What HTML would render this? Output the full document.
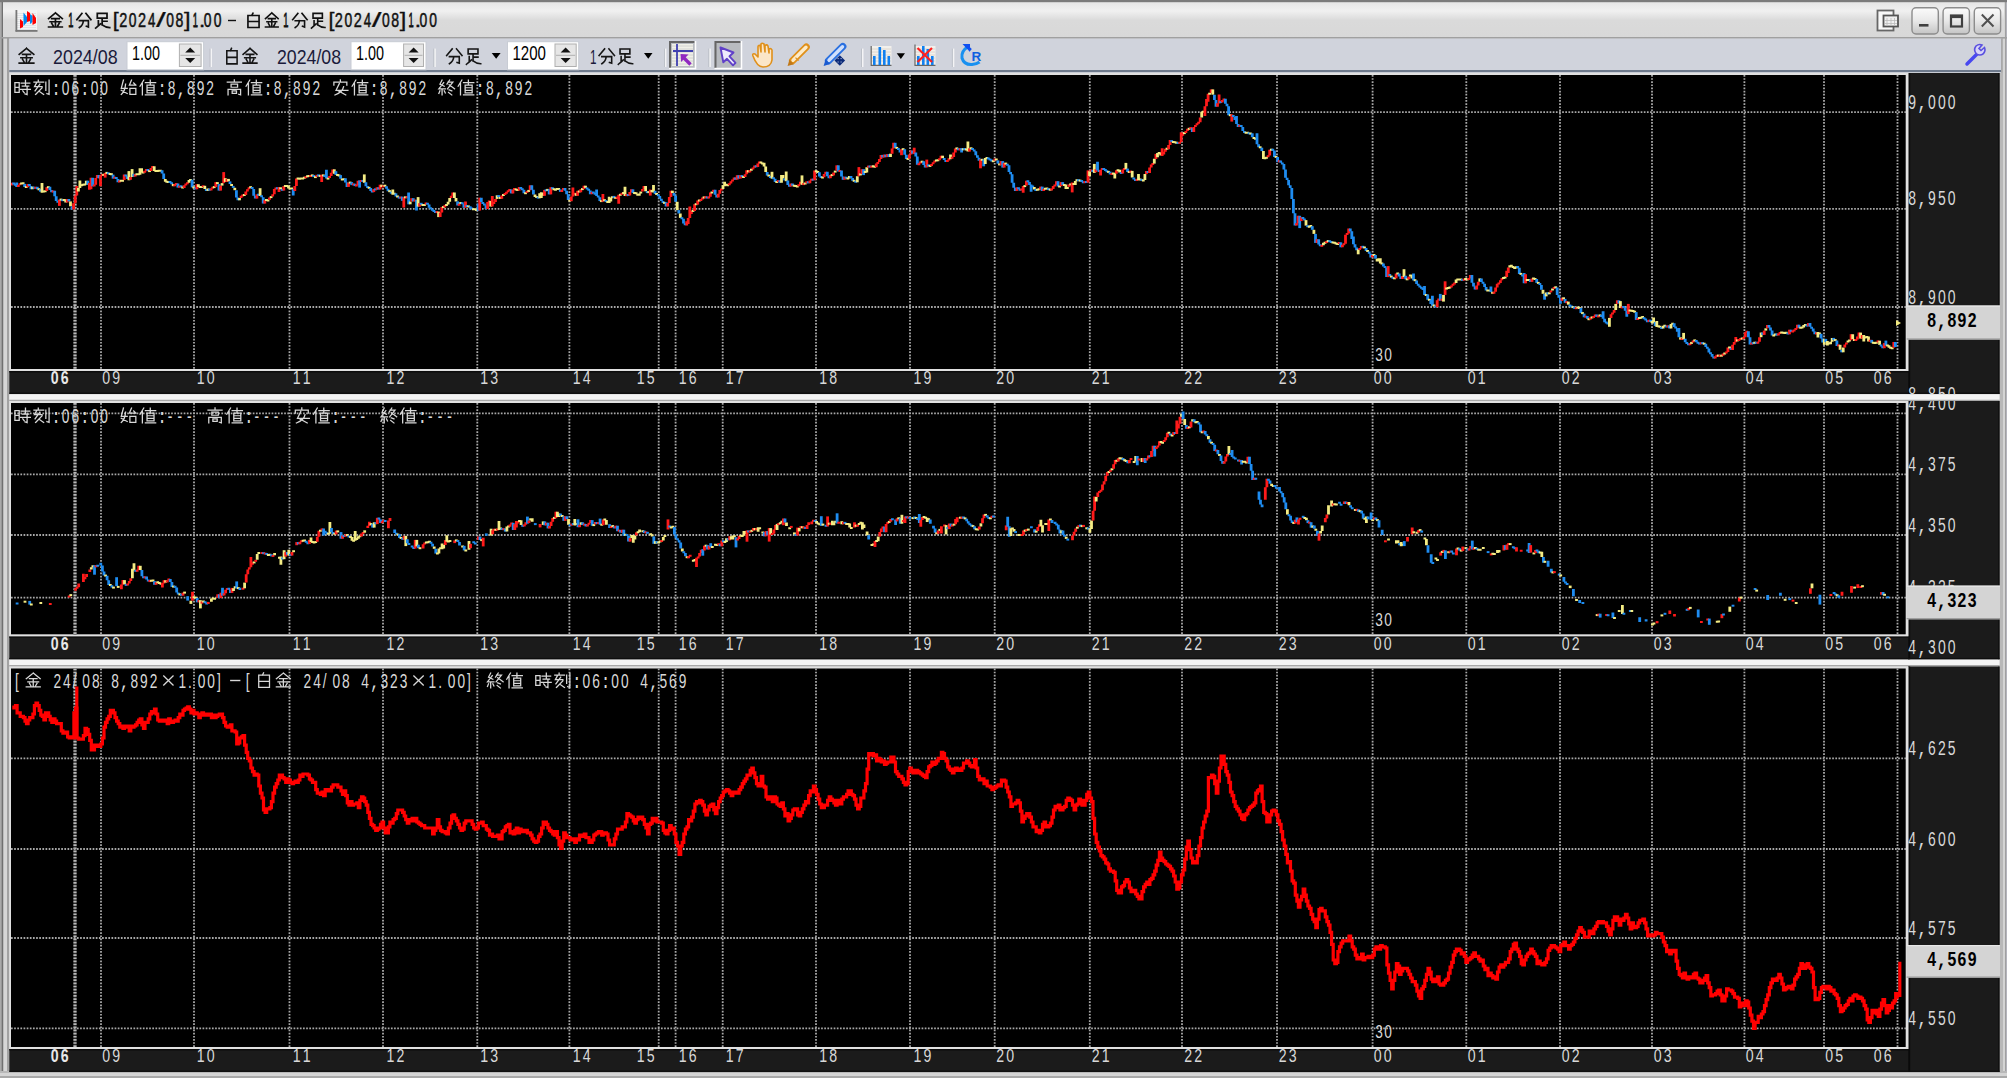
<!DOCTYPE html><html><head><meta charset="utf-8"><style>html,body{margin:0;padding:0;background:#fff;width:2007px;height:1081px}svg{display:block}</style></head><body>
<svg width="2007" height="1081" viewBox="0 0 2007 1081">
<defs>
<symbol id="g-kin" overflow="visible"><path d="M8 1L1.5 6.5M8 1L14.5 6.5M4.5 6.5H11.5M3 9.5H13M8 6.5V14.5M4.5 11L5.8 13.3M11.5 11L10.2 13.3M1.5 14.5H14.5" fill="none" stroke-linecap="square" stroke-linejoin="miter"/></symbol>
<symbol id="g-bun" overflow="visible"><path d="M6 1.5L1 7.5M10 1.5L15 7.5M3.5 8.5H12.5V14.5L10.5 13.8M7.5 8.5Q7 13 3.5 15" fill="none" stroke-linecap="square" stroke-linejoin="miter"/></symbol>
<symbol id="g-soku" overflow="visible"><path d="M3.5 1.5H12.5V6H3.5ZM8 6V12.5M8 9H12.5M4.5 8.5V13M2 15.5Q5 13 6.5 11.5M8 12.5Q11 15 15 15" fill="none" stroke-linecap="square" stroke-linejoin="miter"/></symbol>
<symbol id="g-haku" overflow="visible"><path d="M7.5 0.8L6.5 3M3 3H13V15H3ZM3 9H13" fill="none" stroke-linecap="square" stroke-linejoin="miter"/></symbol>
<symbol id="g-ji" overflow="visible"><path d="M1.2 3.5H5.2V13H1.2ZM1.2 8.2H5.2M7 4H15M11 1V7M8 7H14M6.5 10H15.5M12.5 8V15.2L10.5 14.5M8.5 11.5L9.8 13.3" fill="none" stroke-linecap="square" stroke-linejoin="miter"/></symbol>
<symbol id="g-koku" overflow="visible"><path d="M5 1V3M1 3H10M3.5 3.5L1.5 7.5H8.5M6.5 5L2 11.5M8.5 8.5L2.5 15M6 12L10 15M12 3V11M15 1V15L13 14.2" fill="none" stroke-linecap="square" stroke-linejoin="miter"/></symbol>
<symbol id="g-shi" overflow="visible"><path d="M3.5 1L1.5 9H7M5.5 5Q5 12 1.5 15M1.5 11L7 14M11 1L9 6H15M13 3.8L15 6M9.5 9H15V15H9.5Z" fill="none" stroke-linecap="square" stroke-linejoin="miter"/></symbol>
<symbol id="g-chi" overflow="visible"><path d="M4.5 1L1 7M3.2 4.5V15.5M6 3.5H15.5M10.5 1V5.5M7.5 6H14V13.5H7.5ZM7.5 8.5H14M7.5 11H14M6 15.5H15.5" fill="none" stroke-linecap="square" stroke-linejoin="miter"/></symbol>
<symbol id="g-kou" overflow="visible"><path d="M8 0.8V3M1.5 3H14.5M5 5H11V8H5ZM2.2 10V15.5M2.2 10H13.8V15.5L12 14.8M6 11.5H10V14H6Z" fill="none" stroke-linecap="square" stroke-linejoin="miter"/></symbol>
<symbol id="g-an" overflow="visible"><path d="M8 0.8V2.8M2 6V3H14V6M7 4.5L4 11H15M11 7.5Q10 13 3 15.5M6 11.5L13 15.5" fill="none" stroke-linecap="square" stroke-linejoin="miter"/></symbol>
<symbol id="g-shu" overflow="visible"><path d="M4 1L2 5L6 7M5.5 3.5L1 9.5H7M4 9.5V15.5M2 11.5L1 14M6 11.5L7 13.5M11 1L8.5 5M9.5 3H14L9 9.5M10.5 5.5L15.5 9.5M10.5 10.5L13 11.5M10 13L13 15.5" fill="none" stroke-linecap="square" stroke-linejoin="miter"/></symbol>
<linearGradient id="tg" x1="0" y1="0" x2="0" y2="1"><stop offset="0" stop-color="#e2e2e2"/><stop offset="0.3" stop-color="#f0f0f0"/><stop offset="0.55" stop-color="#dadada"/><stop offset="1" stop-color="#d8d8d8"/></linearGradient>
<linearGradient id="bg" x1="0" y1="0" x2="0" y2="1"><stop offset="0" stop-color="#fbfbfb"/><stop offset="0.5" stop-color="#e8e8e8"/><stop offset="1" stop-color="#c4c4c4"/></linearGradient>
</defs>
<rect x="0" y="0" width="2007" height="1081" fill="#ffffff"/>
<rect x="0" y="0" width="2007" height="1078" fill="#d6d6d6"/>
<rect x="0" y="0" width="1.5" height="1078" fill="#aaaaaa"/>
<rect x="1.5" y="0" width="2" height="1078" fill="#707070"/>
<rect x="3.5" y="0" width="3.5" height="1078" fill="#d6d6d6"/>
<rect x="7" y="37" width="2.3" height="1041" fill="#a2a2a2"/>
<rect x="1999.5" y="37" width="3.5" height="1041" fill="#b8b8b8"/>
<rect x="2003" y="0" width="2" height="1078" fill="#d4d4d4"/>
<rect x="2005" y="0" width="1" height="1078" fill="#a0a0a0"/>
<rect x="2006" y="0" width="1" height="1078" fill="#b4b4bc"/>
<rect x="0" y="1071" width="2007" height="2" fill="#b8b8b8"/>
<rect x="0" y="1073" width="2007" height="3" fill="#d4d4d4"/>
<rect x="0" y="1076" width="2007" height="2" fill="#a8a8a8"/>
<rect x="0" y="1078" width="2007" height="3" fill="#ffffff"/>
<rect x="3" y="0" width="2001" height="37" fill="url(#tg)"/>
<rect x="0" y="0" width="2007" height="2.2" fill="#7a7a7a"/>
<rect x="0" y="37" width="2007" height="1.6" fill="#a0a0a0"/>
<rect x="16" y="10" width="21" height="21" fill="#f4f4f4"/>
<rect x="17" y="13" width="19" height="0.7" fill="#d8dde0"/>
<rect x="17" y="15" width="19" height="0.7" fill="#d8dde0"/>
<rect x="17" y="17" width="19" height="0.7" fill="#d8dde0"/>
<rect x="17" y="19" width="19" height="0.7" fill="#d8dde0"/>
<rect x="17" y="21" width="19" height="0.7" fill="#d8dde0"/>
<rect x="17" y="23" width="19" height="0.7" fill="#d8dde0"/>
<rect x="17" y="25" width="19" height="0.7" fill="#d8dde0"/>
<rect x="17" y="27" width="19" height="0.7" fill="#d8dde0"/>
<rect x="17" y="29" width="19" height="0.7" fill="#d8dde0"/>
<rect x="15.5" y="10" width="1.8" height="21.5" fill="#777"/>
<rect x="15.5" y="30" width="22" height="1.8" fill="#777"/>
<path d="M20 28.5V19L23 21.5V27Z" fill="#ff0000"/>
<path d="M23.5 26V12.5L27 17V22Z" fill="#0088ee"/>
<path d="M27 22V11L30 13V21Z" fill="#ff0000"/>
<path d="M30 24V14L32.5 16V22Z" fill="#0088ee"/>
<path d="M32.5 25V13L36 18V23Z" fill="#ff0000"/>
<use href="#g-kin" transform="translate(47.00,11.80) scale(1.056,1.050)" stroke="#101010" stroke-width="1.614"/>
<text x="0" y="0" transform="translate(68.20,26.90) scale(0.4554,1)" font-family="Liberation Sans" font-weight="normal" font-size="20.43" fill="#101010" stroke="#101010" stroke-width="0.77">1</text>
<use href="#g-bun" transform="translate(75.90,11.80) scale(1.000,1.050)" stroke="#101010" stroke-width="1.659"/>
<use href="#g-soku" transform="translate(93.50,11.80) scale(1.081,1.050)" stroke="#101010" stroke-width="1.595"/>
<text x="0" y="0" transform="translate(112.70,26.90) scale(1.0524,1)" font-family="Liberation Sans" font-weight="normal" font-size="20.43" fill="#101010" stroke="#101010" stroke-width="0.33">[</text>
<text x="0" y="0" transform="translate(119.17,26.90) scale(0.7101,1)" font-family="Liberation Sans" font-weight="normal" font-size="20.43" fill="#101010" stroke="#101010" stroke-width="0.49">2</text>
<text x="0" y="0" transform="translate(128.74,26.90) scale(0.6802,1)" font-family="Liberation Sans" font-weight="normal" font-size="20.43" fill="#101010" stroke="#101010" stroke-width="0.51">0</text>
<text x="0" y="0" transform="translate(138.07,26.90) scale(0.7101,1)" font-family="Liberation Sans" font-weight="normal" font-size="20.43" fill="#101010" stroke="#101010" stroke-width="0.49">2</text>
<text x="0" y="0" transform="translate(147.97,26.90) scale(0.6462,1)" font-family="Liberation Sans" font-weight="normal" font-size="20.43" fill="#101010" stroke="#101010" stroke-width="0.54">4</text>
<text x="0" y="0" transform="translate(156.00,26.90) scale(1.7266,1)" font-family="Liberation Sans" font-weight="normal" font-size="20.43" fill="#101010" stroke="#101010" stroke-width="0.20">/</text>
<text x="0" y="0" transform="translate(166.34,26.90) scale(0.6802,1)" font-family="Liberation Sans" font-weight="normal" font-size="20.43" fill="#101010" stroke="#101010" stroke-width="0.51">0</text>
<text x="0" y="0" transform="translate(175.47,26.90) scale(0.6874,1)" font-family="Liberation Sans" font-weight="normal" font-size="20.43" fill="#101010" stroke="#101010" stroke-width="0.51">8</text>
<text x="0" y="0" transform="translate(184.06,26.90) scale(1.1547,1)" font-family="Liberation Sans" font-weight="normal" font-size="20.43" fill="#101010" stroke="#101010" stroke-width="0.30">]</text>
<text x="0" y="0" transform="translate(192.80,26.90) scale(0.4554,1)" font-family="Liberation Sans" font-weight="normal" font-size="20.43" fill="#101010" stroke="#101010" stroke-width="0.77">1</text>
<text x="0" y="0" transform="translate(198.82,26.90) scale(1.1851,1)" font-family="Liberation Sans" font-weight="normal" font-size="20.43" fill="#101010" stroke="#101010" stroke-width="0.30">.</text>
<text x="0" y="0" transform="translate(203.84,26.90) scale(0.6802,1)" font-family="Liberation Sans" font-weight="normal" font-size="20.43" fill="#101010" stroke="#101010" stroke-width="0.51">0</text>
<text x="0" y="0" transform="translate(213.64,26.90) scale(0.6802,1)" font-family="Liberation Sans" font-weight="normal" font-size="20.43" fill="#101010" stroke="#101010" stroke-width="0.51">0</text>
<path d="M228 20.5H236" stroke="#101010" stroke-width="1.4"/>
<use href="#g-haku" transform="translate(244.60,12.40) scale(1.113,1.012)" stroke="#101010" stroke-width="1.506"/>
<use href="#g-kin" transform="translate(264.00,11.80) scale(0.975,1.050)" stroke="#101010" stroke-width="1.580"/>
<text x="0" y="0" transform="translate(283.30,26.90) scale(0.4554,1)" font-family="Liberation Sans" font-weight="normal" font-size="20.43" fill="#101010" stroke="#101010" stroke-width="0.77">1</text>
<use href="#g-bun" transform="translate(291.60,11.80) scale(1.038,1.050)" stroke="#101010" stroke-width="1.533"/>
<use href="#g-soku" transform="translate(309.40,11.80) scale(1.038,1.050)" stroke="#101010" stroke-width="1.533"/>
<text x="0" y="0" transform="translate(328.39,26.90) scale(1.0524,1)" font-family="Liberation Sans" font-weight="normal" font-size="20.43" fill="#101010" stroke="#101010" stroke-width="0.33">[</text>
<text x="0" y="0" transform="translate(334.87,26.90) scale(0.7101,1)" font-family="Liberation Sans" font-weight="normal" font-size="20.43" fill="#101010" stroke="#101010" stroke-width="0.49">2</text>
<text x="0" y="0" transform="translate(344.44,26.90) scale(0.6802,1)" font-family="Liberation Sans" font-weight="normal" font-size="20.43" fill="#101010" stroke="#101010" stroke-width="0.51">0</text>
<text x="0" y="0" transform="translate(353.77,26.90) scale(0.7101,1)" font-family="Liberation Sans" font-weight="normal" font-size="20.43" fill="#101010" stroke="#101010" stroke-width="0.49">2</text>
<text x="0" y="0" transform="translate(363.67,26.90) scale(0.6462,1)" font-family="Liberation Sans" font-weight="normal" font-size="20.43" fill="#101010" stroke="#101010" stroke-width="0.54">4</text>
<text x="0" y="0" transform="translate(371.70,26.90) scale(1.7266,1)" font-family="Liberation Sans" font-weight="normal" font-size="20.43" fill="#101010" stroke="#101010" stroke-width="0.20">/</text>
<text x="0" y="0" transform="translate(382.04,26.90) scale(0.6802,1)" font-family="Liberation Sans" font-weight="normal" font-size="20.43" fill="#101010" stroke="#101010" stroke-width="0.51">0</text>
<text x="0" y="0" transform="translate(391.17,26.90) scale(0.6874,1)" font-family="Liberation Sans" font-weight="normal" font-size="20.43" fill="#101010" stroke="#101010" stroke-width="0.51">8</text>
<text x="0" y="0" transform="translate(399.76,26.90) scale(1.1547,1)" font-family="Liberation Sans" font-weight="normal" font-size="20.43" fill="#101010" stroke="#101010" stroke-width="0.30">]</text>
<text x="0" y="0" transform="translate(408.50,26.90) scale(0.4554,1)" font-family="Liberation Sans" font-weight="normal" font-size="20.43" fill="#101010" stroke="#101010" stroke-width="0.77">1</text>
<text x="0" y="0" transform="translate(414.52,26.90) scale(1.1851,1)" font-family="Liberation Sans" font-weight="normal" font-size="20.43" fill="#101010" stroke="#101010" stroke-width="0.30">.</text>
<text x="0" y="0" transform="translate(419.54,26.90) scale(0.6802,1)" font-family="Liberation Sans" font-weight="normal" font-size="20.43" fill="#101010" stroke="#101010" stroke-width="0.51">0</text>
<text x="0" y="0" transform="translate(429.34,26.90) scale(0.6802,1)" font-family="Liberation Sans" font-weight="normal" font-size="20.43" fill="#101010" stroke="#101010" stroke-width="0.51">0</text>
<rect x="1877.5" y="10.5" width="16" height="20" fill="#f8f8f8" stroke="#666" stroke-width="1.8"/>
<rect x="1883.5" y="15.5" width="14.5" height="11" fill="#f0f0f0" stroke="#555" stroke-width="1.8"/>
<path d="M1887 18V26" stroke="#bbb" stroke-width="0.8"/>
<path d="M1891 18V26" stroke="#bbb" stroke-width="0.8"/>
<path d="M1894.5 18V26" stroke="#bbb" stroke-width="0.8"/>
<path d="M1885 20.5H1897M1885 23.5H1897" stroke="#bbb" stroke-width="0.8"/>
<rect x="1912.0" y="7.7" width="26.3" height="26.3" rx="4" fill="url(#bg)" stroke="#8c8c8c" stroke-width="1.4"/>
<rect x="1943.1" y="7.7" width="26.3" height="26.3" rx="4" fill="url(#bg)" stroke="#8c8c8c" stroke-width="1.4"/>
<rect x="1974.3" y="7.7" width="26.3" height="26.3" rx="4" fill="url(#bg)" stroke="#8c8c8c" stroke-width="1.4"/>
<rect x="1919" y="24" width="9.5" height="2.6" fill="#404040"/>
<rect x="1951" y="15.5" width="11" height="11" fill="none" stroke="#404040" stroke-width="2.2"/>
<rect x="1951" y="15.5" width="11" height="2.6" fill="#404040"/>
<path d="M1981.8 14.5L1993.5 26.5M1993.5 14.5L1981.8 26.5" stroke="#505050" stroke-width="2.0"/>
<rect x="9.3" y="38.6" width="1992" height="31.6" fill="#d0d3dc"/>
<rect x="9.3" y="70" width="1992" height="2" fill="#6e7a8c"/>
<rect x="9.3" y="72" width="1992" height="1" fill="#c8ccd4"/>
<rect x="2001" y="38.6" width="1.5" height="34" fill="#a8a8a8"/>
<use href="#g-kin" transform="translate(17.50,47.30) scale(1.125,1.094)" stroke="#151515" stroke-width="1.442"/>
<text x="53.00" y="64.00" font-family="'Liberation Sans', sans-serif" font-size="20.95" fill="#1a1a3a" textLength="64.70" lengthAdjust="spacingAndGlyphs">2024/08</text>
<rect x="127" y="41.7" width="76.6" height="28.1" fill="#ffffff"/>
<rect x="127" y="41.7" width="76.6" height="28.1" fill="none" stroke="#c8ccd4" stroke-width="1"/>
<text x="132.00" y="59.80" font-family="'Liberation Sans', sans-serif" font-size="19.97" fill="#000" textLength="28.00" lengthAdjust="spacingAndGlyphs">1.00</text>
<rect x="179.4" y="44" width="21.7" height="22.5" fill="#e6e6e6" stroke="#b0b0b0" stroke-width="1"/>
<path d="M180.4 55.3H200.1" stroke="#b0b0b0" stroke-width="1"/>
<path d="M185.2 52.5L190.2 47.5L195.2 52.5Z" fill="#111"/>
<path d="M185.2 58L190.2 63L195.2 58Z" fill="#111"/>
<rect x="210.4" y="48.6" width="1.6" height="18.4" fill="#f4f4f6"/>
<rect x="209.6" y="48.6" width="0.8" height="18.4" fill="#b8bcc4"/>
<use href="#g-haku" transform="translate(223.70,47.50) scale(1.031,1.094)" stroke="#151515" stroke-width="1.506"/>
<use href="#g-kin" transform="translate(241.50,47.30) scale(1.062,1.094)" stroke="#151515" stroke-width="1.484"/>
<text x="277.00" y="64.00" font-family="'Liberation Sans', sans-serif" font-size="20.95" fill="#1a1a3a" textLength="64.00" lengthAdjust="spacingAndGlyphs">2024/08</text>
<rect x="351" y="41.7" width="75.0" height="28.1" fill="#ffffff"/>
<rect x="351" y="41.7" width="75.0" height="28.1" fill="none" stroke="#c8ccd4" stroke-width="1"/>
<text x="356.00" y="59.80" font-family="'Liberation Sans', sans-serif" font-size="19.97" fill="#000" textLength="28.00" lengthAdjust="spacingAndGlyphs">1.00</text>
<rect x="403.6" y="44" width="19.9" height="22.5" fill="#e6e6e6" stroke="#b0b0b0" stroke-width="1"/>
<path d="M404.6 55.3H422.5" stroke="#b0b0b0" stroke-width="1"/>
<path d="M408.6 52.5L413.6 47.5L418.6 52.5Z" fill="#111"/>
<path d="M408.6 58L413.6 63L418.6 58Z" fill="#111"/>
<rect x="434.2" y="48.6" width="1.6" height="18.4" fill="#f4f4f6"/>
<rect x="433.4" y="48.6" width="0.8" height="18.4" fill="#b8bcc4"/>
<use href="#g-bun" transform="translate(445.60,47.30) scale(1.094,1.094)" stroke="#151515" stroke-width="1.463"/>
<use href="#g-soku" transform="translate(464.30,47.30) scale(1.094,1.094)" stroke="#151515" stroke-width="1.463"/>
<path d="M491.7 53L500.6 53L496.15 58.7Z" fill="#000"/>
<rect x="507.5" y="41.7" width="71.2" height="28.1" fill="#ffffff"/>
<rect x="507.5" y="41.7" width="71.2" height="28.1" fill="none" stroke="#c8ccd4" stroke-width="1"/>
<text x="512.50" y="59.80" font-family="'Liberation Sans', sans-serif" font-size="19.97" fill="#000" textLength="33.50" lengthAdjust="spacingAndGlyphs">1200</text>
<rect x="555.0" y="44" width="21.2" height="22.5" fill="#e6e6e6" stroke="#b0b0b0" stroke-width="1"/>
<path d="M556.0 55.3H575.2" stroke="#b0b0b0" stroke-width="1"/>
<path d="M560.6 52.5L565.6 47.5L570.6 52.5Z" fill="#111"/>
<path d="M560.6 58L565.6 63L570.6 58Z" fill="#111"/>
<text x="590.00" y="64.00" font-family="'Liberation Sans', sans-serif" font-size="20.25" fill="#1a1a3a" textLength="6.50" lengthAdjust="spacingAndGlyphs">1</text>
<use href="#g-bun" transform="translate(598.00,47.30) scale(1.094,1.094)" stroke="#151515" stroke-width="1.463"/>
<use href="#g-soku" transform="translate(616.20,47.30) scale(1.094,1.094)" stroke="#151515" stroke-width="1.463"/>
<path d="M644 53L652.5 53L648.25 58.7Z" fill="#000"/>
<rect x="664.8" y="48.6" width="1.6" height="18.4" fill="#f4f4f6"/>
<rect x="664.0" y="48.6" width="0.8" height="18.4" fill="#b8bcc4"/>
<rect x="669" y="41" width="26.5" height="27.5" fill="#b8bbc0"/>
<path d="M670 68V42H694.5" fill="none" stroke="#666" stroke-width="2"/>
<path d="M669 68.5H695.5V41" fill="none" stroke="#fff" stroke-width="1.5"/>
<rect x="672" y="44" width="21" height="22" fill="#f0f0e8"/>
<path d="M672 46H693" stroke="#ccc" stroke-width="0.8"/>
<path d="M672 49H693" stroke="#ccc" stroke-width="0.8"/>
<path d="M672 52H693" stroke="#ccc" stroke-width="0.8"/>
<path d="M672 55H693" stroke="#ccc" stroke-width="0.8"/>
<path d="M672 58H693" stroke="#ccc" stroke-width="0.8"/>
<path d="M672 61H693" stroke="#ccc" stroke-width="0.8"/>
<path d="M672 64H693" stroke="#ccc" stroke-width="0.8"/>
<path d="M677 44V66M673 51H693" stroke="#4040b0" stroke-width="1.8"/>
<path d="M683.5 57.5L690.5 64.5" stroke="#9028c0" stroke-width="3.4" fill="none"/>
<path d="M680.5 54L688.5 54.6L681.1 62Z" fill="#9028c0"/>
<rect x="709.2" y="48.6" width="1.6" height="18.4" fill="#f4f4f6"/>
<rect x="708.4" y="48.6" width="0.8" height="18.4" fill="#b8bcc4"/>
<rect x="714.5" y="41" width="27.0" height="27.5" fill="#b8bbc0"/>
<path d="M715.5 68V42H740.5" fill="none" stroke="#666" stroke-width="2"/>
<path d="M714.5 68.5H741.5V41" fill="none" stroke="#fff" stroke-width="1.5"/>
<path d="M720.5 47.5L733.5 52.5L729.5 56.3L735.5 62.8L733 65.3L727 58.8L723.3 62.3Z" fill="#eeeafc" stroke="#6040c8" stroke-width="1.9" stroke-linejoin="round"/>
<path d="M753 56Q752 53 755 54L758 57V47Q758 45 760 45.5L761 52V44Q762 42.5 764 44L765 52V45.5Q767 44 768 46L769 53V49Q771 48 772 50L772 60Q771 67 763 67Q757 67 753 56Z" fill="#fbe6c8" stroke="#e0901a" stroke-width="1.6" stroke-linejoin="round"/>
<path d="M792.5 60.8L806.3 47" stroke="#e0901a" stroke-width="7" stroke-linecap="round"/>
<path d="M793 60.3L806 47.3" stroke="#fdebc8" stroke-width="3.4" stroke-linecap="round"/>
<path d="M795.5 57.6L798.6 60.7" stroke="#e0901a" stroke-width="1.2"/>
<path d="M787.6 66L789.4 59.8L793.8 64.2Z" fill="#c07818"/>
<path d="M828.5 60.8L842.8 46.5" stroke="#2a70e0" stroke-width="7.2" stroke-linecap="round"/>
<path d="M829 60.3L842.5 46.8" stroke="#d0e0fc" stroke-width="3.4" stroke-linecap="round"/>
<path d="M823.6 66L825.6 59.6L830 64Z" fill="#1a5ad0"/>
<path d="M834.5 60.5L839.8 55.2L845.1 60.5L839.8 65.8Z" fill="#0c2a78"/>
<path d="M837.6 58.6h1M840.6 58.6h1M837.6 62h1M840.6 62h1" stroke="#c8d4f0" stroke-width="1"/>
<rect x="861.9" y="48.6" width="1.6" height="18.4" fill="#f4f4f6"/>
<rect x="861.1" y="48.6" width="0.8" height="18.4" fill="#b8bcc4"/>
<rect x="871" y="46" width="20.5" height="19.5" fill="#f2f0ec"/>
<path d="M871 49H891" stroke="#d8d0c8" stroke-width="0.8"/>
<path d="M871 52H891" stroke="#d8d0c8" stroke-width="0.8"/>
<path d="M871 55H891" stroke="#d8d0c8" stroke-width="0.8"/>
<path d="M871 58H891" stroke="#d8d0c8" stroke-width="0.8"/>
<path d="M871 61H891" stroke="#d8d0c8" stroke-width="0.8"/>
<path d="M871.2 46V65.3H891.5" fill="none" stroke="#666" stroke-width="1.2"/>
<rect x="873" y="56" width="2.6" height="9" fill="#1080f0"/>
<rect x="878.5" y="47" width="2.6" height="18" fill="#1080f0"/>
<rect x="883" y="50" width="2.6" height="15" fill="#1080f0"/>
<rect x="887.5" y="56" width="2.6" height="9" fill="#1080f0"/>
<path d="M896.7 53.3L905 53.3L900.85 59Z" fill="#000"/>
<rect x="915" y="46" width="20.5" height="19.5" fill="#f2f0ec"/>
<path d="M915 49H935" stroke="#d8d0c8" stroke-width="0.8"/>
<path d="M915 52H935" stroke="#d8d0c8" stroke-width="0.8"/>
<path d="M915 55H935" stroke="#d8d0c8" stroke-width="0.8"/>
<path d="M915 58H935" stroke="#d8d0c8" stroke-width="0.8"/>
<path d="M915 61H935" stroke="#d8d0c8" stroke-width="0.8"/>
<path d="M915 44.5V65.3H935.5" fill="none" stroke="#666" stroke-width="1.2"/>
<rect x="917" y="56" width="2.6" height="9" fill="#1080f0"/>
<rect x="922" y="46" width="2.6" height="19" fill="#1080f0"/>
<rect x="926.5" y="49" width="2.6" height="16" fill="#1080f0"/>
<rect x="931" y="56" width="2.6" height="9" fill="#1080f0"/>
<path d="M917.5 48L932 62M932 48L917.5 62" stroke="#ff2020" stroke-width="2.2"/>
<rect x="952.7" y="48.6" width="1.6" height="18.4" fill="#f4f4f6"/>
<rect x="951.9" y="48.6" width="0.8" height="18.4" fill="#b8bcc4"/>
<path d="M967.5 47Q961 51 962 58Q964 65 972 64.5Q977 64 979.5 62" fill="none" stroke="#1890f0" stroke-width="3"/>
<path d="M962.5 44L970 44L970 52Z" fill="#1050f0"/>
<path d="M966 45.5L971 50" stroke="#1050f0" stroke-width="2.5"/>
<text x="971.5" y="61" font-family="'Liberation Sans', sans-serif" font-size="13.5" font-weight="bold" fill="#1060e0">R</text>
<path d="M1967 64L1979 52" stroke="#4848f0" stroke-width="3.5" stroke-linecap="round"/>
<path d="M1976.5 54Q1973 50 1976 46Q1979 43.5 1982 45L1979 48.5L1981 50.5L1984.5 47.5Q1986 51 1983 54Q1980 56 1976.5 54Z" fill="#d8d4f8" stroke="#5a50e0" stroke-width="1.6"/>
<defs>
<clipPath id="c1"><rect x="11" y="75" width="1895" height="294"/></clipPath>
<clipPath id="c2"><rect x="11" y="403.5" width="1895" height="230.5"/></clipPath>
<clipPath id="c3"><rect x="11" y="668.5" width="1895" height="377.8"/></clipPath>
<clipPath id="ca1"><rect x="1908" y="73" width="92" height="321.5"/></clipPath>
<clipPath id="ca2"><rect x="1908" y="401" width="92" height="258.5"/></clipPath>
<clipPath id="ca3"><rect x="1908" y="666.5" width="92" height="404.5"/></clipPath>
</defs>
<rect x="9.3" y="394.5" width="1990.2" height="5.3" fill="#f4f4f4"/>
<rect x="9.3" y="399.8" width="1990.2" height="1.2" fill="#a8a8a8"/>
<rect x="9.3" y="659.7" width="1990.2" height="5.3" fill="#f4f4f4"/>
<rect x="9.3" y="665" width="1990.2" height="1.5" fill="#a8a8a8"/>
<g>
<rect x="1908" y="73" width="91.5" height="321.0" fill="#1b1b1b"/>
<rect x="1908" y="73" width="2.2" height="321.0" fill="#0a0a0a"/>
<rect x="1998.4" y="73" width="1.1" height="321.0" fill="#0c0c0c"/>
<rect x="9.3" y="371" width="1899" height="23" fill="#1b1b1b"/>
<rect x="9.3" y="392.6" width="1990.2" height="1.2" fill="#0e0e0e"/>
<rect x="9.3" y="371" width="1899" height="1.5" fill="#0c0c0c"/>
<rect x="9.3" y="73" width="1899.2" height="298.0" fill="#e0e0e0"/>
<rect x="11" y="75" width="1894.7" height="294.0" fill="#000"/>
<path d="M75 75V369" stroke="#2a2a2a" stroke-width="3.2"/>
<path d="M75 75V369" stroke="#b8b8b8" stroke-width="3.2" stroke-dasharray="1.7 1.44"/>
<path d="M101 75V369" stroke="#a8a8a8" stroke-width="1.8" stroke-dasharray="1.7 1.44"/>
<path d="M194 75V369" stroke="#a8a8a8" stroke-width="1.8" stroke-dasharray="1.7 1.44"/>
<path d="M289.5 75V369" stroke="#a8a8a8" stroke-width="1.8" stroke-dasharray="1.7 1.44"/>
<path d="M383 75V369" stroke="#a8a8a8" stroke-width="1.8" stroke-dasharray="1.7 1.44"/>
<path d="M477.3 75V369" stroke="#a8a8a8" stroke-width="1.8" stroke-dasharray="1.7 1.44"/>
<path d="M569.4 75V369" stroke="#a8a8a8" stroke-width="1.8" stroke-dasharray="1.7 1.44"/>
<path d="M658.7 75V369" stroke="#a8a8a8" stroke-width="1.8" stroke-dasharray="1.7 1.44"/>
<path d="M675.6 75V369" stroke="#a8a8a8" stroke-width="1.8" stroke-dasharray="1.7 1.44"/>
<path d="M722.7 75V369" stroke="#a8a8a8" stroke-width="1.8" stroke-dasharray="1.7 1.44"/>
<path d="M816 75V369" stroke="#a8a8a8" stroke-width="1.8" stroke-dasharray="1.7 1.44"/>
<path d="M910 75V369" stroke="#a8a8a8" stroke-width="1.8" stroke-dasharray="1.7 1.44"/>
<path d="M994.7 75V369" stroke="#a8a8a8" stroke-width="1.8" stroke-dasharray="1.7 1.44"/>
<path d="M1089.8 75V369" stroke="#a8a8a8" stroke-width="1.8" stroke-dasharray="1.7 1.44"/>
<path d="M1182 75V369" stroke="#a8a8a8" stroke-width="1.8" stroke-dasharray="1.7 1.44"/>
<path d="M1277 75V369" stroke="#a8a8a8" stroke-width="1.8" stroke-dasharray="1.7 1.44"/>
<path d="M1372.6 75V369" stroke="#a8a8a8" stroke-width="1.8" stroke-dasharray="1.7 1.44"/>
<path d="M1466.3 75V369" stroke="#a8a8a8" stroke-width="1.8" stroke-dasharray="1.7 1.44"/>
<path d="M1560 75V369" stroke="#a8a8a8" stroke-width="1.8" stroke-dasharray="1.7 1.44"/>
<path d="M1652 75V369" stroke="#a8a8a8" stroke-width="1.8" stroke-dasharray="1.7 1.44"/>
<path d="M1744.4 75V369" stroke="#a8a8a8" stroke-width="1.8" stroke-dasharray="1.7 1.44"/>
<path d="M1824 75V369" stroke="#a8a8a8" stroke-width="1.8" stroke-dasharray="1.7 1.44"/>
<path d="M1897.5 75V369" stroke="#a8a8a8" stroke-width="1.8" stroke-dasharray="1.7 1.44"/>
<path d="M11 112.2H1906" stroke="#a8a8a8" stroke-width="1.8" stroke-dasharray="1.7 1.44"/>
<path d="M11 208.9H1906" stroke="#a8a8a8" stroke-width="1.8" stroke-dasharray="1.7 1.44"/>
<path d="M11 307.0H1906" stroke="#a8a8a8" stroke-width="1.8" stroke-dasharray="1.7 1.44"/>
<text x="65.70 78.62" y="0" transform="translate(0,384.20) scale(0.7737,1)" font-family="'Liberation Sans', sans-serif" font-size="18.31" fill="#e8e8e8" font-weight="bold" xml:space="preserve">06</text>
<text x="132.26 145.19" y="0" transform="translate(0,384.20) scale(0.7737,1)" font-family="'Liberation Sans', sans-serif" font-size="18.31" fill="#d8d8d8" xml:space="preserve">09</text>
<text x="254.40 267.32" y="0" transform="translate(0,384.20) scale(0.7737,1)" font-family="'Liberation Sans', sans-serif" font-size="18.31" fill="#d8d8d8" xml:space="preserve">10</text>
<text x="378.48 391.40" y="0" transform="translate(0,384.20) scale(0.7737,1)" font-family="'Liberation Sans', sans-serif" font-size="18.31" fill="#d8d8d8" xml:space="preserve">11</text>
<text x="499.45 512.37" y="0" transform="translate(0,384.20) scale(0.7737,1)" font-family="'Liberation Sans', sans-serif" font-size="18.31" fill="#d8d8d8" xml:space="preserve">12</text>
<text x="620.81 633.74" y="0" transform="translate(0,384.20) scale(0.7737,1)" font-family="'Liberation Sans', sans-serif" font-size="18.31" fill="#d8d8d8" xml:space="preserve">13</text>
<text x="740.36 753.29" y="0" transform="translate(0,384.20) scale(0.7737,1)" font-family="'Liberation Sans', sans-serif" font-size="18.31" fill="#d8d8d8" xml:space="preserve">14</text>
<text x="823.08 836.01" y="0" transform="translate(0,384.20) scale(0.7737,1)" font-family="'Liberation Sans', sans-serif" font-size="18.31" fill="#d8d8d8" xml:space="preserve">15</text>
<text x="877.37 890.29" y="0" transform="translate(0,384.20) scale(0.7737,1)" font-family="'Liberation Sans', sans-serif" font-size="18.31" fill="#d8d8d8" xml:space="preserve">16</text>
<text x="938.11 951.04" y="0" transform="translate(0,384.20) scale(0.7737,1)" font-family="'Liberation Sans', sans-serif" font-size="18.31" fill="#d8d8d8" xml:space="preserve">17</text>
<text x="1058.96 1071.88" y="0" transform="translate(0,384.20) scale(0.7737,1)" font-family="'Liberation Sans', sans-serif" font-size="18.31" fill="#d8d8d8" xml:space="preserve">18</text>
<text x="1180.58 1193.50" y="0" transform="translate(0,384.20) scale(0.7737,1)" font-family="'Liberation Sans', sans-serif" font-size="18.31" fill="#d8d8d8" xml:space="preserve">19</text>
<text x="1287.72 1300.65" y="0" transform="translate(0,384.20) scale(0.7737,1)" font-family="'Liberation Sans', sans-serif" font-size="18.31" fill="#d8d8d8" xml:space="preserve">20</text>
<text x="1411.15 1424.08" y="0" transform="translate(0,384.20) scale(0.7737,1)" font-family="'Liberation Sans', sans-serif" font-size="18.31" fill="#d8d8d8" xml:space="preserve">21</text>
<text x="1530.70 1543.63" y="0" transform="translate(0,384.20) scale(0.7737,1)" font-family="'Liberation Sans', sans-serif" font-size="18.31" fill="#d8d8d8" xml:space="preserve">22</text>
<text x="1652.84 1665.77" y="0" transform="translate(0,384.20) scale(0.7737,1)" font-family="'Liberation Sans', sans-serif" font-size="18.31" fill="#d8d8d8" xml:space="preserve">23</text>
<text x="1775.63 1788.55" y="0" transform="translate(0,384.20) scale(0.7737,1)" font-family="'Liberation Sans', sans-serif" font-size="18.31" fill="#d8d8d8" xml:space="preserve">00</text>
<text x="1897.12 1910.04" y="0" transform="translate(0,384.20) scale(0.7737,1)" font-family="'Liberation Sans', sans-serif" font-size="18.31" fill="#d8d8d8" xml:space="preserve">01</text>
<text x="2018.61 2031.53" y="0" transform="translate(0,384.20) scale(0.7737,1)" font-family="'Liberation Sans', sans-serif" font-size="18.31" fill="#d8d8d8" xml:space="preserve">02</text>
<text x="2137.51 2150.44" y="0" transform="translate(0,384.20) scale(0.7737,1)" font-family="'Liberation Sans', sans-serif" font-size="18.31" fill="#d8d8d8" xml:space="preserve">03</text>
<text x="2256.42 2269.35" y="0" transform="translate(0,384.20) scale(0.7737,1)" font-family="'Liberation Sans', sans-serif" font-size="18.31" fill="#d8d8d8" xml:space="preserve">04</text>
<text x="2359.17 2372.10" y="0" transform="translate(0,384.20) scale(0.7737,1)" font-family="'Liberation Sans', sans-serif" font-size="18.31" fill="#d8d8d8" xml:space="preserve">05</text>
<text x="2421.86 2434.78" y="0" transform="translate(0,384.20) scale(0.7737,1)" font-family="'Liberation Sans', sans-serif" font-size="18.31" fill="#d8d8d8" xml:space="preserve">06</text>
<rect x="1908" y="401" width="91.5" height="258.3" fill="#1b1b1b"/>
<rect x="1908" y="401" width="2.2" height="258.3" fill="#0a0a0a"/>
<rect x="1998.4" y="401" width="1.1" height="258.3" fill="#0c0c0c"/>
<rect x="9.3" y="636.3" width="1899" height="23" fill="#1b1b1b"/>
<rect x="9.3" y="657.9" width="1990.2" height="1.2" fill="#0e0e0e"/>
<rect x="9.3" y="636.3" width="1899" height="1.5" fill="#0c0c0c"/>
<rect x="9.3" y="401" width="1899.2" height="235.3" fill="#e0e0e0"/>
<rect x="11" y="403" width="1894.7" height="231.3" fill="#000"/>
<path d="M75 403V634.3" stroke="#2a2a2a" stroke-width="3.2"/>
<path d="M75 403V634.3" stroke="#b8b8b8" stroke-width="3.2" stroke-dasharray="1.7 1.44"/>
<path d="M101 403V634.3" stroke="#a8a8a8" stroke-width="1.8" stroke-dasharray="1.7 1.44"/>
<path d="M194 403V634.3" stroke="#a8a8a8" stroke-width="1.8" stroke-dasharray="1.7 1.44"/>
<path d="M289.5 403V634.3" stroke="#a8a8a8" stroke-width="1.8" stroke-dasharray="1.7 1.44"/>
<path d="M383 403V634.3" stroke="#a8a8a8" stroke-width="1.8" stroke-dasharray="1.7 1.44"/>
<path d="M477.3 403V634.3" stroke="#a8a8a8" stroke-width="1.8" stroke-dasharray="1.7 1.44"/>
<path d="M569.4 403V634.3" stroke="#a8a8a8" stroke-width="1.8" stroke-dasharray="1.7 1.44"/>
<path d="M658.7 403V634.3" stroke="#a8a8a8" stroke-width="1.8" stroke-dasharray="1.7 1.44"/>
<path d="M675.6 403V634.3" stroke="#a8a8a8" stroke-width="1.8" stroke-dasharray="1.7 1.44"/>
<path d="M722.7 403V634.3" stroke="#a8a8a8" stroke-width="1.8" stroke-dasharray="1.7 1.44"/>
<path d="M816 403V634.3" stroke="#a8a8a8" stroke-width="1.8" stroke-dasharray="1.7 1.44"/>
<path d="M910 403V634.3" stroke="#a8a8a8" stroke-width="1.8" stroke-dasharray="1.7 1.44"/>
<path d="M994.7 403V634.3" stroke="#a8a8a8" stroke-width="1.8" stroke-dasharray="1.7 1.44"/>
<path d="M1089.8 403V634.3" stroke="#a8a8a8" stroke-width="1.8" stroke-dasharray="1.7 1.44"/>
<path d="M1182 403V634.3" stroke="#a8a8a8" stroke-width="1.8" stroke-dasharray="1.7 1.44"/>
<path d="M1277 403V634.3" stroke="#a8a8a8" stroke-width="1.8" stroke-dasharray="1.7 1.44"/>
<path d="M1372.6 403V634.3" stroke="#a8a8a8" stroke-width="1.8" stroke-dasharray="1.7 1.44"/>
<path d="M1466.3 403V634.3" stroke="#a8a8a8" stroke-width="1.8" stroke-dasharray="1.7 1.44"/>
<path d="M1560 403V634.3" stroke="#a8a8a8" stroke-width="1.8" stroke-dasharray="1.7 1.44"/>
<path d="M1652 403V634.3" stroke="#a8a8a8" stroke-width="1.8" stroke-dasharray="1.7 1.44"/>
<path d="M1744.4 403V634.3" stroke="#a8a8a8" stroke-width="1.8" stroke-dasharray="1.7 1.44"/>
<path d="M1824 403V634.3" stroke="#a8a8a8" stroke-width="1.8" stroke-dasharray="1.7 1.44"/>
<path d="M1897.5 403V634.3" stroke="#a8a8a8" stroke-width="1.8" stroke-dasharray="1.7 1.44"/>
<path d="M11 413.3H1906" stroke="#a8a8a8" stroke-width="1.8" stroke-dasharray="1.7 1.44"/>
<path d="M11 474.3H1906" stroke="#a8a8a8" stroke-width="1.8" stroke-dasharray="1.7 1.44"/>
<path d="M11 535.0H1906" stroke="#a8a8a8" stroke-width="1.8" stroke-dasharray="1.7 1.44"/>
<path d="M11 597.6H1906" stroke="#a8a8a8" stroke-width="1.8" stroke-dasharray="1.7 1.44"/>
<text x="65.70 78.62" y="0" transform="translate(0,649.60) scale(0.7737,1)" font-family="'Liberation Sans', sans-serif" font-size="18.31" fill="#e8e8e8" font-weight="bold" xml:space="preserve">06</text>
<text x="132.26 145.19" y="0" transform="translate(0,649.60) scale(0.7737,1)" font-family="'Liberation Sans', sans-serif" font-size="18.31" fill="#d8d8d8" xml:space="preserve">09</text>
<text x="254.40 267.32" y="0" transform="translate(0,649.60) scale(0.7737,1)" font-family="'Liberation Sans', sans-serif" font-size="18.31" fill="#d8d8d8" xml:space="preserve">10</text>
<text x="378.48 391.40" y="0" transform="translate(0,649.60) scale(0.7737,1)" font-family="'Liberation Sans', sans-serif" font-size="18.31" fill="#d8d8d8" xml:space="preserve">11</text>
<text x="499.45 512.37" y="0" transform="translate(0,649.60) scale(0.7737,1)" font-family="'Liberation Sans', sans-serif" font-size="18.31" fill="#d8d8d8" xml:space="preserve">12</text>
<text x="620.81 633.74" y="0" transform="translate(0,649.60) scale(0.7737,1)" font-family="'Liberation Sans', sans-serif" font-size="18.31" fill="#d8d8d8" xml:space="preserve">13</text>
<text x="740.36 753.29" y="0" transform="translate(0,649.60) scale(0.7737,1)" font-family="'Liberation Sans', sans-serif" font-size="18.31" fill="#d8d8d8" xml:space="preserve">14</text>
<text x="823.08 836.01" y="0" transform="translate(0,649.60) scale(0.7737,1)" font-family="'Liberation Sans', sans-serif" font-size="18.31" fill="#d8d8d8" xml:space="preserve">15</text>
<text x="877.37 890.29" y="0" transform="translate(0,649.60) scale(0.7737,1)" font-family="'Liberation Sans', sans-serif" font-size="18.31" fill="#d8d8d8" xml:space="preserve">16</text>
<text x="938.11 951.04" y="0" transform="translate(0,649.60) scale(0.7737,1)" font-family="'Liberation Sans', sans-serif" font-size="18.31" fill="#d8d8d8" xml:space="preserve">17</text>
<text x="1058.96 1071.88" y="0" transform="translate(0,649.60) scale(0.7737,1)" font-family="'Liberation Sans', sans-serif" font-size="18.31" fill="#d8d8d8" xml:space="preserve">18</text>
<text x="1180.58 1193.50" y="0" transform="translate(0,649.60) scale(0.7737,1)" font-family="'Liberation Sans', sans-serif" font-size="18.31" fill="#d8d8d8" xml:space="preserve">19</text>
<text x="1287.72 1300.65" y="0" transform="translate(0,649.60) scale(0.7737,1)" font-family="'Liberation Sans', sans-serif" font-size="18.31" fill="#d8d8d8" xml:space="preserve">20</text>
<text x="1411.15 1424.08" y="0" transform="translate(0,649.60) scale(0.7737,1)" font-family="'Liberation Sans', sans-serif" font-size="18.31" fill="#d8d8d8" xml:space="preserve">21</text>
<text x="1530.70 1543.63" y="0" transform="translate(0,649.60) scale(0.7737,1)" font-family="'Liberation Sans', sans-serif" font-size="18.31" fill="#d8d8d8" xml:space="preserve">22</text>
<text x="1652.84 1665.77" y="0" transform="translate(0,649.60) scale(0.7737,1)" font-family="'Liberation Sans', sans-serif" font-size="18.31" fill="#d8d8d8" xml:space="preserve">23</text>
<text x="1775.63 1788.55" y="0" transform="translate(0,649.60) scale(0.7737,1)" font-family="'Liberation Sans', sans-serif" font-size="18.31" fill="#d8d8d8" xml:space="preserve">00</text>
<text x="1897.12 1910.04" y="0" transform="translate(0,649.60) scale(0.7737,1)" font-family="'Liberation Sans', sans-serif" font-size="18.31" fill="#d8d8d8" xml:space="preserve">01</text>
<text x="2018.61 2031.53" y="0" transform="translate(0,649.60) scale(0.7737,1)" font-family="'Liberation Sans', sans-serif" font-size="18.31" fill="#d8d8d8" xml:space="preserve">02</text>
<text x="2137.51 2150.44" y="0" transform="translate(0,649.60) scale(0.7737,1)" font-family="'Liberation Sans', sans-serif" font-size="18.31" fill="#d8d8d8" xml:space="preserve">03</text>
<text x="2256.42 2269.35" y="0" transform="translate(0,649.60) scale(0.7737,1)" font-family="'Liberation Sans', sans-serif" font-size="18.31" fill="#d8d8d8" xml:space="preserve">04</text>
<text x="2359.17 2372.10" y="0" transform="translate(0,649.60) scale(0.7737,1)" font-family="'Liberation Sans', sans-serif" font-size="18.31" fill="#d8d8d8" xml:space="preserve">05</text>
<text x="2421.86 2434.78" y="0" transform="translate(0,649.60) scale(0.7737,1)" font-family="'Liberation Sans', sans-serif" font-size="18.31" fill="#d8d8d8" xml:space="preserve">06</text>
<rect x="1908" y="666.5" width="91.5" height="405.5" fill="#1b1b1b"/>
<rect x="1908" y="666.5" width="2.2" height="405.5" fill="#0a0a0a"/>
<rect x="1998.4" y="666.5" width="1.1" height="405.5" fill="#0c0c0c"/>
<rect x="9.3" y="1049" width="1899" height="23" fill="#1b1b1b"/>
<rect x="9.3" y="1070.6" width="1990.2" height="1.2" fill="#0e0e0e"/>
<rect x="9.3" y="1049" width="1899" height="1.5" fill="#0c0c0c"/>
<rect x="9.3" y="666.5" width="1899.2" height="382.5" fill="#e0e0e0"/>
<rect x="11" y="668.5" width="1894.7" height="378.5" fill="#000"/>
<path d="M75 668.5V1047" stroke="#2a2a2a" stroke-width="3.2"/>
<path d="M75 668.5V1047" stroke="#b8b8b8" stroke-width="3.2" stroke-dasharray="1.7 1.44"/>
<path d="M101 668.5V1047" stroke="#a8a8a8" stroke-width="1.8" stroke-dasharray="1.7 1.44"/>
<path d="M194 668.5V1047" stroke="#a8a8a8" stroke-width="1.8" stroke-dasharray="1.7 1.44"/>
<path d="M289.5 668.5V1047" stroke="#a8a8a8" stroke-width="1.8" stroke-dasharray="1.7 1.44"/>
<path d="M383 668.5V1047" stroke="#a8a8a8" stroke-width="1.8" stroke-dasharray="1.7 1.44"/>
<path d="M477.3 668.5V1047" stroke="#a8a8a8" stroke-width="1.8" stroke-dasharray="1.7 1.44"/>
<path d="M569.4 668.5V1047" stroke="#a8a8a8" stroke-width="1.8" stroke-dasharray="1.7 1.44"/>
<path d="M658.7 668.5V1047" stroke="#a8a8a8" stroke-width="1.8" stroke-dasharray="1.7 1.44"/>
<path d="M675.6 668.5V1047" stroke="#a8a8a8" stroke-width="1.8" stroke-dasharray="1.7 1.44"/>
<path d="M722.7 668.5V1047" stroke="#a8a8a8" stroke-width="1.8" stroke-dasharray="1.7 1.44"/>
<path d="M816 668.5V1047" stroke="#a8a8a8" stroke-width="1.8" stroke-dasharray="1.7 1.44"/>
<path d="M910 668.5V1047" stroke="#a8a8a8" stroke-width="1.8" stroke-dasharray="1.7 1.44"/>
<path d="M994.7 668.5V1047" stroke="#a8a8a8" stroke-width="1.8" stroke-dasharray="1.7 1.44"/>
<path d="M1089.8 668.5V1047" stroke="#a8a8a8" stroke-width="1.8" stroke-dasharray="1.7 1.44"/>
<path d="M1182 668.5V1047" stroke="#a8a8a8" stroke-width="1.8" stroke-dasharray="1.7 1.44"/>
<path d="M1277 668.5V1047" stroke="#a8a8a8" stroke-width="1.8" stroke-dasharray="1.7 1.44"/>
<path d="M1372.6 668.5V1047" stroke="#a8a8a8" stroke-width="1.8" stroke-dasharray="1.7 1.44"/>
<path d="M1466.3 668.5V1047" stroke="#a8a8a8" stroke-width="1.8" stroke-dasharray="1.7 1.44"/>
<path d="M1560 668.5V1047" stroke="#a8a8a8" stroke-width="1.8" stroke-dasharray="1.7 1.44"/>
<path d="M1652 668.5V1047" stroke="#a8a8a8" stroke-width="1.8" stroke-dasharray="1.7 1.44"/>
<path d="M1744.4 668.5V1047" stroke="#a8a8a8" stroke-width="1.8" stroke-dasharray="1.7 1.44"/>
<path d="M1824 668.5V1047" stroke="#a8a8a8" stroke-width="1.8" stroke-dasharray="1.7 1.44"/>
<path d="M1897.5 668.5V1047" stroke="#a8a8a8" stroke-width="1.8" stroke-dasharray="1.7 1.44"/>
<path d="M11 758.4H1906" stroke="#a8a8a8" stroke-width="1.8" stroke-dasharray="1.7 1.44"/>
<path d="M11 849.0H1906" stroke="#a8a8a8" stroke-width="1.8" stroke-dasharray="1.7 1.44"/>
<path d="M11 938.0H1906" stroke="#a8a8a8" stroke-width="1.8" stroke-dasharray="1.7 1.44"/>
<path d="M11 1028.4H1906" stroke="#a8a8a8" stroke-width="1.8" stroke-dasharray="1.7 1.44"/>
<text x="65.70 78.62" y="0" transform="translate(0,1061.50) scale(0.7737,1)" font-family="'Liberation Sans', sans-serif" font-size="18.31" fill="#e8e8e8" font-weight="bold" xml:space="preserve">06</text>
<text x="132.26 145.19" y="0" transform="translate(0,1061.50) scale(0.7737,1)" font-family="'Liberation Sans', sans-serif" font-size="18.31" fill="#d8d8d8" xml:space="preserve">09</text>
<text x="254.40 267.32" y="0" transform="translate(0,1061.50) scale(0.7737,1)" font-family="'Liberation Sans', sans-serif" font-size="18.31" fill="#d8d8d8" xml:space="preserve">10</text>
<text x="378.48 391.40" y="0" transform="translate(0,1061.50) scale(0.7737,1)" font-family="'Liberation Sans', sans-serif" font-size="18.31" fill="#d8d8d8" xml:space="preserve">11</text>
<text x="499.45 512.37" y="0" transform="translate(0,1061.50) scale(0.7737,1)" font-family="'Liberation Sans', sans-serif" font-size="18.31" fill="#d8d8d8" xml:space="preserve">12</text>
<text x="620.81 633.74" y="0" transform="translate(0,1061.50) scale(0.7737,1)" font-family="'Liberation Sans', sans-serif" font-size="18.31" fill="#d8d8d8" xml:space="preserve">13</text>
<text x="740.36 753.29" y="0" transform="translate(0,1061.50) scale(0.7737,1)" font-family="'Liberation Sans', sans-serif" font-size="18.31" fill="#d8d8d8" xml:space="preserve">14</text>
<text x="823.08 836.01" y="0" transform="translate(0,1061.50) scale(0.7737,1)" font-family="'Liberation Sans', sans-serif" font-size="18.31" fill="#d8d8d8" xml:space="preserve">15</text>
<text x="877.37 890.29" y="0" transform="translate(0,1061.50) scale(0.7737,1)" font-family="'Liberation Sans', sans-serif" font-size="18.31" fill="#d8d8d8" xml:space="preserve">16</text>
<text x="938.11 951.04" y="0" transform="translate(0,1061.50) scale(0.7737,1)" font-family="'Liberation Sans', sans-serif" font-size="18.31" fill="#d8d8d8" xml:space="preserve">17</text>
<text x="1058.96 1071.88" y="0" transform="translate(0,1061.50) scale(0.7737,1)" font-family="'Liberation Sans', sans-serif" font-size="18.31" fill="#d8d8d8" xml:space="preserve">18</text>
<text x="1180.58 1193.50" y="0" transform="translate(0,1061.50) scale(0.7737,1)" font-family="'Liberation Sans', sans-serif" font-size="18.31" fill="#d8d8d8" xml:space="preserve">19</text>
<text x="1287.72 1300.65" y="0" transform="translate(0,1061.50) scale(0.7737,1)" font-family="'Liberation Sans', sans-serif" font-size="18.31" fill="#d8d8d8" xml:space="preserve">20</text>
<text x="1411.15 1424.08" y="0" transform="translate(0,1061.50) scale(0.7737,1)" font-family="'Liberation Sans', sans-serif" font-size="18.31" fill="#d8d8d8" xml:space="preserve">21</text>
<text x="1530.70 1543.63" y="0" transform="translate(0,1061.50) scale(0.7737,1)" font-family="'Liberation Sans', sans-serif" font-size="18.31" fill="#d8d8d8" xml:space="preserve">22</text>
<text x="1652.84 1665.77" y="0" transform="translate(0,1061.50) scale(0.7737,1)" font-family="'Liberation Sans', sans-serif" font-size="18.31" fill="#d8d8d8" xml:space="preserve">23</text>
<text x="1775.63 1788.55" y="0" transform="translate(0,1061.50) scale(0.7737,1)" font-family="'Liberation Sans', sans-serif" font-size="18.31" fill="#d8d8d8" xml:space="preserve">00</text>
<text x="1897.12 1910.04" y="0" transform="translate(0,1061.50) scale(0.7737,1)" font-family="'Liberation Sans', sans-serif" font-size="18.31" fill="#d8d8d8" xml:space="preserve">01</text>
<text x="2018.61 2031.53" y="0" transform="translate(0,1061.50) scale(0.7737,1)" font-family="'Liberation Sans', sans-serif" font-size="18.31" fill="#d8d8d8" xml:space="preserve">02</text>
<text x="2137.51 2150.44" y="0" transform="translate(0,1061.50) scale(0.7737,1)" font-family="'Liberation Sans', sans-serif" font-size="18.31" fill="#d8d8d8" xml:space="preserve">03</text>
<text x="2256.42 2269.35" y="0" transform="translate(0,1061.50) scale(0.7737,1)" font-family="'Liberation Sans', sans-serif" font-size="18.31" fill="#d8d8d8" xml:space="preserve">04</text>
<text x="2359.17 2372.10" y="0" transform="translate(0,1061.50) scale(0.7737,1)" font-family="'Liberation Sans', sans-serif" font-size="18.31" fill="#d8d8d8" xml:space="preserve">05</text>
<text x="2421.86 2434.78" y="0" transform="translate(0,1061.50) scale(0.7737,1)" font-family="'Liberation Sans', sans-serif" font-size="18.31" fill="#d8d8d8" xml:space="preserve">06</text>
</g>
<g clip-path="url(#ca1)">
<text x="2772.85" y="0" transform="translate(0,108.80) scale(0.6882,1)" font-family="'Liberation Sans', sans-serif" font-size="20.28" fill="#d8d8d8" xml:space="preserve">9</text>
<text x="2460.58" y="0" transform="translate(0,108.80) scale(0.7792,1)" font-family="'Liberation Mono', monospace" font-size="21.18" fill="#d8d8d8">,</text>
<text x="2801.62 2816.01 2830.39" y="0" transform="translate(0,108.80) scale(0.6882,1)" font-family="'Liberation Sans', sans-serif" font-size="20.28" fill="#d8d8d8" xml:space="preserve">000</text>
<text x="2772.85" y="0" transform="translate(0,205.30) scale(0.6882,1)" font-family="'Liberation Sans', sans-serif" font-size="20.28" fill="#d8d8d8" xml:space="preserve">8</text>
<text x="2460.58" y="0" transform="translate(0,205.30) scale(0.7792,1)" font-family="'Liberation Mono', monospace" font-size="21.18" fill="#d8d8d8">,</text>
<text x="2801.62 2816.01 2830.39" y="0" transform="translate(0,205.30) scale(0.6882,1)" font-family="'Liberation Sans', sans-serif" font-size="20.28" fill="#d8d8d8" xml:space="preserve">950</text>
<text x="2772.85" y="0" transform="translate(0,303.60) scale(0.6882,1)" font-family="'Liberation Sans', sans-serif" font-size="20.28" fill="#d8d8d8" xml:space="preserve">8</text>
<text x="2460.58" y="0" transform="translate(0,303.60) scale(0.7792,1)" font-family="'Liberation Mono', monospace" font-size="21.18" fill="#d8d8d8">,</text>
<text x="2801.62 2816.01 2830.39" y="0" transform="translate(0,303.60) scale(0.6882,1)" font-family="'Liberation Sans', sans-serif" font-size="20.28" fill="#d8d8d8" xml:space="preserve">900</text>
<text x="2772.85" y="0" transform="translate(0,401.00) scale(0.6882,1)" font-family="'Liberation Sans', sans-serif" font-size="20.28" fill="#d8d8d8" xml:space="preserve">8</text>
<text x="2460.58" y="0" transform="translate(0,401.00) scale(0.7792,1)" font-family="'Liberation Mono', monospace" font-size="21.18" fill="#d8d8d8">,</text>
<text x="2801.62 2816.01 2830.39" y="0" transform="translate(0,401.00) scale(0.6882,1)" font-family="'Liberation Sans', sans-serif" font-size="20.28" fill="#d8d8d8" xml:space="preserve">850</text>
</g><g clip-path="url(#ca2)">
<text x="2772.85" y="0" transform="translate(0,410.00) scale(0.6882,1)" font-family="'Liberation Sans', sans-serif" font-size="20.28" fill="#d8d8d8" xml:space="preserve">4</text>
<text x="2460.58" y="0" transform="translate(0,410.00) scale(0.7792,1)" font-family="'Liberation Mono', monospace" font-size="21.18" fill="#d8d8d8">,</text>
<text x="2801.62 2816.01 2830.39" y="0" transform="translate(0,410.00) scale(0.6882,1)" font-family="'Liberation Sans', sans-serif" font-size="20.28" fill="#d8d8d8" xml:space="preserve">400</text>
<text x="2772.85" y="0" transform="translate(0,470.80) scale(0.6882,1)" font-family="'Liberation Sans', sans-serif" font-size="20.28" fill="#d8d8d8" xml:space="preserve">4</text>
<text x="2460.58" y="0" transform="translate(0,470.80) scale(0.7792,1)" font-family="'Liberation Mono', monospace" font-size="21.18" fill="#d8d8d8">,</text>
<text x="2801.62 2816.01 2830.39" y="0" transform="translate(0,470.80) scale(0.6882,1)" font-family="'Liberation Sans', sans-serif" font-size="20.28" fill="#d8d8d8" xml:space="preserve">375</text>
<text x="2772.85" y="0" transform="translate(0,531.50) scale(0.6882,1)" font-family="'Liberation Sans', sans-serif" font-size="20.28" fill="#d8d8d8" xml:space="preserve">4</text>
<text x="2460.58" y="0" transform="translate(0,531.50) scale(0.7792,1)" font-family="'Liberation Mono', monospace" font-size="21.18" fill="#d8d8d8">,</text>
<text x="2801.62 2816.01 2830.39" y="0" transform="translate(0,531.50) scale(0.6882,1)" font-family="'Liberation Sans', sans-serif" font-size="20.28" fill="#d8d8d8" xml:space="preserve">350</text>
<text x="2772.85" y="0" transform="translate(0,594.00) scale(0.6882,1)" font-family="'Liberation Sans', sans-serif" font-size="20.28" fill="#d8d8d8" xml:space="preserve">4</text>
<text x="2460.58" y="0" transform="translate(0,594.00) scale(0.7792,1)" font-family="'Liberation Mono', monospace" font-size="21.18" fill="#d8d8d8">,</text>
<text x="2801.62 2816.01 2830.39" y="0" transform="translate(0,594.00) scale(0.6882,1)" font-family="'Liberation Sans', sans-serif" font-size="20.28" fill="#d8d8d8" xml:space="preserve">325</text>
<text x="2772.85" y="0" transform="translate(0,654.30) scale(0.6882,1)" font-family="'Liberation Sans', sans-serif" font-size="20.28" fill="#d8d8d8" xml:space="preserve">4</text>
<text x="2460.58" y="0" transform="translate(0,654.30) scale(0.7792,1)" font-family="'Liberation Mono', monospace" font-size="21.18" fill="#d8d8d8">,</text>
<text x="2801.62 2816.01 2830.39" y="0" transform="translate(0,654.30) scale(0.6882,1)" font-family="'Liberation Sans', sans-serif" font-size="20.28" fill="#d8d8d8" xml:space="preserve">300</text>
</g><g clip-path="url(#ca3)">
<text x="2772.85" y="0" transform="translate(0,755.00) scale(0.6882,1)" font-family="'Liberation Sans', sans-serif" font-size="20.28" fill="#d8d8d8" xml:space="preserve">4</text>
<text x="2460.58" y="0" transform="translate(0,755.00) scale(0.7792,1)" font-family="'Liberation Mono', monospace" font-size="21.18" fill="#d8d8d8">,</text>
<text x="2801.62 2816.01 2830.39" y="0" transform="translate(0,755.00) scale(0.6882,1)" font-family="'Liberation Sans', sans-serif" font-size="20.28" fill="#d8d8d8" xml:space="preserve">625</text>
<text x="2772.85" y="0" transform="translate(0,845.50) scale(0.6882,1)" font-family="'Liberation Sans', sans-serif" font-size="20.28" fill="#d8d8d8" xml:space="preserve">4</text>
<text x="2460.58" y="0" transform="translate(0,845.50) scale(0.7792,1)" font-family="'Liberation Mono', monospace" font-size="21.18" fill="#d8d8d8">,</text>
<text x="2801.62 2816.01 2830.39" y="0" transform="translate(0,845.50) scale(0.6882,1)" font-family="'Liberation Sans', sans-serif" font-size="20.28" fill="#d8d8d8" xml:space="preserve">600</text>
<text x="2772.85" y="0" transform="translate(0,934.50) scale(0.6882,1)" font-family="'Liberation Sans', sans-serif" font-size="20.28" fill="#d8d8d8" xml:space="preserve">4</text>
<text x="2460.58" y="0" transform="translate(0,934.50) scale(0.7792,1)" font-family="'Liberation Mono', monospace" font-size="21.18" fill="#d8d8d8">,</text>
<text x="2801.62 2816.01 2830.39" y="0" transform="translate(0,934.50) scale(0.6882,1)" font-family="'Liberation Sans', sans-serif" font-size="20.28" fill="#d8d8d8" xml:space="preserve">575</text>
<text x="2772.85" y="0" transform="translate(0,1025.00) scale(0.6882,1)" font-family="'Liberation Sans', sans-serif" font-size="20.28" fill="#d8d8d8" xml:space="preserve">4</text>
<text x="2460.58" y="0" transform="translate(0,1025.00) scale(0.7792,1)" font-family="'Liberation Mono', monospace" font-size="21.18" fill="#d8d8d8">,</text>
<text x="2801.62 2816.01 2830.39" y="0" transform="translate(0,1025.00) scale(0.6882,1)" font-family="'Liberation Sans', sans-serif" font-size="20.28" fill="#d8d8d8" xml:space="preserve">550</text>
</g>
<rect x="1906.6" y="305.5" width="93.4" height="34.1" fill="#d4d4d4"/>
<rect x="1906.6" y="338.4" width="93.4" height="1.2" fill="#9a9a9a"/>
<rect x="1906.6" y="305.5" width="93.4" height="1.2" fill="#e8e8e8"/>
<text x="2434.38" y="0" transform="translate(0,326.50) scale(0.7917,1)" font-family="'Liberation Sans', sans-serif" font-size="20.00" fill="#000" font-weight="bold" xml:space="preserve">8</text>
<text x="2402.55" y="0" transform="translate(0,326.50) scale(0.8061,1)" font-family="'Liberation Mono', monospace" font-size="20.88" fill="#000" font-weight="bold">,</text>
<text x="2459.89 2472.65 2485.41" y="0" transform="translate(0,326.50) scale(0.7917,1)" font-family="'Liberation Sans', sans-serif" font-size="20.00" fill="#000" font-weight="bold" xml:space="preserve">892</text>
<rect x="1906.6" y="585.6" width="93.4" height="33.7" fill="#d4d4d4"/>
<rect x="1906.6" y="618.1" width="93.4" height="1.2" fill="#9a9a9a"/>
<rect x="1906.6" y="585.6" width="93.4" height="1.2" fill="#e8e8e8"/>
<text x="2434.38" y="0" transform="translate(0,606.60) scale(0.7917,1)" font-family="'Liberation Sans', sans-serif" font-size="20.00" fill="#000" font-weight="bold" xml:space="preserve">4</text>
<text x="2402.55" y="0" transform="translate(0,606.60) scale(0.8061,1)" font-family="'Liberation Mono', monospace" font-size="20.88" fill="#000" font-weight="bold">,</text>
<text x="2459.89 2472.65 2485.41" y="0" transform="translate(0,606.60) scale(0.7917,1)" font-family="'Liberation Sans', sans-serif" font-size="20.00" fill="#000" font-weight="bold" xml:space="preserve">323</text>
<rect x="1906.6" y="945" width="93.4" height="32.7" fill="#d4d4d4"/>
<rect x="1906.6" y="976.5" width="93.4" height="1.2" fill="#9a9a9a"/>
<rect x="1906.6" y="945" width="93.4" height="1.2" fill="#e8e8e8"/>
<text x="2434.38" y="0" transform="translate(0,966.00) scale(0.7917,1)" font-family="'Liberation Sans', sans-serif" font-size="20.00" fill="#000" font-weight="bold" xml:space="preserve">4</text>
<text x="2402.55" y="0" transform="translate(0,966.00) scale(0.8061,1)" font-family="'Liberation Mono', monospace" font-size="20.88" fill="#000" font-weight="bold">,</text>
<text x="2459.89 2472.65 2485.41" y="0" transform="translate(0,966.00) scale(0.7917,1)" font-family="'Liberation Sans', sans-serif" font-size="20.00" fill="#000" font-weight="bold" xml:space="preserve">569</text>
<use href="#g-ji" transform="translate(13.60,79.00) scale(1.080,1.031)" stroke="#d8d8d8" stroke-width="1.184"/>
<use href="#g-koku" transform="translate(32.88,79.00) scale(1.080,1.031)" stroke="#d8d8d8" stroke-width="1.184"/>
<text x="65.56" y="0" transform="translate(0,94.50) scale(0.7804,1)" font-family="'Liberation Mono', monospace" font-size="20.59" fill="#d8d8d8">:</text>
<text x="88.58 102.41" y="0" transform="translate(0,94.50) scale(0.6973,1)" font-family="'Liberation Sans', sans-serif" font-size="19.72" fill="#d8d8d8" xml:space="preserve">06</text>
<text x="102.62" y="0" transform="translate(0,94.50) scale(0.7804,1)" font-family="'Liberation Mono', monospace" font-size="20.59" fill="#d8d8d8">:</text>
<text x="130.05 143.88" y="0" transform="translate(0,94.50) scale(0.6973,1)" font-family="'Liberation Sans', sans-serif" font-size="19.72" fill="#d8d8d8" xml:space="preserve">00</text>
<use href="#g-shi" transform="translate(119.64,79.00) scale(1.080,1.031)" stroke="#d8d8d8" stroke-width="1.184"/>
<use href="#g-chi" transform="translate(138.92,79.00) scale(1.080,1.031)" stroke="#d8d8d8" stroke-width="1.184"/>
<text x="201.44" y="0" transform="translate(0,94.50) scale(0.7804,1)" font-family="'Liberation Mono', monospace" font-size="20.59" fill="#d8d8d8">:</text>
<text x="240.65" y="0" transform="translate(0,94.50) scale(0.6973,1)" font-family="'Liberation Sans', sans-serif" font-size="19.72" fill="#d8d8d8" xml:space="preserve">8</text>
<text x="226.15" y="0" transform="translate(0,94.50) scale(0.7804,1)" font-family="'Liberation Mono', monospace" font-size="20.59" fill="#d8d8d8">,</text>
<text x="268.30 282.12 295.95" y="0" transform="translate(0,94.50) scale(0.6973,1)" font-family="'Liberation Sans', sans-serif" font-size="19.72" fill="#d8d8d8" xml:space="preserve">892</text>
<use href="#g-kou" transform="translate(225.68,79.00) scale(1.080,1.031)" stroke="#d8d8d8" stroke-width="1.184"/>
<use href="#g-chi" transform="translate(244.96,79.00) scale(1.080,1.031)" stroke="#d8d8d8" stroke-width="1.184"/>
<text x="337.32" y="0" transform="translate(0,94.50) scale(0.7804,1)" font-family="'Liberation Mono', monospace" font-size="20.59" fill="#d8d8d8">:</text>
<text x="392.72" y="0" transform="translate(0,94.50) scale(0.6973,1)" font-family="'Liberation Sans', sans-serif" font-size="19.72" fill="#d8d8d8" xml:space="preserve">8</text>
<text x="362.03" y="0" transform="translate(0,94.50) scale(0.7804,1)" font-family="'Liberation Mono', monospace" font-size="20.59" fill="#d8d8d8">,</text>
<text x="420.37 434.19 448.01" y="0" transform="translate(0,94.50) scale(0.6973,1)" font-family="'Liberation Sans', sans-serif" font-size="19.72" fill="#d8d8d8" xml:space="preserve">892</text>
<use href="#g-an" transform="translate(331.72,79.00) scale(1.080,1.031)" stroke="#d8d8d8" stroke-width="1.184"/>
<use href="#g-chi" transform="translate(351.00,79.00) scale(1.080,1.031)" stroke="#d8d8d8" stroke-width="1.184"/>
<text x="473.20" y="0" transform="translate(0,94.50) scale(0.7804,1)" font-family="'Liberation Mono', monospace" font-size="20.59" fill="#d8d8d8">:</text>
<text x="544.78" y="0" transform="translate(0,94.50) scale(0.6973,1)" font-family="'Liberation Sans', sans-serif" font-size="19.72" fill="#d8d8d8" xml:space="preserve">8</text>
<text x="497.91" y="0" transform="translate(0,94.50) scale(0.7804,1)" font-family="'Liberation Mono', monospace" font-size="20.59" fill="#d8d8d8">,</text>
<text x="572.43 586.26 600.08" y="0" transform="translate(0,94.50) scale(0.6973,1)" font-family="'Liberation Sans', sans-serif" font-size="19.72" fill="#d8d8d8" xml:space="preserve">892</text>
<use href="#g-shu" transform="translate(437.76,79.00) scale(1.080,1.031)" stroke="#d8d8d8" stroke-width="1.184"/>
<use href="#g-chi" transform="translate(457.04,79.00) scale(1.080,1.031)" stroke="#d8d8d8" stroke-width="1.184"/>
<text x="609.09" y="0" transform="translate(0,94.50) scale(0.7804,1)" font-family="'Liberation Mono', monospace" font-size="20.59" fill="#d8d8d8">:</text>
<text x="696.85" y="0" transform="translate(0,94.50) scale(0.6973,1)" font-family="'Liberation Sans', sans-serif" font-size="19.72" fill="#d8d8d8" xml:space="preserve">8</text>
<text x="633.79" y="0" transform="translate(0,94.50) scale(0.7804,1)" font-family="'Liberation Mono', monospace" font-size="20.59" fill="#d8d8d8">,</text>
<text x="724.50 738.33 752.15" y="0" transform="translate(0,94.50) scale(0.6973,1)" font-family="'Liberation Sans', sans-serif" font-size="19.72" fill="#d8d8d8" xml:space="preserve">892</text>
<use href="#g-ji" transform="translate(13.60,407.00) scale(1.080,1.031)" stroke="#d8d8d8" stroke-width="1.184"/>
<use href="#g-koku" transform="translate(32.88,407.00) scale(1.080,1.031)" stroke="#d8d8d8" stroke-width="1.184"/>
<text x="65.56" y="0" transform="translate(0,422.50) scale(0.7804,1)" font-family="'Liberation Mono', monospace" font-size="20.59" fill="#d8d8d8">:</text>
<text x="88.58 102.41" y="0" transform="translate(0,422.50) scale(0.6973,1)" font-family="'Liberation Sans', sans-serif" font-size="19.72" fill="#d8d8d8" xml:space="preserve">06</text>
<text x="102.62" y="0" transform="translate(0,422.50) scale(0.7804,1)" font-family="'Liberation Mono', monospace" font-size="20.59" fill="#d8d8d8">:</text>
<text x="130.05 143.88" y="0" transform="translate(0,422.50) scale(0.6973,1)" font-family="'Liberation Sans', sans-serif" font-size="19.72" fill="#d8d8d8" xml:space="preserve">00</text>
<use href="#g-shi" transform="translate(119.64,407.00) scale(1.080,1.031)" stroke="#d8d8d8" stroke-width="1.184"/>
<use href="#g-chi" transform="translate(138.92,407.00) scale(1.080,1.031)" stroke="#d8d8d8" stroke-width="1.184"/>
<text x="201.44" y="0" transform="translate(0,422.50) scale(0.7804,1)" font-family="'Liberation Mono', monospace" font-size="20.59" fill="#d8d8d8">:</text>
<text x="240.65 254.47 268.30" y="0" transform="translate(0,422.50) scale(0.6973,1)" font-family="'Liberation Sans', sans-serif" font-size="19.72" fill="#d8d8d8" xml:space="preserve">---</text>
<use href="#g-kou" transform="translate(206.40,407.00) scale(1.080,1.031)" stroke="#d8d8d8" stroke-width="1.184"/>
<use href="#g-chi" transform="translate(225.68,407.00) scale(1.080,1.031)" stroke="#d8d8d8" stroke-width="1.184"/>
<text x="312.62" y="0" transform="translate(0,422.50) scale(0.7804,1)" font-family="'Liberation Mono', monospace" font-size="20.59" fill="#d8d8d8">:</text>
<text x="365.07 378.89 392.72" y="0" transform="translate(0,422.50) scale(0.6973,1)" font-family="'Liberation Sans', sans-serif" font-size="19.72" fill="#d8d8d8" xml:space="preserve">---</text>
<use href="#g-an" transform="translate(293.16,407.00) scale(1.080,1.031)" stroke="#d8d8d8" stroke-width="1.184"/>
<use href="#g-chi" transform="translate(312.44,407.00) scale(1.080,1.031)" stroke="#d8d8d8" stroke-width="1.184"/>
<text x="423.79" y="0" transform="translate(0,422.50) scale(0.7804,1)" font-family="'Liberation Mono', monospace" font-size="20.59" fill="#d8d8d8">:</text>
<text x="489.49 503.31 517.14" y="0" transform="translate(0,422.50) scale(0.6973,1)" font-family="'Liberation Sans', sans-serif" font-size="19.72" fill="#d8d8d8" xml:space="preserve">---</text>
<use href="#g-shu" transform="translate(379.92,407.00) scale(1.080,1.031)" stroke="#d8d8d8" stroke-width="1.184"/>
<use href="#g-chi" transform="translate(399.20,407.00) scale(1.080,1.031)" stroke="#d8d8d8" stroke-width="1.184"/>
<text x="534.97" y="0" transform="translate(0,422.50) scale(0.7804,1)" font-family="'Liberation Mono', monospace" font-size="20.59" fill="#d8d8d8">:</text>
<text x="613.91 627.73 641.55" y="0" transform="translate(0,422.50) scale(0.6973,1)" font-family="'Liberation Sans', sans-serif" font-size="19.72" fill="#d8d8d8" xml:space="preserve">---</text>
<text x="21.45" y="0" transform="translate(0,687.50) scale(0.6973,1)" font-family="'Liberation Sans', sans-serif" font-size="19.72" fill="#d8d8d8" xml:space="preserve">[</text>
<use href="#g-kin" transform="translate(24.62,672.00) scale(1.077,1.031)" stroke="#d8d8d8" stroke-width="1.186"/>
<text x="76.64 90.43 104.23 118.02 131.82 159.41" y="0" transform="translate(0,687.50) scale(0.6973,1)" font-family="'Liberation Sans', sans-serif" font-size="19.72" fill="#d8d8d8" xml:space="preserve">24/088</text>
<text x="153.86" y="0" transform="translate(0,687.50) scale(0.7788,1)" font-family="'Liberation Mono', monospace" font-size="20.59" fill="#d8d8d8">,</text>
<text x="187.00 200.80 214.59" y="0" transform="translate(0,687.50) scale(0.6973,1)" font-family="'Liberation Sans', sans-serif" font-size="19.72" fill="#d8d8d8" xml:space="preserve">892</text>
<path d="M163.3 675.5L173.5 685.5M173.5 675.5L163.3 685.5" stroke="#d8d8d8" stroke-width="1.3"/>
<text x="255.98 269.78 283.57 297.37 311.16" y="0" transform="translate(0,687.50) scale(0.6973,1)" font-family="'Liberation Sans', sans-serif" font-size="19.72" fill="#d8d8d8" xml:space="preserve">1.00]</text>
<path d="M230.1 680.5H240.4" stroke="#d8d8d8" stroke-width="1.4"/>
<text x="352.55" y="0" transform="translate(0,687.50) scale(0.6973,1)" font-family="'Liberation Sans', sans-serif" font-size="19.72" fill="#d8d8d8" xml:space="preserve">[</text>
<use href="#g-haku" transform="translate(255.50,672.00) scale(1.077,1.031)" stroke="#d8d8d8" stroke-width="1.186"/>
<use href="#g-kin" transform="translate(274.74,672.00) scale(1.077,1.031)" stroke="#d8d8d8" stroke-width="1.186"/>
<text x="435.32 449.12 462.91 476.71 490.51 518.10" y="0" transform="translate(0,687.50) scale(0.6973,1)" font-family="'Liberation Sans', sans-serif" font-size="19.72" fill="#d8d8d8" xml:space="preserve">24/084</text>
<text x="475.04" y="0" transform="translate(0,687.50) scale(0.7788,1)" font-family="'Liberation Mono', monospace" font-size="20.59" fill="#d8d8d8">,</text>
<text x="545.69 559.48 573.28" y="0" transform="translate(0,687.50) scale(0.6973,1)" font-family="'Liberation Sans', sans-serif" font-size="19.72" fill="#d8d8d8" xml:space="preserve">323</text>
<path d="M413.4 675.5L423.7 685.5M423.7 675.5L413.4 685.5" stroke="#d8d8d8" stroke-width="1.3"/>
<text x="614.67 628.46 642.26 656.05 669.85" y="0" transform="translate(0,687.50) scale(0.6973,1)" font-family="'Liberation Sans', sans-serif" font-size="19.72" fill="#d8d8d8" xml:space="preserve">1.00]</text>
<use href="#g-shu" transform="translate(486.38,672.00) scale(1.077,1.031)" stroke="#d8d8d8" stroke-width="1.186"/>
<use href="#g-chi" transform="translate(505.62,672.00) scale(1.077,1.031)" stroke="#d8d8d8" stroke-width="1.186"/>
<use href="#g-ji" transform="translate(534.48,672.00) scale(1.077,1.031)" stroke="#d8d8d8" stroke-width="1.186"/>
<use href="#g-koku" transform="translate(553.72,672.00) scale(1.077,1.031)" stroke="#d8d8d8" stroke-width="1.186"/>
<text x="734.45" y="0" transform="translate(0,687.50) scale(0.7788,1)" font-family="'Liberation Mono', monospace" font-size="20.59" fill="#d8d8d8">:</text>
<text x="835.40 849.19" y="0" transform="translate(0,687.50) scale(0.6973,1)" font-family="'Liberation Sans', sans-serif" font-size="19.72" fill="#d8d8d8" xml:space="preserve">06</text>
<text x="771.51" y="0" transform="translate(0,687.50) scale(0.7788,1)" font-family="'Liberation Mono', monospace" font-size="20.59" fill="#d8d8d8">:</text>
<text x="876.78 890.58 918.17" y="0" transform="translate(0,687.50) scale(0.6973,1)" font-family="'Liberation Sans', sans-serif" font-size="19.72" fill="#d8d8d8" xml:space="preserve">004</text>
<text x="833.27" y="0" transform="translate(0,687.50) scale(0.7788,1)" font-family="'Liberation Mono', monospace" font-size="20.59" fill="#d8d8d8">,</text>
<text x="945.76 959.56 973.35" y="0" transform="translate(0,687.50) scale(0.6973,1)" font-family="'Liberation Sans', sans-serif" font-size="19.72" fill="#d8d8d8" xml:space="preserve">569</text>
<text x="1859.36 1871.53" y="0" transform="translate(0,361.00) scale(0.7396,1)" font-family="'Liberation Sans', sans-serif" font-size="18.59" fill="#d8d8d8" xml:space="preserve">30</text>
<text x="1859.36 1871.53" y="0" transform="translate(0,626.40) scale(0.7396,1)" font-family="'Liberation Sans', sans-serif" font-size="18.59" fill="#d8d8d8" xml:space="preserve">30</text>
<text x="1859.36 1871.53" y="0" transform="translate(0,1038.20) scale(0.7396,1)" font-family="'Liberation Sans', sans-serif" font-size="18.59" fill="#d8d8d8" xml:space="preserve">30</text>
<g clip-path="url(#c1)" fill="none" stroke-width="2.8">
<path d="M12.0 182.7V185.4" stroke="#ff1a1a"/>
<path d="M13.6 182.5V184.5M15.2 183.8V185.8M16.7 182.6V187.1" stroke="#1e8cf0"/>
<path d="M18.3 185.0V187.0M19.9 183.3V185.3" stroke="#ff1a1a"/>
<path d="M21.5 182.5V184.5M23.1 182.2V184.2" stroke="#f4ec84"/>
<path d="M24.6 183.9V187.0" stroke="#1e8cf0"/>
<path d="M26.2 186.0V188.0" stroke="#f4ec84"/>
<path d="M27.8 184.0V187.2" stroke="#ff1a1a"/>
<path d="M29.4 184.0V186.0M31.0 185.9V189.2" stroke="#1e8cf0"/>
<path d="M32.5 186.7V189.2" stroke="#f4ec84"/>
<path d="M34.1 186.7V188.8" stroke="#1e8cf0"/>
<path d="M35.7 186.8V188.8" stroke="#ff1a1a"/>
<path d="M37.3 186.8V189.3" stroke="#1e8cf0"/>
<path d="M38.9 188.3V190.3" stroke="#f4ec84"/>
<path d="M40.4 189.1V191.7" stroke="#1e8cf0"/>
<path d="M42.0 182.9V192.7M43.6 190.6V192.6M45.2 190.2V192.2" stroke="#f4ec84"/>
<path d="M46.8 187.2V190.9" stroke="#ff1a1a"/>
<path d="M48.3 186.2V188.2" stroke="#f4ec84"/>
<path d="M49.9 186.7V190.1M51.5 190.1V192.2" stroke="#1e8cf0"/>
<path d="M53.1 190.5V192.5" stroke="#ff1a1a"/>
<path d="M54.7 190.8V196.3M56.2 196.3V200.9M57.8 200.7V202.7" stroke="#1e8cf0"/>
<path d="M59.4 199.6V205.9" stroke="#ff1a1a"/>
<path d="M61.0 198.6V200.6" stroke="#f4ec84"/>
<path d="M62.6 199.2V201.2" stroke="#1e8cf0"/>
<path d="M64.1 199.1V201.1M65.7 199.2V202.5" stroke="#f4ec84"/>
<path d="M67.3 199.0V202.5" stroke="#ff1a1a"/>
<path d="M68.9 199.0V201.4" stroke="#1e8cf0"/>
<path d="M70.5 201.4V206.3" stroke="#f4ec84"/>
<path d="M72.0 206.3V209.5" stroke="#1e8cf0"/>
<path d="M73.6 203.2V209.5M75.2 195.4V203.2M76.8 186.0V195.4" stroke="#ff1a1a"/>
<path d="M78.4 187.9V191.4M79.9 180.5V187.9M81.5 184.2V186.2M83.1 183.8V185.8M84.7 183.6V185.6M86.3 180.7V184.8" stroke="#f4ec84"/>
<path d="M87.8 180.7V184.8" stroke="#1e8cf0"/>
<path d="M89.4 182.9V189.8M91.0 177.8V189.3" stroke="#ff1a1a"/>
<path d="M92.6 177.8V186.3" stroke="#1e8cf0"/>
<path d="M94.2 184.5V186.5M95.7 177.9V184.7M97.3 175.0V177.9" stroke="#ff1a1a"/>
<path d="M98.9 175.0V178.4" stroke="#1e8cf0"/>
<path d="M100.5 175.5V186.3M102.1 174.1V176.1" stroke="#ff1a1a"/>
<path d="M103.6 173.8V175.8" stroke="#f4ec84"/>
<path d="M105.2 172.9V177.6" stroke="#ff1a1a"/>
<path d="M106.8 171.9V173.9" stroke="#f4ec84"/>
<path d="M108.4 172.3V174.3" stroke="#1e8cf0"/>
<path d="M110.0 173.0V175.0M111.5 173.3V175.3" stroke="#f4ec84"/>
<path d="M113.1 174.6V178.6" stroke="#1e8cf0"/>
<path d="M114.7 176.7V178.7" stroke="#ff1a1a"/>
<path d="M116.3 176.9V179.1M117.9 179.1V182.3" stroke="#1e8cf0"/>
<path d="M119.4 180.5V182.5" stroke="#ff1a1a"/>
<path d="M121.0 179.8V181.8M122.6 179.7V181.7" stroke="#f4ec84"/>
<path d="M124.2 174.5V180.1" stroke="#ff1a1a"/>
<path d="M125.8 174.5V176.6M127.3 176.6V178.9" stroke="#1e8cf0"/>
<path d="M128.9 171.1V180.3" stroke="#f4ec84"/>
<path d="M130.5 177.0V179.8" stroke="#ff1a1a"/>
<path d="M132.1 169.1V177.0" stroke="#f4ec84"/>
<path d="M133.7 173.8V176.6" stroke="#1e8cf0"/>
<path d="M135.2 174.3V176.6" stroke="#ff1a1a"/>
<path d="M136.8 173.3V175.3M138.4 173.2V175.2M140.0 168.3V174.8M141.6 168.3V172.4M143.1 171.4V173.4" stroke="#f4ec84"/>
<path d="M144.7 170.8V172.8M146.3 169.0V171.3" stroke="#ff1a1a"/>
<path d="M147.9 169.0V171.1" stroke="#1e8cf0"/>
<path d="M149.5 170.1V172.1" stroke="#f4ec84"/>
<path d="M151.0 168.0V170.9M152.6 166.1V168.1" stroke="#ff1a1a"/>
<path d="M154.2 166.3V171.1M155.8 170.1V172.1M157.4 169.9V171.9M158.9 169.7V171.7M160.5 169.7V171.7" stroke="#f4ec84"/>
<path d="M162.1 170.3V173.6M163.7 173.6V179.0" stroke="#1e8cf0"/>
<path d="M165.3 179.0V181.7M166.8 180.7V182.7M168.4 181.1V183.1" stroke="#f4ec84"/>
<path d="M170.0 181.1V183.1M171.6 182.3V184.3" stroke="#1e8cf0"/>
<path d="M173.2 183.9V186.2" stroke="#f4ec84"/>
<path d="M174.7 184.2V186.2M176.3 182.9V184.9" stroke="#ff1a1a"/>
<path d="M177.9 183.5V187.6" stroke="#1e8cf0"/>
<path d="M179.5 185.7V187.7" stroke="#ff1a1a"/>
<path d="M181.1 185.3V187.3" stroke="#1e8cf0"/>
<path d="M182.6 186.5V188.5" stroke="#f4ec84"/>
<path d="M184.2 185.3V188.0M185.8 183.5V185.5M187.4 182.2V184.2" stroke="#ff1a1a"/>
<path d="M189.0 180.0V182.7M190.5 179.0V181.0" stroke="#f4ec84"/>
<path d="M192.1 179.7V187.4" stroke="#1e8cf0"/>
<path d="M193.7 186.4V188.4" stroke="#f4ec84"/>
<path d="M195.3 187.4V189.4" stroke="#1e8cf0"/>
<path d="M196.9 184.2V189.3" stroke="#ff1a1a"/>
<path d="M198.4 184.2V186.9M200.0 185.9V187.9M201.6 185.9V187.9" stroke="#f4ec84"/>
<path d="M203.2 185.3V187.3" stroke="#ff1a1a"/>
<path d="M204.8 185.8V189.0" stroke="#f4ec84"/>
<path d="M206.3 189.0V191.0" stroke="#1e8cf0"/>
<path d="M207.9 188.5V190.9" stroke="#f4ec84"/>
<path d="M209.5 188.5V190.6" stroke="#1e8cf0"/>
<path d="M211.1 188.5V190.6M212.7 186.8V188.8" stroke="#ff1a1a"/>
<path d="M214.2 186.1V188.1" stroke="#f4ec84"/>
<path d="M215.8 182.1V187.1" stroke="#ff1a1a"/>
<path d="M217.4 182.1V184.1" stroke="#f4ec84"/>
<path d="M219.0 184.1V190.6" stroke="#1e8cf0"/>
<path d="M220.6 185.6V190.6" stroke="#ff1a1a"/>
<path d="M222.1 183.1V185.6" stroke="#f4ec84"/>
<path d="M223.7 172.1V183.1" stroke="#ff1a1a"/>
<path d="M225.3 178.2V181.9" stroke="#f4ec84"/>
<path d="M226.9 178.9V181.9" stroke="#ff1a1a"/>
<path d="M228.5 178.9V181.4" stroke="#f4ec84"/>
<path d="M230.0 181.4V184.0" stroke="#1e8cf0"/>
<path d="M231.6 184.0V186.0" stroke="#f4ec84"/>
<path d="M233.2 185.9V187.9" stroke="#1e8cf0"/>
<path d="M234.8 187.8V190.2" stroke="#f4ec84"/>
<path d="M236.4 190.2V197.4M237.9 197.4V200.3" stroke="#1e8cf0"/>
<path d="M239.5 198.0V200.3" stroke="#f4ec84"/>
<path d="M241.1 195.8V198.0M242.7 194.4V196.4" stroke="#ff1a1a"/>
<path d="M244.3 194.0V196.0" stroke="#f4ec84"/>
<path d="M245.8 191.5V194.9M247.4 189.2V191.5M249.0 187.2V189.2" stroke="#ff1a1a"/>
<path d="M250.6 186.2V188.2" stroke="#f4ec84"/>
<path d="M252.2 187.1V189.1M253.7 189.1V195.7M255.3 195.7V198.6" stroke="#1e8cf0"/>
<path d="M256.9 194.3V198.6" stroke="#ff1a1a"/>
<path d="M258.5 193.7V195.7" stroke="#1e8cf0"/>
<path d="M260.1 188.2V196.0" stroke="#f4ec84"/>
<path d="M261.6 195.3V197.3M263.2 197.3V203.6" stroke="#1e8cf0"/>
<path d="M264.8 200.1V203.6" stroke="#ff1a1a"/>
<path d="M266.4 199.1V201.1M268.0 199.4V201.4" stroke="#f4ec84"/>
<path d="M269.5 197.5V199.9" stroke="#ff1a1a"/>
<path d="M271.1 196.1V198.1" stroke="#f4ec84"/>
<path d="M272.7 194.2V196.6M274.3 189.0V194.2M275.9 187.4V189.4" stroke="#ff1a1a"/>
<path d="M277.4 187.2V189.2" stroke="#1e8cf0"/>
<path d="M279.0 187.1V192.0" stroke="#ff1a1a"/>
<path d="M280.6 187.3V189.3" stroke="#f4ec84"/>
<path d="M282.2 188.8V190.8" stroke="#1e8cf0"/>
<path d="M283.8 186.1V190.6" stroke="#ff1a1a"/>
<path d="M285.3 185.1V187.1M286.9 184.9V186.9M288.5 185.4V188.5M290.1 187.5V189.5M291.7 187.4V189.4" stroke="#f4ec84"/>
<path d="M293.2 188.9V195.5" stroke="#1e8cf0"/>
<path d="M294.8 185.9V190.9M296.4 178.5V185.9" stroke="#ff1a1a"/>
<path d="M298.0 177.5V179.5M299.6 177.7V179.7M301.1 177.5V179.5M302.7 177.4V179.4M304.3 176.7V178.7" stroke="#f4ec84"/>
<path d="M305.9 176.2V178.2" stroke="#ff1a1a"/>
<path d="M307.5 175.3V177.3M309.0 175.0V177.0" stroke="#f4ec84"/>
<path d="M310.6 175.0V177.0" stroke="#ff1a1a"/>
<path d="M312.2 174.4V176.4" stroke="#f4ec84"/>
<path d="M313.8 175.0V177.1" stroke="#1e8cf0"/>
<path d="M315.4 176.1V178.1" stroke="#f4ec84"/>
<path d="M316.9 174.8V176.8" stroke="#ff1a1a"/>
<path d="M318.5 174.4V176.4" stroke="#1e8cf0"/>
<path d="M320.1 174.9V176.9" stroke="#f4ec84"/>
<path d="M321.7 174.7V182.0" stroke="#ff1a1a"/>
<path d="M323.3 174.4V176.4" stroke="#f4ec84"/>
<path d="M324.8 175.1V177.1M326.4 169.7V178.6" stroke="#1e8cf0"/>
<path d="M328.0 177.6V179.6" stroke="#f4ec84"/>
<path d="M329.6 176.0V178.0M331.2 172.8V176.1M332.7 169.4V172.8" stroke="#ff1a1a"/>
<path d="M334.3 169.3V173.8" stroke="#f4ec84"/>
<path d="M335.9 171.2V175.0" stroke="#1e8cf0"/>
<path d="M337.5 174.0V176.0M339.1 174.6V176.6" stroke="#f4ec84"/>
<path d="M340.6 175.1V178.7" stroke="#1e8cf0"/>
<path d="M342.2 178.5V180.5M343.8 178.3V180.3" stroke="#f4ec84"/>
<path d="M345.4 178.3V182.5M347.0 182.5V186.9" stroke="#1e8cf0"/>
<path d="M348.5 182.6V186.9" stroke="#ff1a1a"/>
<path d="M350.1 181.6V183.6" stroke="#f4ec84"/>
<path d="M351.7 182.1V185.1" stroke="#1e8cf0"/>
<path d="M353.3 183.4V185.4" stroke="#ff1a1a"/>
<path d="M354.9 183.7V186.1" stroke="#1e8cf0"/>
<path d="M356.4 184.6V186.6M358.0 180.8V185.2" stroke="#ff1a1a"/>
<path d="M359.6 180.3V187.6" stroke="#1e8cf0"/>
<path d="M361.2 180.0V182.0" stroke="#ff1a1a"/>
<path d="M362.8 179.9V181.9" stroke="#1e8cf0"/>
<path d="M364.3 174.4V182.8" stroke="#f4ec84"/>
<path d="M365.9 182.2V186.2M367.5 186.0V188.0" stroke="#1e8cf0"/>
<path d="M369.1 186.8V188.8" stroke="#f4ec84"/>
<path d="M370.7 188.1V190.9M372.2 190.5V192.5" stroke="#1e8cf0"/>
<path d="M373.8 188.9V192.1" stroke="#ff1a1a"/>
<path d="M375.4 188.4V190.4" stroke="#1e8cf0"/>
<path d="M377.0 187.3V189.8" stroke="#ff1a1a"/>
<path d="M378.6 187.3V189.5" stroke="#1e8cf0"/>
<path d="M380.1 184.7V189.5" stroke="#ff1a1a"/>
<path d="M381.7 184.7V187.1" stroke="#f4ec84"/>
<path d="M383.3 185.4V187.4" stroke="#ff1a1a"/>
<path d="M384.9 184.7V186.7" stroke="#f4ec84"/>
<path d="M386.5 186.3V188.8M388.0 188.8V191.2" stroke="#1e8cf0"/>
<path d="M389.6 190.2V192.2" stroke="#f4ec84"/>
<path d="M391.2 191.6V193.7" stroke="#1e8cf0"/>
<path d="M392.8 189.6V194.7M394.4 192.7V194.7" stroke="#f4ec84"/>
<path d="M395.9 193.3V196.5" stroke="#1e8cf0"/>
<path d="M397.5 195.5V197.5" stroke="#f4ec84"/>
<path d="M399.1 196.6V198.6" stroke="#1e8cf0"/>
<path d="M400.7 196.6V198.6" stroke="#ff1a1a"/>
<path d="M402.3 196.6V200.8" stroke="#1e8cf0"/>
<path d="M403.8 197.3V207.6" stroke="#ff1a1a"/>
<path d="M405.4 196.3V198.3" stroke="#f4ec84"/>
<path d="M407.0 196.1V198.1" stroke="#ff1a1a"/>
<path d="M408.6 192.5V204.3" stroke="#1e8cf0"/>
<path d="M410.2 201.5V204.3" stroke="#f4ec84"/>
<path d="M411.7 198.2V201.5" stroke="#ff1a1a"/>
<path d="M413.3 198.2V201.4" stroke="#1e8cf0"/>
<path d="M414.9 199.6V201.6" stroke="#ff1a1a"/>
<path d="M416.5 199.8V210.5" stroke="#1e8cf0"/>
<path d="M418.1 197.1V206.6" stroke="#f4ec84"/>
<path d="M419.6 203.2V206.6" stroke="#ff1a1a"/>
<path d="M421.2 202.8V204.8" stroke="#1e8cf0"/>
<path d="M422.8 204.1V206.1M424.4 203.9V205.9" stroke="#f4ec84"/>
<path d="M426.0 202.5V204.5" stroke="#ff1a1a"/>
<path d="M427.5 202.7V204.7M429.1 204.4V207.7M430.7 207.3V209.3M432.3 208.7V210.7M433.9 209.9V211.9M435.4 211.0V213.0" stroke="#1e8cf0"/>
<path d="M437.0 211.1V213.1" stroke="#ff1a1a"/>
<path d="M438.6 211.6V217.1" stroke="#f4ec84"/>
<path d="M440.2 212.6V217.1M441.8 207.1V212.6" stroke="#ff1a1a"/>
<path d="M443.3 206.1V208.1" stroke="#f4ec84"/>
<path d="M444.9 204.9V207.4" stroke="#ff1a1a"/>
<path d="M446.5 203.9V205.9M448.1 201.8V204.5M449.7 198.1V201.8" stroke="#f4ec84"/>
<path d="M451.2 195.8V198.1M452.8 192.4V195.8" stroke="#ff1a1a"/>
<path d="M454.4 192.4V197.9M456.0 197.9V201.4" stroke="#f4ec84"/>
<path d="M457.6 201.4V205.5" stroke="#1e8cf0"/>
<path d="M459.1 203.7V205.7" stroke="#ff1a1a"/>
<path d="M460.7 202.0V204.0" stroke="#f4ec84"/>
<path d="M462.3 202.2V204.2M463.9 204.2V207.8" stroke="#1e8cf0"/>
<path d="M465.5 201.5V207.8" stroke="#ff1a1a"/>
<path d="M467.0 205.0V207.0" stroke="#1e8cf0"/>
<path d="M468.6 205.5V207.5" stroke="#f4ec84"/>
<path d="M470.2 206.2V208.2M471.8 207.5V209.5" stroke="#1e8cf0"/>
<path d="M473.4 208.3V210.3M474.9 208.3V210.3M476.5 208.9V210.9" stroke="#f4ec84"/>
<path d="M478.1 203.5V210.9" stroke="#1e8cf0"/>
<path d="M479.7 197.7V210.5" stroke="#ff1a1a"/>
<path d="M481.3 197.7V202.1M482.8 201.9V203.9M484.4 203.6V205.6M486.0 205.5V209.0" stroke="#1e8cf0"/>
<path d="M487.6 201.9V209.0M489.2 200.4V202.4" stroke="#ff1a1a"/>
<path d="M490.7 201.0V206.6" stroke="#f4ec84"/>
<path d="M492.3 196.0V206.6M493.9 201.9V203.9M495.5 198.9V201.9" stroke="#ff1a1a"/>
<path d="M497.1 195.3V198.9" stroke="#f4ec84"/>
<path d="M498.6 195.1V197.1" stroke="#1e8cf0"/>
<path d="M500.2 196.9V198.9" stroke="#f4ec84"/>
<path d="M501.8 195.4V198.8" stroke="#ff1a1a"/>
<path d="M503.4 194.0V196.0" stroke="#f4ec84"/>
<path d="M505.0 192.9V194.9M506.5 191.7V193.7M508.1 190.2V192.2M509.7 188.9V190.9" stroke="#ff1a1a"/>
<path d="M511.3 189.4V193.4" stroke="#1e8cf0"/>
<path d="M512.9 189.7V193.4M514.4 188.1V190.1" stroke="#ff1a1a"/>
<path d="M516.0 188.4V190.4M517.6 189.1V191.1" stroke="#f4ec84"/>
<path d="M519.2 187.0V190.7" stroke="#ff1a1a"/>
<path d="M520.8 186.9V188.9M522.3 188.3V190.3M523.9 189.7V193.2" stroke="#1e8cf0"/>
<path d="M525.5 192.2V194.2" stroke="#f4ec84"/>
<path d="M527.1 190.8V192.8" stroke="#ff1a1a"/>
<path d="M528.7 189.9V191.9" stroke="#f4ec84"/>
<path d="M530.2 185.3V190.3" stroke="#ff1a1a"/>
<path d="M531.8 185.3V189.7M533.4 189.7V194.5" stroke="#1e8cf0"/>
<path d="M535.0 194.5V197.1M536.6 196.1V198.1" stroke="#f4ec84"/>
<path d="M538.1 196.6V198.6" stroke="#1e8cf0"/>
<path d="M539.7 193.3V198.2M541.3 192.3V198.1M542.9 192.7V195.8" stroke="#f4ec84"/>
<path d="M544.5 189.9V195.8" stroke="#ff1a1a"/>
<path d="M546.0 189.3V191.3" stroke="#1e8cf0"/>
<path d="M547.6 188.9V190.9" stroke="#f4ec84"/>
<path d="M549.2 189.1V194.4" stroke="#1e8cf0"/>
<path d="M550.8 187.2V194.4" stroke="#ff1a1a"/>
<path d="M552.4 187.2V189.2" stroke="#1e8cf0"/>
<path d="M553.9 188.2V190.2M555.5 188.7V190.7M557.1 187.9V189.9M558.7 187.9V189.9" stroke="#f4ec84"/>
<path d="M560.3 189.4V191.9" stroke="#1e8cf0"/>
<path d="M561.8 189.9V191.9M563.4 187.9V189.9" stroke="#ff1a1a"/>
<path d="M565.0 187.9V190.7M566.6 190.7V194.2M568.2 194.2V199.9" stroke="#1e8cf0"/>
<path d="M569.7 199.6V201.6" stroke="#f4ec84"/>
<path d="M571.3 196.5V201.2M572.9 187.6V196.5M574.5 192.7V194.7" stroke="#ff1a1a"/>
<path d="M576.1 193.2V195.8" stroke="#f4ec84"/>
<path d="M577.6 190.8V195.8" stroke="#ff1a1a"/>
<path d="M579.2 190.5V192.5" stroke="#f4ec84"/>
<path d="M580.8 189.1V192.3" stroke="#ff1a1a"/>
<path d="M582.4 188.1V190.1" stroke="#f4ec84"/>
<path d="M584.0 185.7V189.1" stroke="#ff1a1a"/>
<path d="M585.5 185.7V187.9" stroke="#f4ec84"/>
<path d="M587.1 187.5V189.5M588.7 188.8V190.8M590.3 190.4V194.2" stroke="#1e8cf0"/>
<path d="M591.9 191.9V194.2" stroke="#ff1a1a"/>
<path d="M593.4 191.5V193.5M595.0 192.8V194.8M596.6 189.5V196.1M598.2 195.5V197.5M599.8 197.2V201.1" stroke="#1e8cf0"/>
<path d="M601.3 200.1V202.1" stroke="#f4ec84"/>
<path d="M602.9 194.0V201.7" stroke="#ff1a1a"/>
<path d="M604.5 199.2V201.2" stroke="#f4ec84"/>
<path d="M606.1 200.1V202.1" stroke="#1e8cf0"/>
<path d="M607.7 201.1V203.1M609.2 196.7V202.9M610.8 198.0V201.5M612.4 196.3V198.3" stroke="#f4ec84"/>
<path d="M614.0 195.9V197.9" stroke="#1e8cf0"/>
<path d="M615.6 196.9V198.9" stroke="#f4ec84"/>
<path d="M617.1 196.8V198.8M618.7 194.8V203.8" stroke="#ff1a1a"/>
<path d="M620.3 193.8V195.8" stroke="#f4ec84"/>
<path d="M621.9 192.8V194.8" stroke="#ff1a1a"/>
<path d="M623.5 191.9V193.9M625.0 186.8V196.0" stroke="#f4ec84"/>
<path d="M626.6 194.2V196.2" stroke="#ff1a1a"/>
<path d="M628.2 194.0V196.0" stroke="#1e8cf0"/>
<path d="M629.8 192.0V195.6M631.4 189.3V192.0" stroke="#ff1a1a"/>
<path d="M632.9 189.3V193.1" stroke="#1e8cf0"/>
<path d="M634.5 192.1V194.1M636.1 192.2V194.2M637.7 193.7V195.8M639.3 193.4V195.8M640.8 191.4V193.4" stroke="#f4ec84"/>
<path d="M642.4 189.1V191.4M644.0 186.0V189.1" stroke="#ff1a1a"/>
<path d="M645.6 186.0V191.3" stroke="#f4ec84"/>
<path d="M647.2 191.1V193.1" stroke="#1e8cf0"/>
<path d="M648.7 191.1V193.1" stroke="#f4ec84"/>
<path d="M650.3 189.6V195.6" stroke="#ff1a1a"/>
<path d="M651.9 190.1V192.3M653.5 185.0V192.6" stroke="#f4ec84"/>
<path d="M655.1 190.8V194.0" stroke="#1e8cf0"/>
<path d="M656.6 193.0V195.0" stroke="#f4ec84"/>
<path d="M658.2 194.3V196.3M659.8 196.1V198.7M661.4 198.7V201.1M663.0 201.0V203.0" stroke="#1e8cf0"/>
<path d="M664.5 201.9V203.9" stroke="#f4ec84"/>
<path d="M666.1 202.2V206.5" stroke="#1e8cf0"/>
<path d="M667.7 203.0V206.5M669.3 197.1V203.0M670.9 190.7V197.1" stroke="#ff1a1a"/>
<path d="M672.4 190.7V193.0" stroke="#f4ec84"/>
<path d="M674.0 193.0V195.7M675.6 195.7V201.8" stroke="#1e8cf0"/>
<path d="M677.2 201.8V210.1" stroke="#f4ec84"/>
<path d="M678.8 210.1V213.5" stroke="#1e8cf0"/>
<path d="M680.3 213.5V217.9" stroke="#f4ec84"/>
<path d="M681.9 217.3V219.3M683.5 218.7V223.4M685.1 223.2V225.2" stroke="#1e8cf0"/>
<path d="M686.7 221.2V225.5M688.2 218.0V224.0M689.8 206.5V218.0M691.4 210.9V213.9" stroke="#ff1a1a"/>
<path d="M693.0 209.9V211.9" stroke="#f4ec84"/>
<path d="M694.6 204.2V211.0" stroke="#ff1a1a"/>
<path d="M696.1 203.2V205.2" stroke="#f4ec84"/>
<path d="M697.7 200.5V204.6" stroke="#ff1a1a"/>
<path d="M699.3 199.5V201.5" stroke="#f4ec84"/>
<path d="M700.9 199.1V201.1M702.5 197.4V199.5" stroke="#ff1a1a"/>
<path d="M704.0 196.4V198.4" stroke="#f4ec84"/>
<path d="M705.6 196.2V198.2" stroke="#ff1a1a"/>
<path d="M707.2 196.5V198.5" stroke="#1e8cf0"/>
<path d="M708.8 196.6V198.6M710.4 192.5V196.7" stroke="#ff1a1a"/>
<path d="M711.9 191.5V193.5" stroke="#f4ec84"/>
<path d="M713.5 189.8V192.0" stroke="#ff1a1a"/>
<path d="M715.1 189.8V194.7M716.7 194.7V197.4" stroke="#1e8cf0"/>
<path d="M718.3 193.8V197.4M719.8 190.1V193.8M721.4 188.5V190.5" stroke="#ff1a1a"/>
<path d="M723.0 185.3V189.0M724.6 181.7V186.3M726.2 183.7V185.7M727.7 184.3V186.3" stroke="#f4ec84"/>
<path d="M729.3 183.2V185.2M730.9 181.2V183.4M732.5 179.5V181.5M734.1 177.4V179.8" stroke="#ff1a1a"/>
<path d="M735.6 177.4V179.7" stroke="#1e8cf0"/>
<path d="M737.2 175.2V179.7" stroke="#ff1a1a"/>
<path d="M738.8 175.2V178.6" stroke="#1e8cf0"/>
<path d="M740.4 175.2V178.6" stroke="#ff1a1a"/>
<path d="M742.0 175.1V177.1" stroke="#1e8cf0"/>
<path d="M743.5 176.0V178.0" stroke="#f4ec84"/>
<path d="M745.1 174.2V177.1M746.7 170.2V174.2" stroke="#ff1a1a"/>
<path d="M748.3 170.2V172.4" stroke="#f4ec84"/>
<path d="M749.9 170.3V172.4" stroke="#ff1a1a"/>
<path d="M751.4 168.7V170.7" stroke="#f4ec84"/>
<path d="M753.0 167.4V169.4M754.6 165.6V167.7" stroke="#ff1a1a"/>
<path d="M756.2 165.3V167.3" stroke="#1e8cf0"/>
<path d="M757.8 163.5V167.0M759.3 161.6V163.6" stroke="#ff1a1a"/>
<path d="M760.9 161.6V163.6M762.5 162.5V164.5M764.1 162.8V166.5M765.7 166.5V172.0" stroke="#f4ec84"/>
<path d="M767.2 172.0V175.6" stroke="#1e8cf0"/>
<path d="M768.8 174.6V176.6" stroke="#f4ec84"/>
<path d="M770.4 176.0V178.0" stroke="#1e8cf0"/>
<path d="M772.0 171.8V178.7" stroke="#f4ec84"/>
<path d="M773.6 177.3V179.3M775.1 178.7V182.0" stroke="#1e8cf0"/>
<path d="M776.7 181.0V183.0" stroke="#f4ec84"/>
<path d="M778.3 180.1V182.1" stroke="#ff1a1a"/>
<path d="M779.9 180.3V182.8" stroke="#1e8cf0"/>
<path d="M781.5 175.0V182.8M783.0 175.0V178.6" stroke="#f4ec84"/>
<path d="M784.6 178.4V180.4" stroke="#1e8cf0"/>
<path d="M786.2 171.5V181.2" stroke="#f4ec84"/>
<path d="M787.8 180.6V185.0M789.4 184.8V186.8" stroke="#1e8cf0"/>
<path d="M790.9 183.5V186.6" stroke="#ff1a1a"/>
<path d="M792.5 183.5V185.7" stroke="#1e8cf0"/>
<path d="M794.1 184.7V186.7M795.7 184.9V186.9M797.3 185.5V187.5" stroke="#f4ec84"/>
<path d="M798.8 184.2V186.3M800.4 181.8V184.2" stroke="#ff1a1a"/>
<path d="M802.0 175.4V184.8" stroke="#f4ec84"/>
<path d="M803.6 183.1V185.1" stroke="#ff1a1a"/>
<path d="M805.2 182.5V184.5" stroke="#f4ec84"/>
<path d="M806.7 181.3V183.3" stroke="#ff1a1a"/>
<path d="M808.3 181.4V183.4" stroke="#1e8cf0"/>
<path d="M809.9 180.4V183.2M811.5 178.7V180.7" stroke="#ff1a1a"/>
<path d="M813.1 178.6V180.6" stroke="#1e8cf0"/>
<path d="M814.6 170.5V180.3" stroke="#ff1a1a"/>
<path d="M816.2 170.3V172.3M817.8 171.1V173.1" stroke="#f4ec84"/>
<path d="M819.4 172.2V176.6M821.0 176.1V178.1" stroke="#1e8cf0"/>
<path d="M822.5 176.5V178.5" stroke="#f4ec84"/>
<path d="M824.1 174.1V177.2M825.7 171.7V174.1" stroke="#ff1a1a"/>
<path d="M827.3 171.7V176.3M828.9 176.3V178.3" stroke="#1e8cf0"/>
<path d="M830.4 175.1V178.2" stroke="#ff1a1a"/>
<path d="M832.0 174.1V176.1" stroke="#f4ec84"/>
<path d="M833.6 172.5V175.4" stroke="#ff1a1a"/>
<path d="M835.2 170.6V172.6" stroke="#f4ec84"/>
<path d="M836.8 165.3V170.7" stroke="#ff1a1a"/>
<path d="M838.3 165.3V171.5" stroke="#1e8cf0"/>
<path d="M839.9 170.0V172.0" stroke="#ff1a1a"/>
<path d="M841.5 170.5V176.6M843.1 176.6V179.7" stroke="#1e8cf0"/>
<path d="M844.7 176.8V179.7" stroke="#ff1a1a"/>
<path d="M846.2 176.7V178.7" stroke="#1e8cf0"/>
<path d="M847.8 177.5V179.5M849.4 176.0V178.5" stroke="#f4ec84"/>
<path d="M851.0 176.0V178.0M852.6 178.0V180.8" stroke="#1e8cf0"/>
<path d="M854.1 179.8V181.8" stroke="#f4ec84"/>
<path d="M855.7 180.7V182.7" stroke="#1e8cf0"/>
<path d="M857.3 176.2V182.3" stroke="#f4ec84"/>
<path d="M858.9 167.1V176.3" stroke="#ff1a1a"/>
<path d="M860.5 173.4V175.4" stroke="#f4ec84"/>
<path d="M862.0 169.2V174.1" stroke="#ff1a1a"/>
<path d="M863.6 169.2V175.1" stroke="#1e8cf0"/>
<path d="M865.2 170.9V172.9M866.8 167.3V172.4" stroke="#f4ec84"/>
<path d="M868.4 165.6V167.6" stroke="#ff1a1a"/>
<path d="M869.9 165.5V167.5" stroke="#1e8cf0"/>
<path d="M871.5 165.7V167.7" stroke="#ff1a1a"/>
<path d="M873.1 165.3V167.3M874.7 165.7V167.7" stroke="#f4ec84"/>
<path d="M876.3 163.6V167.3M877.8 161.9V163.9M879.4 159.0V162.1M881.0 154.9V159.0" stroke="#ff1a1a"/>
<path d="M882.6 154.9V157.5" stroke="#1e8cf0"/>
<path d="M884.2 154.6V157.5" stroke="#ff1a1a"/>
<path d="M885.7 154.6V157.1" stroke="#1e8cf0"/>
<path d="M887.3 154.1V157.1" stroke="#ff1a1a"/>
<path d="M888.9 154.1V157.0" stroke="#1e8cf0"/>
<path d="M890.5 153.7V157.0" stroke="#f4ec84"/>
<path d="M892.1 148.4V153.7M893.6 142.8V148.4" stroke="#ff1a1a"/>
<path d="M895.2 142.8V147.9" stroke="#1e8cf0"/>
<path d="M896.8 146.9V148.9" stroke="#f4ec84"/>
<path d="M898.4 148.1V150.1M900.0 150.0V152.6" stroke="#1e8cf0"/>
<path d="M901.5 149.2V155.2" stroke="#ff1a1a"/>
<path d="M903.1 148.2V150.2" stroke="#f4ec84"/>
<path d="M904.7 149.2V154.8M906.3 154.8V158.9" stroke="#1e8cf0"/>
<path d="M907.9 157.9V159.9" stroke="#f4ec84"/>
<path d="M909.4 154.6V158.7M911.0 150.5V154.6" stroke="#ff1a1a"/>
<path d="M912.6 150.5V153.7" stroke="#1e8cf0"/>
<path d="M914.2 147.7V154.1" stroke="#ff1a1a"/>
<path d="M915.8 152.5V156.6M917.3 156.6V164.8" stroke="#1e8cf0"/>
<path d="M918.9 163.2V165.2M920.5 161.6V163.6" stroke="#ff1a1a"/>
<path d="M922.1 160.7V162.7" stroke="#f4ec84"/>
<path d="M923.7 161.2V165.0M925.2 165.0V167.4" stroke="#1e8cf0"/>
<path d="M926.8 159.6V167.4" stroke="#ff1a1a"/>
<path d="M928.4 164.4V166.4" stroke="#1e8cf0"/>
<path d="M930.0 164.9V166.9" stroke="#f4ec84"/>
<path d="M931.6 163.9V166.0M933.1 162.3V164.3M934.7 160.5V162.6" stroke="#ff1a1a"/>
<path d="M936.3 159.5V161.5M937.9 159.2V161.2" stroke="#f4ec84"/>
<path d="M939.5 158.3V160.3M941.0 155.7V158.5" stroke="#ff1a1a"/>
<path d="M942.6 155.7V158.1" stroke="#f4ec84"/>
<path d="M944.2 158.0V160.0M945.8 159.9V161.9" stroke="#1e8cf0"/>
<path d="M947.4 160.1V162.1M948.9 158.2V160.4" stroke="#ff1a1a"/>
<path d="M950.5 154.5V159.2" stroke="#f4ec84"/>
<path d="M952.1 156.8V158.8M953.7 152.4V156.9M955.3 148.4V152.4" stroke="#ff1a1a"/>
<path d="M956.8 147.4V149.4" stroke="#f4ec84"/>
<path d="M958.4 148.2V150.3" stroke="#1e8cf0"/>
<path d="M960.0 148.3V150.3" stroke="#ff1a1a"/>
<path d="M961.6 148.1V152.5" stroke="#1e8cf0"/>
<path d="M963.2 148.3V150.3" stroke="#f4ec84"/>
<path d="M964.7 148.0V150.0" stroke="#1e8cf0"/>
<path d="M966.3 148.4V150.4M967.9 141.6V151.6" stroke="#f4ec84"/>
<path d="M969.5 148.3V151.6" stroke="#ff1a1a"/>
<path d="M971.1 147.3V149.3" stroke="#f4ec84"/>
<path d="M972.6 148.1V150.1M974.2 149.4V151.4M975.8 151.2V155.2M977.4 155.2V157.7M979.0 157.7V160.7" stroke="#1e8cf0"/>
<path d="M980.5 159.3V168.3" stroke="#ff1a1a"/>
<path d="M982.1 158.8V160.8" stroke="#f4ec84"/>
<path d="M983.7 159.4V166.3" stroke="#1e8cf0"/>
<path d="M985.3 158.1V164.0M986.9 157.1V159.1" stroke="#f4ec84"/>
<path d="M988.4 157.6V159.6M990.0 158.6V160.6M991.6 159.6V161.6" stroke="#1e8cf0"/>
<path d="M993.2 160.2V162.2" stroke="#f4ec84"/>
<path d="M994.8 158.6V160.7" stroke="#ff1a1a"/>
<path d="M996.3 158.5V160.5" stroke="#f4ec84"/>
<path d="M997.9 160.4V163.7" stroke="#1e8cf0"/>
<path d="M999.5 163.4V165.4" stroke="#f4ec84"/>
<path d="M1001.1 161.1V165.1" stroke="#ff1a1a"/>
<path d="M1002.7 161.1V167.6" stroke="#1e8cf0"/>
<path d="M1004.2 162.9V167.6" stroke="#ff1a1a"/>
<path d="M1005.8 162.6V164.6" stroke="#f4ec84"/>
<path d="M1007.4 163.8V165.8M1009.0 165.2V172.0M1010.6 172.0V174.2M1012.1 174.2V182.8M1013.7 182.8V187.8M1015.3 187.8V190.9" stroke="#1e8cf0"/>
<path d="M1016.9 187.3V190.9" stroke="#ff1a1a"/>
<path d="M1018.5 187.3V189.3M1020.0 188.7V190.7" stroke="#1e8cf0"/>
<path d="M1021.6 188.4V190.4M1023.2 186.1V192.8" stroke="#ff1a1a"/>
<path d="M1024.8 185.1V187.1" stroke="#f4ec84"/>
<path d="M1026.4 180.7V185.5" stroke="#ff1a1a"/>
<path d="M1027.9 180.3V182.3M1029.5 181.9V185.0M1031.1 184.4V191.8M1032.7 185.4V187.4" stroke="#1e8cf0"/>
<path d="M1034.3 187.0V189.5" stroke="#f4ec84"/>
<path d="M1035.8 189.0V191.0" stroke="#1e8cf0"/>
<path d="M1037.4 188.8V190.8M1039.0 188.2V190.2" stroke="#f4ec84"/>
<path d="M1040.6 186.6V189.7" stroke="#ff1a1a"/>
<path d="M1042.2 186.6V191.0" stroke="#1e8cf0"/>
<path d="M1043.7 188.8V191.0" stroke="#ff1a1a"/>
<path d="M1045.3 187.8V189.8M1046.9 187.5V189.5" stroke="#f4ec84"/>
<path d="M1048.5 188.1V190.1" stroke="#1e8cf0"/>
<path d="M1050.1 188.7V190.7" stroke="#f4ec84"/>
<path d="M1051.6 188.4V190.4M1053.2 186.0V188.9M1054.8 184.4V186.4M1056.4 181.2V184.7" stroke="#ff1a1a"/>
<path d="M1058.0 181.2V186.5" stroke="#1e8cf0"/>
<path d="M1059.5 185.5V187.5" stroke="#f4ec84"/>
<path d="M1061.1 182.1V186.2" stroke="#ff1a1a"/>
<path d="M1062.7 182.1V184.9" stroke="#1e8cf0"/>
<path d="M1064.3 183.9V185.9M1065.9 184.5V189.0M1067.4 186.9V189.0" stroke="#f4ec84"/>
<path d="M1069.0 184.4V186.9" stroke="#ff1a1a"/>
<path d="M1070.6 183.4V185.4" stroke="#f4ec84"/>
<path d="M1072.2 182.5V192.4" stroke="#ff1a1a"/>
<path d="M1073.8 182.9V185.1M1075.3 180.9V185.1M1076.9 179.3V181.3" stroke="#f4ec84"/>
<path d="M1078.5 179.2V181.2" stroke="#1e8cf0"/>
<path d="M1080.1 179.6V181.6" stroke="#f4ec84"/>
<path d="M1081.7 180.1V182.1M1083.2 181.2V183.2" stroke="#1e8cf0"/>
<path d="M1084.8 181.1V183.1" stroke="#ff1a1a"/>
<path d="M1086.4 181.0V183.0" stroke="#1e8cf0"/>
<path d="M1088.0 170.4V182.7" stroke="#ff1a1a"/>
<path d="M1089.6 171.2V176.0" stroke="#f4ec84"/>
<path d="M1091.1 169.5V171.5" stroke="#ff1a1a"/>
<path d="M1092.7 169.8V171.9" stroke="#1e8cf0"/>
<path d="M1094.3 163.9V172.9" stroke="#f4ec84"/>
<path d="M1095.9 169.2V172.2" stroke="#ff1a1a"/>
<path d="M1097.5 161.8V170.6M1099.0 169.9V171.9" stroke="#1e8cf0"/>
<path d="M1100.6 169.7V175.4M1102.2 168.1V170.1" stroke="#ff1a1a"/>
<path d="M1103.8 167.9V169.9M1105.4 169.0V171.0M1106.9 170.3V172.3" stroke="#1e8cf0"/>
<path d="M1108.5 170.9V172.9" stroke="#f4ec84"/>
<path d="M1110.1 171.6V174.4" stroke="#1e8cf0"/>
<path d="M1111.7 172.9V174.9" stroke="#ff1a1a"/>
<path d="M1113.3 172.4V174.4M1114.8 173.0V178.5" stroke="#f4ec84"/>
<path d="M1116.4 170.2V173.6" stroke="#ff1a1a"/>
<path d="M1118.0 169.2V171.2M1119.6 169.7V172.4" stroke="#f4ec84"/>
<path d="M1121.2 172.0V174.0" stroke="#1e8cf0"/>
<path d="M1122.7 169.6V173.5M1124.3 167.9V169.9" stroke="#ff1a1a"/>
<path d="M1125.9 162.9V169.2" stroke="#f4ec84"/>
<path d="M1127.5 168.6V172.0" stroke="#1e8cf0"/>
<path d="M1129.1 171.0V173.0" stroke="#f4ec84"/>
<path d="M1130.6 170.6V172.6" stroke="#ff1a1a"/>
<path d="M1132.2 170.9V177.5" stroke="#f4ec84"/>
<path d="M1133.8 177.4V179.4M1135.4 179.1V181.1" stroke="#1e8cf0"/>
<path d="M1137.0 178.8V180.9" stroke="#ff1a1a"/>
<path d="M1138.5 174.1V180.2M1140.1 178.6V180.6" stroke="#f4ec84"/>
<path d="M1141.7 178.9V180.9" stroke="#1e8cf0"/>
<path d="M1143.3 179.4V181.4M1144.9 174.1V179.9" stroke="#f4ec84"/>
<path d="M1146.4 171.0V174.1" stroke="#ff1a1a"/>
<path d="M1148.0 171.0V173.0" stroke="#1e8cf0"/>
<path d="M1149.6 167.6V172.9M1151.2 164.4V167.6M1152.8 163.0V165.0" stroke="#ff1a1a"/>
<path d="M1154.3 158.7V163.6" stroke="#f4ec84"/>
<path d="M1155.9 153.9V159.0" stroke="#ff1a1a"/>
<path d="M1157.5 152.9V157.2M1159.1 151.9V153.9M1160.7 152.5V155.4" stroke="#f4ec84"/>
<path d="M1162.2 148.3V156.0M1163.8 151.8V154.5M1165.4 148.7V151.8" stroke="#ff1a1a"/>
<path d="M1167.0 147.7V149.7" stroke="#f4ec84"/>
<path d="M1168.6 145.1V149.2M1170.1 140.1V145.1" stroke="#ff1a1a"/>
<path d="M1171.7 140.1V142.1" stroke="#1e8cf0"/>
<path d="M1173.3 141.1V143.1M1174.9 141.3V143.3M1176.5 141.8V143.8" stroke="#f4ec84"/>
<path d="M1178.0 142.0V144.0" stroke="#1e8cf0"/>
<path d="M1179.6 141.8V143.8M1181.2 132.2V142.0M1182.8 133.1V135.8" stroke="#ff1a1a"/>
<path d="M1184.4 132.1V134.1" stroke="#f4ec84"/>
<path d="M1185.9 130.9V132.9M1187.5 128.8V131.1" stroke="#ff1a1a"/>
<path d="M1189.1 127.8V129.8" stroke="#f4ec84"/>
<path d="M1190.7 127.1V129.1" stroke="#ff1a1a"/>
<path d="M1192.3 127.7V132.0" stroke="#1e8cf0"/>
<path d="M1193.8 126.9V132.0M1195.4 125.1V127.1M1197.0 123.3V125.3M1198.6 121.8V123.8M1200.2 117.4V122.2" stroke="#ff1a1a"/>
<path d="M1201.7 111.7V117.4M1203.3 110.7V112.7" stroke="#f4ec84"/>
<path d="M1204.9 106.2V115.9M1206.5 99.0V106.2M1208.1 93.7V101.7" stroke="#ff1a1a"/>
<path d="M1209.6 92.7V94.7" stroke="#f4ec84"/>
<path d="M1211.2 89.4V93.1" stroke="#ff1a1a"/>
<path d="M1212.8 89.4V94.7" stroke="#f4ec84"/>
<path d="M1214.4 94.7V99.9M1216.0 99.9V106.8" stroke="#1e8cf0"/>
<path d="M1217.5 103.2V106.8M1219.1 94.6V103.4" stroke="#ff1a1a"/>
<path d="M1220.7 101.1V103.1" stroke="#1e8cf0"/>
<path d="M1222.3 100.0V102.6M1223.9 98.4V100.4" stroke="#ff1a1a"/>
<path d="M1225.4 98.7V103.7M1227.0 103.7V106.2M1228.6 106.2V115.2" stroke="#1e8cf0"/>
<path d="M1230.2 114.2V116.2" stroke="#f4ec84"/>
<path d="M1231.8 114.3V121.6" stroke="#ff1a1a"/>
<path d="M1233.3 114.9V117.1M1234.9 117.1V120.0M1236.5 115.9V124.0M1238.1 124.0V126.9" stroke="#1e8cf0"/>
<path d="M1239.7 124.9V126.9" stroke="#ff1a1a"/>
<path d="M1241.2 124.9V127.1M1242.8 127.1V131.1M1244.4 130.9V132.9" stroke="#1e8cf0"/>
<path d="M1246.0 131.7V133.7M1247.6 131.8V133.8" stroke="#f4ec84"/>
<path d="M1249.1 132.3V134.3" stroke="#1e8cf0"/>
<path d="M1250.7 132.6V134.6" stroke="#f4ec84"/>
<path d="M1252.3 133.3V137.2" stroke="#1e8cf0"/>
<path d="M1253.9 137.0V139.0M1255.5 137.8V139.8" stroke="#f4ec84"/>
<path d="M1257.0 133.3V144.3M1258.6 144.3V147.3" stroke="#1e8cf0"/>
<path d="M1260.2 146.3V148.3" stroke="#f4ec84"/>
<path d="M1261.8 147.7V151.1" stroke="#1e8cf0"/>
<path d="M1263.4 151.1V158.9M1264.9 157.3V159.3M1266.5 156.7V158.7" stroke="#f4ec84"/>
<path d="M1268.1 155.3V157.3M1269.7 149.7V155.4" stroke="#ff1a1a"/>
<path d="M1271.3 148.7V150.7" stroke="#f4ec84"/>
<path d="M1272.8 148.7V150.7M1274.4 150.4V156.9" stroke="#1e8cf0"/>
<path d="M1276.0 155.9V157.9" stroke="#f4ec84"/>
<path d="M1277.6 157.0V162.2" stroke="#1e8cf0"/>
<path d="M1279.2 160.3V162.3" stroke="#ff1a1a"/>
<path d="M1280.7 160.4V162.8M1282.3 162.4V164.4M1283.9 163.9V169.6M1285.5 169.6V177.8M1287.1 177.8V179.9M1288.6 179.9V185.2M1290.2 185.2V188.0M1291.8 188.0V199.1M1293.4 199.1V213.3M1295.0 213.3V225.4" stroke="#1e8cf0"/>
<path d="M1296.5 223.2V225.4M1298.1 215.8V223.2" stroke="#ff1a1a"/>
<path d="M1299.7 215.8V228.1" stroke="#1e8cf0"/>
<path d="M1301.3 217.3V221.1" stroke="#ff1a1a"/>
<path d="M1302.9 217.1V219.1M1304.4 218.5V220.5" stroke="#1e8cf0"/>
<path d="M1306.0 220.1V225.6" stroke="#f4ec84"/>
<path d="M1307.6 225.2V227.2" stroke="#1e8cf0"/>
<path d="M1309.2 225.7V227.7M1310.8 225.1V227.1" stroke="#f4ec84"/>
<path d="M1312.3 226.2V229.8" stroke="#1e8cf0"/>
<path d="M1313.9 229.8V233.9" stroke="#f4ec84"/>
<path d="M1315.5 233.9V242.9" stroke="#1e8cf0"/>
<path d="M1317.1 239.2V242.9" stroke="#ff1a1a"/>
<path d="M1318.7 239.2V244.5M1320.2 244.3V246.3" stroke="#1e8cf0"/>
<path d="M1321.8 244.8V246.8" stroke="#ff1a1a"/>
<path d="M1323.4 242.8V245.3M1325.0 241.8V243.8" stroke="#f4ec84"/>
<path d="M1326.6 241.0V243.0" stroke="#ff1a1a"/>
<path d="M1328.1 240.1V242.1" stroke="#f4ec84"/>
<path d="M1329.7 240.2V242.2M1331.3 241.1V243.1" stroke="#1e8cf0"/>
<path d="M1332.9 241.5V243.5M1334.5 241.8V243.8M1336.0 242.6V244.6M1337.6 243.0V245.0" stroke="#f4ec84"/>
<path d="M1339.2 242.0V244.0" stroke="#ff1a1a"/>
<path d="M1340.8 242.3V247.3" stroke="#1e8cf0"/>
<path d="M1342.4 244.8V247.3M1343.9 243.3V245.3M1345.5 234.7V243.8M1347.1 233.0V235.0M1348.7 228.6V233.4" stroke="#ff1a1a"/>
<path d="M1350.3 228.6V231.2M1351.8 231.2V238.9M1353.4 236.5V244.2M1355.0 244.2V247.4M1356.6 247.4V250.3" stroke="#1e8cf0"/>
<path d="M1358.2 249.3V254.3" stroke="#f4ec84"/>
<path d="M1359.7 248.1V250.1M1361.3 246.0V248.5" stroke="#ff1a1a"/>
<path d="M1362.9 245.8V247.8" stroke="#1e8cf0"/>
<path d="M1364.5 246.5V248.5" stroke="#f4ec84"/>
<path d="M1366.1 248.0V251.0" stroke="#1e8cf0"/>
<path d="M1367.6 250.0V252.0" stroke="#f4ec84"/>
<path d="M1369.2 251.5V253.7M1370.8 253.7V257.4" stroke="#1e8cf0"/>
<path d="M1372.4 255.0V257.4" stroke="#ff1a1a"/>
<path d="M1374.0 254.0V256.0" stroke="#f4ec84"/>
<path d="M1375.5 255.0V258.7" stroke="#1e8cf0"/>
<path d="M1377.1 258.7V261.5M1378.7 258.3V261.5M1380.3 258.3V263.4M1381.9 262.4V264.4" stroke="#f4ec84"/>
<path d="M1383.4 263.6V266.4M1385.0 265.9V267.9M1386.6 267.4V277.1" stroke="#1e8cf0"/>
<path d="M1388.2 266.1V277.1" stroke="#ff1a1a"/>
<path d="M1389.8 274.0V276.0" stroke="#1e8cf0"/>
<path d="M1391.3 275.6V277.6" stroke="#f4ec84"/>
<path d="M1392.9 276.8V278.8" stroke="#1e8cf0"/>
<path d="M1394.5 277.3V279.3" stroke="#f4ec84"/>
<path d="M1396.1 273.5V278.4" stroke="#ff1a1a"/>
<path d="M1397.7 272.5V274.5" stroke="#f4ec84"/>
<path d="M1399.2 273.4V276.4M1400.8 276.4V279.0" stroke="#1e8cf0"/>
<path d="M1402.4 276.1V279.0" stroke="#ff1a1a"/>
<path d="M1404.0 269.2V277.1" stroke="#f4ec84"/>
<path d="M1405.6 275.8V279.3" stroke="#1e8cf0"/>
<path d="M1407.1 278.3V280.3" stroke="#f4ec84"/>
<path d="M1408.7 276.6V279.4" stroke="#ff1a1a"/>
<path d="M1410.3 274.6V276.6M1411.9 274.7V278.6" stroke="#f4ec84"/>
<path d="M1413.5 273.5V280.4" stroke="#1e8cf0"/>
<path d="M1415.0 279.2V281.2" stroke="#f4ec84"/>
<path d="M1416.6 280.4V283.9M1418.2 283.8V285.8M1419.8 285.4V287.4M1421.4 286.8V288.8M1422.9 288.1V290.1M1424.5 286.0V295.0" stroke="#1e8cf0"/>
<path d="M1426.1 294.0V296.0" stroke="#f4ec84"/>
<path d="M1427.7 294.4V299.8" stroke="#1e8cf0"/>
<path d="M1429.3 298.8V300.8" stroke="#f4ec84"/>
<path d="M1430.8 300.1V303.9M1432.4 295.8V305.7" stroke="#1e8cf0"/>
<path d="M1434.0 304.5V306.5" stroke="#f4ec84"/>
<path d="M1435.6 305.5V307.5" stroke="#1e8cf0"/>
<path d="M1437.2 300.2V307.3M1438.7 298.5V300.5" stroke="#ff1a1a"/>
<path d="M1440.3 293.9V300.7" stroke="#1e8cf0"/>
<path d="M1441.9 298.7V300.7" stroke="#ff1a1a"/>
<path d="M1443.5 294.9V301.6" stroke="#f4ec84"/>
<path d="M1445.1 281.3V294.9" stroke="#ff1a1a"/>
<path d="M1446.6 287.6V289.6M1448.2 286.9V288.9M1449.8 286.4V288.4" stroke="#f4ec84"/>
<path d="M1451.4 285.4V287.4M1453.0 283.8V285.8M1454.5 282.4V284.4" stroke="#ff1a1a"/>
<path d="M1456.1 279.5V282.9M1457.7 278.5V280.5M1459.3 278.5V280.5M1460.9 278.4V280.4" stroke="#f4ec84"/>
<path d="M1462.4 278.9V280.9" stroke="#1e8cf0"/>
<path d="M1464.0 278.7V280.7" stroke="#ff1a1a"/>
<path d="M1465.6 278.1V280.1M1467.2 278.5V280.5" stroke="#f4ec84"/>
<path d="M1468.8 277.9V279.9M1470.3 274.9V278.4" stroke="#ff1a1a"/>
<path d="M1471.9 274.9V282.7M1473.5 282.7V286.5M1475.1 286.5V289.4" stroke="#1e8cf0"/>
<path d="M1476.7 285.5V289.4M1478.2 281.7V285.5" stroke="#ff1a1a"/>
<path d="M1479.8 278.4V281.7" stroke="#f4ec84"/>
<path d="M1481.4 278.4V281.9M1483.0 281.8V283.8M1484.6 283.7V286.9M1486.1 286.9V290.6" stroke="#1e8cf0"/>
<path d="M1487.7 289.6V291.6M1489.3 289.5V291.5" stroke="#f4ec84"/>
<path d="M1490.9 286.5V292.1" stroke="#1e8cf0"/>
<path d="M1492.5 291.8V293.8" stroke="#f4ec84"/>
<path d="M1494.0 291.7V293.7M1495.6 287.5V291.8M1497.2 283.8V287.5M1498.8 282.4V284.4M1500.4 280.2V283.0M1501.9 278.0V280.2" stroke="#ff1a1a"/>
<path d="M1503.5 277.0V279.0M1505.1 276.6V278.6" stroke="#f4ec84"/>
<path d="M1506.7 270.7V277.0M1508.3 267.5V272.9" stroke="#ff1a1a"/>
<path d="M1509.8 265.2V267.5M1511.4 264.7V266.7M1513.0 266.0V268.0M1514.6 267.0V269.0M1516.2 266.3V268.4" stroke="#f4ec84"/>
<path d="M1517.7 266.0V268.0M1519.3 267.7V273.9" stroke="#1e8cf0"/>
<path d="M1520.9 272.9V274.9" stroke="#f4ec84"/>
<path d="M1522.5 274.4V276.6M1524.1 273.0V283.3" stroke="#1e8cf0"/>
<path d="M1525.6 274.2V283.3" stroke="#ff1a1a"/>
<path d="M1527.2 278.9V280.9M1528.8 278.9V280.9" stroke="#f4ec84"/>
<path d="M1530.4 279.4V281.9" stroke="#1e8cf0"/>
<path d="M1532.0 278.5V281.9" stroke="#ff1a1a"/>
<path d="M1533.5 277.5V279.5M1535.1 278.0V280.0" stroke="#f4ec84"/>
<path d="M1536.7 279.0V282.9" stroke="#1e8cf0"/>
<path d="M1538.3 281.9V283.9" stroke="#f4ec84"/>
<path d="M1539.9 282.9V285.0M1541.4 285.0V289.8" stroke="#1e8cf0"/>
<path d="M1543.0 289.8V293.8" stroke="#f4ec84"/>
<path d="M1544.6 293.8V299.7" stroke="#1e8cf0"/>
<path d="M1546.2 292.5V296.4" stroke="#f4ec84"/>
<path d="M1547.8 292.4V294.4" stroke="#1e8cf0"/>
<path d="M1549.3 292.3V294.3" stroke="#f4ec84"/>
<path d="M1550.9 290.4V292.4" stroke="#ff1a1a"/>
<path d="M1552.5 288.5V290.5" stroke="#f4ec84"/>
<path d="M1554.1 286.9V288.9" stroke="#ff1a1a"/>
<path d="M1555.7 286.3V288.3" stroke="#f4ec84"/>
<path d="M1557.2 287.5V295.1M1558.8 295.1V297.8M1560.4 297.8V303.8" stroke="#1e8cf0"/>
<path d="M1562.0 297.8V300.9" stroke="#ff1a1a"/>
<path d="M1563.6 297.3V299.3" stroke="#f4ec84"/>
<path d="M1565.1 298.9V302.8" stroke="#1e8cf0"/>
<path d="M1566.7 301.2V303.2" stroke="#ff1a1a"/>
<path d="M1568.3 301.6V304.7" stroke="#f4ec84"/>
<path d="M1569.9 304.4V306.4M1571.5 305.6V307.6" stroke="#1e8cf0"/>
<path d="M1573.0 306.1V308.1" stroke="#f4ec84"/>
<path d="M1574.6 306.6V308.9" stroke="#1e8cf0"/>
<path d="M1576.2 307.2V309.2" stroke="#ff1a1a"/>
<path d="M1577.8 306.4V308.4M1579.4 307.0V309.0" stroke="#f4ec84"/>
<path d="M1580.9 308.0V313.1" stroke="#1e8cf0"/>
<path d="M1582.5 312.1V314.1" stroke="#f4ec84"/>
<path d="M1584.1 313.6V317.3" stroke="#1e8cf0"/>
<path d="M1585.7 315.7V317.7" stroke="#ff1a1a"/>
<path d="M1587.3 316.0V318.8" stroke="#1e8cf0"/>
<path d="M1588.8 318.2V320.2" stroke="#f4ec84"/>
<path d="M1590.4 317.4V319.6" stroke="#ff1a1a"/>
<path d="M1592.0 316.4V318.4" stroke="#f4ec84"/>
<path d="M1593.6 316.0V318.0M1595.2 314.4V316.4" stroke="#ff1a1a"/>
<path d="M1596.7 314.5V316.9" stroke="#1e8cf0"/>
<path d="M1598.3 315.4V317.4" stroke="#ff1a1a"/>
<path d="M1599.9 314.4V316.4" stroke="#f4ec84"/>
<path d="M1601.5 314.8V316.9M1603.1 311.2V318.8M1604.6 318.8V322.2M1606.2 321.6V323.6M1607.8 322.6V324.6" stroke="#1e8cf0"/>
<path d="M1609.4 317.9V326.8" stroke="#f4ec84"/>
<path d="M1611.0 314.2V317.9M1612.5 312.4V314.4M1614.1 310.0V312.7" stroke="#ff1a1a"/>
<path d="M1615.7 303.9V310.0" stroke="#f4ec84"/>
<path d="M1617.3 300.3V303.9" stroke="#ff1a1a"/>
<path d="M1618.9 300.3V303.4" stroke="#1e8cf0"/>
<path d="M1620.4 301.1V308.0" stroke="#f4ec84"/>
<path d="M1622.0 306.4V308.4" stroke="#ff1a1a"/>
<path d="M1623.6 306.1V308.1M1625.2 307.5V310.8M1626.8 310.8V316.7" stroke="#1e8cf0"/>
<path d="M1628.3 303.9V314.1" stroke="#ff1a1a"/>
<path d="M1629.9 309.5V311.5M1631.5 309.8V311.8M1633.1 310.0V312.0M1634.7 310.7V312.7" stroke="#f4ec84"/>
<path d="M1636.2 312.1V319.9" stroke="#1e8cf0"/>
<path d="M1637.8 318.0V320.0" stroke="#ff1a1a"/>
<path d="M1639.4 317.0V319.0M1641.0 316.7V318.7M1642.6 316.1V318.1" stroke="#f4ec84"/>
<path d="M1644.1 317.2V319.2M1645.7 318.6V320.6M1647.3 320.3V322.3" stroke="#1e8cf0"/>
<path d="M1648.9 319.7V322.0" stroke="#ff1a1a"/>
<path d="M1650.5 319.7V322.1" stroke="#1e8cf0"/>
<path d="M1652.0 321.1V323.1M1653.6 317.4V323.6" stroke="#f4ec84"/>
<path d="M1655.2 322.0V326.1" stroke="#1e8cf0"/>
<path d="M1656.8 320.9V327.1M1658.4 325.3V327.3M1659.9 325.8V327.8" stroke="#f4ec84"/>
<path d="M1661.5 326.9V328.9" stroke="#1e8cf0"/>
<path d="M1663.1 325.8V328.6M1664.7 324.8V326.8" stroke="#f4ec84"/>
<path d="M1666.3 325.5V327.5" stroke="#1e8cf0"/>
<path d="M1667.8 325.4V327.4" stroke="#ff1a1a"/>
<path d="M1669.4 325.4V328.4" stroke="#1e8cf0"/>
<path d="M1671.0 324.0V328.4M1672.6 322.7V324.7" stroke="#f4ec84"/>
<path d="M1674.2 323.3V327.1M1675.7 326.6V328.6M1677.3 328.2V331.7M1678.9 328.0V337.3" stroke="#1e8cf0"/>
<path d="M1680.5 337.3V339.6" stroke="#f4ec84"/>
<path d="M1682.1 338.0V340.0" stroke="#ff1a1a"/>
<path d="M1683.6 332.9V339.3" stroke="#f4ec84"/>
<path d="M1685.2 338.8V342.2M1686.8 341.9V343.9M1688.4 343.3V345.3" stroke="#1e8cf0"/>
<path d="M1690.0 343.2V345.2" stroke="#ff1a1a"/>
<path d="M1691.5 341.9V343.9" stroke="#f4ec84"/>
<path d="M1693.1 340.4V342.5" stroke="#ff1a1a"/>
<path d="M1694.7 339.4V341.4" stroke="#f4ec84"/>
<path d="M1696.3 340.1V342.2M1697.9 341.7V343.7M1699.4 342.6V344.6" stroke="#1e8cf0"/>
<path d="M1701.0 342.3V344.3" stroke="#ff1a1a"/>
<path d="M1702.6 342.1V344.1" stroke="#1e8cf0"/>
<path d="M1704.2 342.7V344.7" stroke="#f4ec84"/>
<path d="M1705.8 343.8V347.1M1707.3 346.8V348.8M1708.9 348.4V352.6M1710.5 352.3V354.3M1712.1 353.9V356.7M1713.7 356.4V358.4" stroke="#1e8cf0"/>
<path d="M1715.2 356.6V358.6M1716.8 354.8V357.1" stroke="#ff1a1a"/>
<path d="M1718.4 354.6V356.6" stroke="#f4ec84"/>
<path d="M1720.0 354.9V356.9" stroke="#ff1a1a"/>
<path d="M1721.6 354.6V356.6" stroke="#f4ec84"/>
<path d="M1723.1 353.5V355.7" stroke="#ff1a1a"/>
<path d="M1724.7 352.5V354.5" stroke="#f4ec84"/>
<path d="M1726.3 351.5V353.5M1727.9 347.5V352.1" stroke="#ff1a1a"/>
<path d="M1729.5 346.5V348.5" stroke="#f4ec84"/>
<path d="M1731.0 347.9V349.9" stroke="#1e8cf0"/>
<path d="M1732.6 344.8V349.9M1734.2 342.1V344.8M1735.8 337.0V342.2" stroke="#ff1a1a"/>
<path d="M1737.4 339.4V341.4" stroke="#f4ec84"/>
<path d="M1738.9 338.9V340.9M1740.5 337.9V339.9" stroke="#ff1a1a"/>
<path d="M1742.1 337.5V339.5" stroke="#f4ec84"/>
<path d="M1743.7 337.0V339.0M1745.3 332.2V337.2M1746.8 330.7V332.7" stroke="#ff1a1a"/>
<path d="M1748.4 331.3V337.2M1750.0 337.2V344.4" stroke="#1e8cf0"/>
<path d="M1751.6 342.6V344.6" stroke="#ff1a1a"/>
<path d="M1753.2 342.2V344.2" stroke="#1e8cf0"/>
<path d="M1754.7 341.7V343.7" stroke="#f4ec84"/>
<path d="M1756.3 341.7V343.7" stroke="#1e8cf0"/>
<path d="M1757.9 341.7V343.7M1759.5 337.2V341.8" stroke="#ff1a1a"/>
<path d="M1761.1 332.5V337.2" stroke="#f4ec84"/>
<path d="M1762.6 332.5V334.9" stroke="#1e8cf0"/>
<path d="M1764.2 330.6V334.9" stroke="#ff1a1a"/>
<path d="M1765.8 328.3V330.6" stroke="#f4ec84"/>
<path d="M1767.4 325.0V328.3" stroke="#ff1a1a"/>
<path d="M1769.0 325.0V327.4M1770.5 327.4V330.6M1772.1 330.6V335.6" stroke="#1e8cf0"/>
<path d="M1773.7 334.6V336.6M1775.3 333.5V335.5" stroke="#f4ec84"/>
<path d="M1776.9 333.5V335.5" stroke="#1e8cf0"/>
<path d="M1778.4 333.5V335.5M1780.0 332.1V334.1" stroke="#ff1a1a"/>
<path d="M1781.6 331.4V333.4M1783.2 331.7V333.7M1784.8 332.1V334.1M1786.3 331.8V333.8" stroke="#f4ec84"/>
<path d="M1787.9 332.5V334.5" stroke="#1e8cf0"/>
<path d="M1789.5 329.7V334.3" stroke="#ff1a1a"/>
<path d="M1791.1 329.7V331.9" stroke="#1e8cf0"/>
<path d="M1792.7 330.5V332.5M1794.2 329.5V331.5M1795.8 328.1V330.1M1797.4 324.7V328.4" stroke="#ff1a1a"/>
<path d="M1799.0 324.7V327.8" stroke="#1e8cf0"/>
<path d="M1800.6 326.8V328.8M1802.1 326.5V328.5M1803.7 325.0V327.4M1805.3 324.0V326.0" stroke="#f4ec84"/>
<path d="M1806.9 324.6V326.6" stroke="#1e8cf0"/>
<path d="M1808.5 323.0V326.3" stroke="#ff1a1a"/>
<path d="M1810.0 323.0V326.7M1811.6 326.7V328.7M1813.2 328.6V331.4M1814.8 331.4V334.3" stroke="#1e8cf0"/>
<path d="M1816.4 332.4V334.4" stroke="#ff1a1a"/>
<path d="M1817.9 331.9V337.5M1819.5 332.5V334.5" stroke="#f4ec84"/>
<path d="M1821.1 333.8V338.4M1822.7 338.4V342.5" stroke="#1e8cf0"/>
<path d="M1824.3 338.9V344.9" stroke="#f4ec84"/>
<path d="M1825.8 338.9V342.1" stroke="#1e8cf0"/>
<path d="M1827.4 341.1V345.5M1829.0 342.5V344.5M1830.6 341.7V344.2M1832.2 337.9V341.7" stroke="#f4ec84"/>
<path d="M1833.7 337.9V340.1" stroke="#1e8cf0"/>
<path d="M1835.3 339.1V341.1" stroke="#f4ec84"/>
<path d="M1836.9 340.5V346.0" stroke="#1e8cf0"/>
<path d="M1838.5 344.4V346.4" stroke="#ff1a1a"/>
<path d="M1840.1 344.8V349.8" stroke="#f4ec84"/>
<path d="M1841.6 349.8V352.3" stroke="#1e8cf0"/>
<path d="M1843.2 347.5V352.3" stroke="#f4ec84"/>
<path d="M1844.8 344.6V347.5M1846.4 342.6V344.6" stroke="#ff1a1a"/>
<path d="M1848.0 340.5V342.6M1849.5 339.5V341.5" stroke="#f4ec84"/>
<path d="M1851.1 334.2V340.2" stroke="#ff1a1a"/>
<path d="M1852.7 334.2V339.1M1854.3 339.0V341.0" stroke="#f4ec84"/>
<path d="M1855.9 339.1V341.1M1857.4 336.4V339.4M1859.0 332.6V336.4" stroke="#ff1a1a"/>
<path d="M1860.6 332.6V338.6" stroke="#f4ec84"/>
<path d="M1862.2 335.1V338.6" stroke="#ff1a1a"/>
<path d="M1863.8 335.1V341.5M1865.3 336.4V338.4M1866.9 336.1V338.1M1868.5 336.5V341.4" stroke="#f4ec84"/>
<path d="M1870.1 339.7V341.7" stroke="#ff1a1a"/>
<path d="M1871.7 339.9V342.8" stroke="#1e8cf0"/>
<path d="M1873.2 341.8V343.8M1874.8 341.9V343.9M1876.4 341.7V343.7" stroke="#f4ec84"/>
<path d="M1878.0 340.4V342.4" stroke="#ff1a1a"/>
<path d="M1879.6 340.7V344.9" stroke="#f4ec84"/>
<path d="M1881.1 344.6V346.6M1882.7 346.3V348.3" stroke="#1e8cf0"/>
<path d="M1884.3 343.1V348.2" stroke="#ff1a1a"/>
<path d="M1885.9 340.6V345.6" stroke="#1e8cf0"/>
<path d="M1887.5 344.6V346.6M1889.0 345.2V347.7M1890.6 346.7V348.7M1892.2 347.3V349.3" stroke="#f4ec84"/>
<path d="M1893.8 342.0V347.7" stroke="#ff1a1a"/>
<path d="M1895.4 342.0V347.0" stroke="#1e8cf0"/>
</g>
<g clip-path="url(#c2)" fill="none" stroke-width="2.8">
<path d="M17.1 602.5V604.5" stroke="#1e8cf0"/>
<path d="M25.0 600.7V602.7" stroke="#f4ec84"/>
<path d="M29.7 600.9V604.6" stroke="#1e8cf0"/>
<path d="M31.3 603.6V605.6M40.8 602.0V604.0" stroke="#f4ec84"/>
<path d="M50.3 603.1V605.1M69.2 595.5V597.5" stroke="#ff1a1a"/>
<path d="M70.8 594.1V596.1" stroke="#f4ec84"/>
<path d="M75.5 588.3V590.7M77.1 586.8V588.8M78.7 583.4V587.3M83.4 573.8V582.0M85.0 577.0V579.3M86.6 574.0V577.0M89.8 569.4V572.0" stroke="#ff1a1a"/>
<path d="M91.3 567.2V569.4M92.9 565.2V567.2" stroke="#f4ec84"/>
<path d="M94.5 565.2V574.7" stroke="#1e8cf0"/>
<path d="M96.1 565.3V567.3" stroke="#ff1a1a"/>
<path d="M97.7 564.7V566.7M100.8 562.8V565.6M102.4 565.6V571.5M104.0 571.5V575.6" stroke="#1e8cf0"/>
<path d="M105.6 574.6V576.6" stroke="#f4ec84"/>
<path d="M107.1 575.7V580.3M108.7 580.3V585.0" stroke="#1e8cf0"/>
<path d="M110.3 584.0V586.0" stroke="#f4ec84"/>
<path d="M111.9 585.2V587.6" stroke="#1e8cf0"/>
<path d="M113.5 586.6V588.6" stroke="#f4ec84"/>
<path d="M116.6 577.2V586.1" stroke="#1e8cf0"/>
<path d="M118.2 585.9V587.9" stroke="#f4ec84"/>
<path d="M121.4 584.4V589.2M122.9 580.1V584.4" stroke="#ff1a1a"/>
<path d="M124.5 580.1V584.4" stroke="#f4ec84"/>
<path d="M126.1 583.9V585.9" stroke="#1e8cf0"/>
<path d="M127.7 583.4V585.4M129.3 581.1V583.4M130.8 578.3V581.1" stroke="#ff1a1a"/>
<path d="M132.4 568.7V578.3M134.0 563.2V570.5" stroke="#f4ec84"/>
<path d="M135.6 569.8V571.8" stroke="#1e8cf0"/>
<path d="M137.2 569.7V571.7M138.7 565.8V569.9" stroke="#ff1a1a"/>
<path d="M140.3 565.8V570.1" stroke="#f4ec84"/>
<path d="M141.9 570.1V576.3M143.5 576.2V578.2" stroke="#1e8cf0"/>
<path d="M145.1 576.4V578.4" stroke="#ff1a1a"/>
<path d="M146.6 576.6V579.5M148.2 579.5V581.5" stroke="#1e8cf0"/>
<path d="M149.8 580.1V582.1" stroke="#ff1a1a"/>
<path d="M151.4 579.8V581.8M153.0 579.5V581.5" stroke="#f4ec84"/>
<path d="M154.5 581.1V584.8" stroke="#1e8cf0"/>
<path d="M156.1 582.2V584.8" stroke="#ff1a1a"/>
<path d="M157.7 581.2V583.2M159.3 582.1V584.1M160.9 582.7V584.7" stroke="#f4ec84"/>
<path d="M162.4 583.0V587.4M164.0 580.2V583.5" stroke="#ff1a1a"/>
<path d="M165.6 580.2V582.6" stroke="#f4ec84"/>
<path d="M167.2 580.3V582.6M168.8 578.6V580.6" stroke="#ff1a1a"/>
<path d="M170.3 578.9V582.0M171.9 582.0V587.1" stroke="#1e8cf0"/>
<path d="M173.5 585.6V587.6" stroke="#f4ec84"/>
<path d="M175.1 585.8V587.8M176.7 587.6V592.4M178.2 592.4V594.4" stroke="#1e8cf0"/>
<path d="M179.8 593.4V595.4" stroke="#f4ec84"/>
<path d="M181.4 593.7V595.7" stroke="#1e8cf0"/>
<path d="M183.0 592.6V595.7" stroke="#ff1a1a"/>
<path d="M184.6 591.6V593.6" stroke="#f4ec84"/>
<path d="M187.7 596.2V600.6" stroke="#1e8cf0"/>
<path d="M190.9 600.7V603.9" stroke="#f4ec84"/>
<path d="M192.5 591.8V600.7" stroke="#ff1a1a"/>
<path d="M194.0 596.3V598.3M195.6 596.7V598.7" stroke="#f4ec84"/>
<path d="M197.2 597.9V602.3" stroke="#1e8cf0"/>
<path d="M198.8 600.2V602.3" stroke="#ff1a1a"/>
<path d="M200.4 600.2V608.4" stroke="#f4ec84"/>
<path d="M201.9 601.5V603.6" stroke="#ff1a1a"/>
<path d="M203.5 600.5V602.5" stroke="#f4ec84"/>
<path d="M205.1 601.2V603.2M206.7 602.6V604.6" stroke="#1e8cf0"/>
<path d="M208.3 601.9V604.0" stroke="#ff1a1a"/>
<path d="M211.4 598.4V601.7M213.0 597.4V599.4M214.6 597.7V599.7" stroke="#f4ec84"/>
<path d="M217.7 594.3V597.9" stroke="#ff1a1a"/>
<path d="M219.3 594.3V598.1" stroke="#1e8cf0"/>
<path d="M220.9 592.7V598.1" stroke="#ff1a1a"/>
<path d="M222.5 587.8V595.6" stroke="#1e8cf0"/>
<path d="M224.1 593.3V595.6M225.6 589.7V593.3M227.2 587.9V589.9" stroke="#ff1a1a"/>
<path d="M228.8 587.8V589.8M230.4 589.4V592.9" stroke="#1e8cf0"/>
<path d="M232.0 587.9V592.9" stroke="#ff1a1a"/>
<path d="M233.5 588.3V591.0M235.1 586.3V588.3" stroke="#f4ec84"/>
<path d="M236.7 581.4V588.5" stroke="#1e8cf0"/>
<path d="M238.3 587.1V589.1" stroke="#f4ec84"/>
<path d="M239.9 587.7V590.0" stroke="#1e8cf0"/>
<path d="M243.0 587.7V589.7" stroke="#ff1a1a"/>
<path d="M244.6 582.6V588.3" stroke="#f4ec84"/>
<path d="M246.2 574.2V582.6M247.8 569.6V574.2M249.3 567.3V569.6M250.9 557.0V567.3M252.5 562.4V564.8" stroke="#ff1a1a"/>
<path d="M254.1 561.4V563.4" stroke="#f4ec84"/>
<path d="M255.7 559.8V561.8" stroke="#ff1a1a"/>
<path d="M257.2 553.9V559.8M258.8 551.9V553.9" stroke="#f4ec84"/>
<path d="M262.0 552.0V554.0" stroke="#ff1a1a"/>
<path d="M263.6 552.2V554.2" stroke="#1e8cf0"/>
<path d="M265.1 552.6V554.6" stroke="#ff1a1a"/>
<path d="M266.7 553.0V555.0" stroke="#1e8cf0"/>
<path d="M268.3 553.9V555.9M269.9 553.7V555.7" stroke="#f4ec84"/>
<path d="M271.5 554.2V556.4" stroke="#1e8cf0"/>
<path d="M273.0 554.9V556.9" stroke="#ff1a1a"/>
<path d="M274.6 552.9V555.3M279.4 556.8V558.8M280.9 556.4V564.8" stroke="#f4ec84"/>
<path d="M282.5 557.4V559.4" stroke="#1e8cf0"/>
<path d="M284.1 550.2V559.2" stroke="#f4ec84"/>
<path d="M285.7 552.1V556.6" stroke="#ff1a1a"/>
<path d="M287.3 552.1V554.7" stroke="#1e8cf0"/>
<path d="M288.8 549.8V555.7" stroke="#f4ec84"/>
<path d="M290.4 553.9V555.9" stroke="#1e8cf0"/>
<path d="M292.0 552.0V555.6" stroke="#ff1a1a"/>
<path d="M293.6 550.2V552.2" stroke="#f4ec84"/>
<path d="M296.7 542.1V545.2" stroke="#ff1a1a"/>
<path d="M298.3 542.1V544.3" stroke="#1e8cf0"/>
<path d="M299.9 541.8V544.3M301.5 540.2V542.2" stroke="#ff1a1a"/>
<path d="M303.1 539.7V541.7M304.6 539.5V541.5" stroke="#f4ec84"/>
<path d="M306.2 540.7V542.7M307.8 542.3V544.3" stroke="#1e8cf0"/>
<path d="M309.4 539.9V543.9" stroke="#ff1a1a"/>
<path d="M311.0 537.6V542.0M312.5 541.0V543.0M314.1 541.5V543.5M315.7 541.1V543.1" stroke="#f4ec84"/>
<path d="M317.3 536.7V541.8M318.9 530.7V536.7" stroke="#ff1a1a"/>
<path d="M320.4 529.7V531.7" stroke="#f4ec84"/>
<path d="M322.0 528.4V530.4" stroke="#ff1a1a"/>
<path d="M323.6 528.4V535.4M325.2 530.8V532.8M326.8 532.2V534.2" stroke="#1e8cf0"/>
<path d="M328.3 532.7V534.7M329.9 522.1V533.7" stroke="#f4ec84"/>
<path d="M331.5 528.0V532.2M333.1 532.0V534.0" stroke="#1e8cf0"/>
<path d="M334.7 532.8V534.8" stroke="#f4ec84"/>
<path d="M336.2 530.6V534.4" stroke="#ff1a1a"/>
<path d="M337.8 530.4V532.4" stroke="#f4ec84"/>
<path d="M341.0 532.1V538.7" stroke="#1e8cf0"/>
<path d="M342.6 535.5V538.7" stroke="#ff1a1a"/>
<path d="M344.1 535.0V537.0" stroke="#1e8cf0"/>
<path d="M345.7 534.3V536.6" stroke="#ff1a1a"/>
<path d="M347.3 534.1V536.1" stroke="#f4ec84"/>
<path d="M348.9 535.5V537.5" stroke="#1e8cf0"/>
<path d="M350.5 536.0V538.0M352.0 537.1V540.8M353.6 539.8V541.8M355.2 530.9V540.7M356.8 538.1V540.1M358.4 536.2V538.7M359.9 535.2V537.2" stroke="#f4ec84"/>
<path d="M361.5 533.5V536.5M363.1 532.1V534.1" stroke="#ff1a1a"/>
<path d="M364.7 530.3V532.7" stroke="#f4ec84"/>
<path d="M367.8 525.7V528.1M369.4 521.8V525.9" stroke="#ff1a1a"/>
<path d="M371.0 523.1V525.1" stroke="#f4ec84"/>
<path d="M372.6 523.8V527.6" stroke="#1e8cf0"/>
<path d="M374.2 522.3V527.6" stroke="#f4ec84"/>
<path d="M375.7 522.2V524.2" stroke="#1e8cf0"/>
<path d="M377.3 517.8V524.1" stroke="#ff1a1a"/>
<path d="M378.9 517.6V519.6M380.5 519.4V523.1" stroke="#1e8cf0"/>
<path d="M382.1 521.2V523.2M383.6 519.8V521.8" stroke="#ff1a1a"/>
<path d="M385.2 520.0V522.0" stroke="#1e8cf0"/>
<path d="M388.4 520.5V528.2M390.0 518.0V521.1" stroke="#ff1a1a"/>
<path d="M394.7 529.4V532.9M396.3 532.8V534.8" stroke="#1e8cf0"/>
<path d="M397.9 533.6V535.6" stroke="#f4ec84"/>
<path d="M399.4 534.2V537.9" stroke="#1e8cf0"/>
<path d="M401.0 536.9V538.9" stroke="#f4ec84"/>
<path d="M402.6 537.8V539.8" stroke="#1e8cf0"/>
<path d="M404.2 535.9V539.7" stroke="#ff1a1a"/>
<path d="M405.8 535.9V546.1" stroke="#f4ec84"/>
<path d="M407.3 539.3V543.2M408.9 543.0V545.0M412.1 545.5V547.6M413.7 547.1V549.1" stroke="#1e8cf0"/>
<path d="M415.2 539.9V548.6" stroke="#ff1a1a"/>
<path d="M416.8 539.9V546.4" stroke="#f4ec84"/>
<path d="M418.4 544.7V548.2" stroke="#1e8cf0"/>
<path d="M420.0 547.2V549.2" stroke="#f4ec84"/>
<path d="M423.1 544.2V548.6M424.7 542.4V544.4" stroke="#ff1a1a"/>
<path d="M426.3 541.6V543.6M427.9 541.3V543.3M429.5 540.7V542.7" stroke="#f4ec84"/>
<path d="M431.0 541.7V543.8M432.6 543.8V546.5" stroke="#1e8cf0"/>
<path d="M434.2 546.5V548.8" stroke="#f4ec84"/>
<path d="M435.8 548.8V553.6" stroke="#1e8cf0"/>
<path d="M437.4 552.6V554.6M438.9 548.6V553.5M440.5 547.2V549.2M442.1 543.6V549.2M443.7 545.0V548.6" stroke="#f4ec84"/>
<path d="M445.3 540.1V545.0" stroke="#ff1a1a"/>
<path d="M446.8 535.2V541.8M448.4 540.4V542.4M450.0 540.1V542.1" stroke="#f4ec84"/>
<path d="M454.7 540.4V543.1" stroke="#ff1a1a"/>
<path d="M456.3 539.4V541.4" stroke="#f4ec84"/>
<path d="M457.9 540.1V542.1M459.5 542.1V545.5" stroke="#1e8cf0"/>
<path d="M462.6 545.5V547.5" stroke="#f4ec84"/>
<path d="M464.2 545.8V550.4" stroke="#1e8cf0"/>
<path d="M465.8 549.4V551.4M469.0 541.0V549.7" stroke="#f4ec84"/>
<path d="M470.5 543.9V548.2" stroke="#ff1a1a"/>
<path d="M473.7 541.2V543.2M475.3 542.5V544.5" stroke="#1e8cf0"/>
<path d="M478.4 536.5V539.9" stroke="#ff1a1a"/>
<path d="M480.0 536.5V540.1" stroke="#1e8cf0"/>
<path d="M481.6 539.1V541.1" stroke="#f4ec84"/>
<path d="M483.2 537.7V546.4" stroke="#ff1a1a"/>
<path d="M486.3 533.4V535.8" stroke="#1e8cf0"/>
<path d="M491.1 528.7V535.6" stroke="#f4ec84"/>
<path d="M492.7 530.2V534.2M494.2 528.8V530.8" stroke="#ff1a1a"/>
<path d="M495.8 528.8V530.8" stroke="#f4ec84"/>
<path d="M497.4 528.5V530.5" stroke="#ff1a1a"/>
<path d="M499.0 521.1V529.9M500.6 527.4V529.4" stroke="#f4ec84"/>
<path d="M502.1 527.9V530.0" stroke="#1e8cf0"/>
<path d="M503.7 528.2V530.2" stroke="#ff1a1a"/>
<path d="M505.3 528.4V531.6" stroke="#1e8cf0"/>
<path d="M506.9 526.6V531.6M508.5 525.6V527.6" stroke="#f4ec84"/>
<path d="M510.0 524.4V526.8M511.6 522.6V524.6" stroke="#ff1a1a"/>
<path d="M513.2 522.8V530.0" stroke="#1e8cf0"/>
<path d="M514.8 524.2V530.0M516.4 521.0V527.6M517.9 520.9V523.6" stroke="#ff1a1a"/>
<path d="M519.5 519.9V521.9M521.1 520.2V525.1" stroke="#f4ec84"/>
<path d="M522.7 524.8V526.8" stroke="#1e8cf0"/>
<path d="M524.3 524.6V526.6M525.8 522.2V524.7" stroke="#ff1a1a"/>
<path d="M527.4 516.6V523.7" stroke="#1e8cf0"/>
<path d="M529.0 520.6V523.1" stroke="#ff1a1a"/>
<path d="M530.6 518.3V520.6M532.2 518.3V521.8" stroke="#f4ec84"/>
<path d="M535.3 523.1V525.1" stroke="#1e8cf0"/>
<path d="M540.1 524.0V527.4" stroke="#ff1a1a"/>
<path d="M543.2 521.4V524.9" stroke="#f4ec84"/>
<path d="M544.8 521.4V525.4" stroke="#1e8cf0"/>
<path d="M546.4 522.7V525.4" stroke="#ff1a1a"/>
<path d="M548.0 522.7V528.4" stroke="#1e8cf0"/>
<path d="M549.5 525.9V528.4M551.1 521.8V525.9M552.7 517.9V521.8" stroke="#ff1a1a"/>
<path d="M554.3 516.9V518.9" stroke="#f4ec84"/>
<path d="M555.9 511.7V518.2" stroke="#ff1a1a"/>
<path d="M557.4 511.7V516.9M559.0 513.6V516.9" stroke="#f4ec84"/>
<path d="M560.6 513.6V516.0" stroke="#1e8cf0"/>
<path d="M562.2 515.0V517.0" stroke="#f4ec84"/>
<path d="M563.8 516.3V520.8" stroke="#1e8cf0"/>
<path d="M565.3 516.3V520.8" stroke="#ff1a1a"/>
<path d="M566.9 516.3V519.1" stroke="#1e8cf0"/>
<path d="M568.5 519.1V524.8" stroke="#f4ec84"/>
<path d="M570.1 524.2V526.2" stroke="#1e8cf0"/>
<path d="M571.7 523.6V525.6" stroke="#ff1a1a"/>
<path d="M573.2 523.0V525.0" stroke="#1e8cf0"/>
<path d="M574.8 519.1V525.5M576.4 523.1V525.1" stroke="#f4ec84"/>
<path d="M578.0 519.3V527.2" stroke="#1e8cf0"/>
<path d="M579.6 524.8V527.2" stroke="#ff1a1a"/>
<path d="M581.1 522.3V524.8" stroke="#f4ec84"/>
<path d="M582.7 522.3V525.1" stroke="#1e8cf0"/>
<path d="M584.3 523.6V525.6" stroke="#ff1a1a"/>
<path d="M585.9 524.0V526.5" stroke="#1e8cf0"/>
<path d="M587.5 524.6V526.6M589.0 522.8V524.8M590.6 520.1V522.9" stroke="#ff1a1a"/>
<path d="M592.2 520.1V525.8" stroke="#1e8cf0"/>
<path d="M593.8 524.1V526.1" stroke="#f4ec84"/>
<path d="M595.4 522.0V524.4" stroke="#ff1a1a"/>
<path d="M596.9 522.0V524.0" stroke="#1e8cf0"/>
<path d="M598.5 522.1V524.1" stroke="#ff1a1a"/>
<path d="M600.1 518.6V524.7" stroke="#1e8cf0"/>
<path d="M601.7 523.7V525.7" stroke="#f4ec84"/>
<path d="M603.3 519.4V525.2" stroke="#ff1a1a"/>
<path d="M604.8 518.4V520.4M606.4 519.9V524.7" stroke="#f4ec84"/>
<path d="M609.6 524.2V528.0" stroke="#1e8cf0"/>
<path d="M611.2 526.0V528.0" stroke="#ff1a1a"/>
<path d="M612.7 525.1V527.1" stroke="#f4ec84"/>
<path d="M614.3 526.3V528.4" stroke="#1e8cf0"/>
<path d="M615.9 525.7V528.4" stroke="#ff1a1a"/>
<path d="M617.5 525.7V531.2" stroke="#1e8cf0"/>
<path d="M619.1 529.6V531.6" stroke="#ff1a1a"/>
<path d="M620.6 530.0V532.7" stroke="#1e8cf0"/>
<path d="M622.2 529.7V532.7" stroke="#ff1a1a"/>
<path d="M623.8 529.7V535.7" stroke="#1e8cf0"/>
<path d="M625.4 533.8V535.8" stroke="#f4ec84"/>
<path d="M627.0 533.9V535.9M628.5 535.8V541.6" stroke="#1e8cf0"/>
<path d="M630.1 538.1V541.6" stroke="#ff1a1a"/>
<path d="M631.7 535.0V538.1M633.3 535.0V542.8M634.9 535.4V539.4" stroke="#f4ec84"/>
<path d="M636.4 532.3V535.4" stroke="#ff1a1a"/>
<path d="M638.0 531.3V533.3M639.6 529.4V532.2M642.8 530.2V532.2" stroke="#f4ec84"/>
<path d="M644.3 530.6V533.0" stroke="#1e8cf0"/>
<path d="M645.9 531.4V533.4" stroke="#ff1a1a"/>
<path d="M647.5 531.8V533.8" stroke="#1e8cf0"/>
<path d="M650.7 533.2V535.2M652.2 534.4V536.4" stroke="#f4ec84"/>
<path d="M653.8 536.4V543.8" stroke="#1e8cf0"/>
<path d="M655.4 541.2V543.8" stroke="#f4ec84"/>
<path d="M657.0 541.2V543.4" stroke="#1e8cf0"/>
<path d="M658.6 541.4V543.4M660.1 540.4V542.4" stroke="#f4ec84"/>
<path d="M661.7 540.0V542.0" stroke="#ff1a1a"/>
<path d="M663.3 536.9V540.6M664.9 534.9V536.9" stroke="#f4ec84"/>
<path d="M668.0 519.4V529.5" stroke="#ff1a1a"/>
<path d="M669.6 525.5V527.5" stroke="#1e8cf0"/>
<path d="M671.2 526.4V528.4M672.8 525.8V527.8" stroke="#f4ec84"/>
<path d="M674.4 527.1V534.6M675.9 534.6V538.3M677.5 538.3V540.3M679.1 540.2V542.4M680.7 542.4V548.5" stroke="#1e8cf0"/>
<path d="M682.3 548.5V551.5" stroke="#f4ec84"/>
<path d="M683.8 551.3V553.3M685.4 553.1V556.3" stroke="#1e8cf0"/>
<path d="M687.0 556.2V558.2" stroke="#f4ec84"/>
<path d="M688.6 556.2V558.2M690.2 554.7V556.7" stroke="#ff1a1a"/>
<path d="M693.3 559.7V561.7M694.9 559.1V561.1" stroke="#f4ec84"/>
<path d="M696.5 557.8V567.1M698.1 556.5V558.5M699.6 553.0V556.6M701.2 549.7V553.0" stroke="#ff1a1a"/>
<path d="M702.8 549.1V555.7" stroke="#1e8cf0"/>
<path d="M704.4 545.7V550.5" stroke="#ff1a1a"/>
<path d="M706.0 544.7V546.7" stroke="#f4ec84"/>
<path d="M707.5 545.1V549.5" stroke="#1e8cf0"/>
<path d="M709.1 545.7V549.5" stroke="#ff1a1a"/>
<path d="M710.7 543.2V547.4" stroke="#1e8cf0"/>
<path d="M712.3 546.0V548.0M715.4 543.8V545.8M717.0 544.1V546.1" stroke="#f4ec84"/>
<path d="M718.6 543.2V545.2" stroke="#ff1a1a"/>
<path d="M720.2 543.8V546.3" stroke="#1e8cf0"/>
<path d="M721.8 540.5V546.3" stroke="#ff1a1a"/>
<path d="M723.3 540.2V542.2" stroke="#1e8cf0"/>
<path d="M724.9 541.0V543.0M726.5 538.2V542.0" stroke="#f4ec84"/>
<path d="M728.1 538.2V540.3" stroke="#1e8cf0"/>
<path d="M729.7 536.2V540.3" stroke="#ff1a1a"/>
<path d="M731.2 536.2V539.6M732.8 535.5V539.6M734.4 535.3V537.3" stroke="#f4ec84"/>
<path d="M736.0 537.2V547.4" stroke="#1e8cf0"/>
<path d="M737.6 538.5V540.5M739.1 535.8V538.9" stroke="#ff1a1a"/>
<path d="M740.7 534.8V536.8M742.3 534.9V536.9M743.9 530.9V535.7M745.5 530.9V533.9" stroke="#f4ec84"/>
<path d="M747.0 530.4V541.7" stroke="#ff1a1a"/>
<path d="M748.6 530.4V532.4" stroke="#1e8cf0"/>
<path d="M750.2 530.6V532.6" stroke="#ff1a1a"/>
<path d="M751.8 529.8V531.8" stroke="#f4ec84"/>
<path d="M753.4 528.0V530.7" stroke="#ff1a1a"/>
<path d="M754.9 528.0V530.2" stroke="#f4ec84"/>
<path d="M756.5 528.2V530.2" stroke="#ff1a1a"/>
<path d="M758.1 527.2V531.8M759.7 527.2V529.2M762.8 531.5V533.5" stroke="#f4ec84"/>
<path d="M764.4 532.1V536.3" stroke="#1e8cf0"/>
<path d="M766.0 531.1V536.3" stroke="#ff1a1a"/>
<path d="M767.6 531.1V535.3" stroke="#1e8cf0"/>
<path d="M769.2 528.1V541.6" stroke="#ff1a1a"/>
<path d="M770.7 528.1V534.5" stroke="#f4ec84"/>
<path d="M772.3 533.1V535.1M773.9 529.6V533.7M775.5 524.9V529.6" stroke="#ff1a1a"/>
<path d="M777.1 523.9V530.0" stroke="#f4ec84"/>
<path d="M778.6 523.1V525.1" stroke="#ff1a1a"/>
<path d="M780.2 522.3V524.3M781.8 520.8V522.8" stroke="#f4ec84"/>
<path d="M783.4 518.5V525.2" stroke="#ff1a1a"/>
<path d="M785.0 518.5V522.5" stroke="#1e8cf0"/>
<path d="M786.5 522.5V525.9M789.7 527.3V529.3" stroke="#f4ec84"/>
<path d="M791.3 525.9V527.9" stroke="#ff1a1a"/>
<path d="M794.4 532.4V534.5" stroke="#f4ec84"/>
<path d="M796.0 534.0V536.0" stroke="#1e8cf0"/>
<path d="M797.6 527.6V535.6" stroke="#ff1a1a"/>
<path d="M799.2 527.9V531.4" stroke="#f4ec84"/>
<path d="M800.8 526.1V528.1" stroke="#ff1a1a"/>
<path d="M802.3 526.3V528.3" stroke="#f4ec84"/>
<path d="M803.9 526.5V528.5" stroke="#ff1a1a"/>
<path d="M805.5 526.9V529.0" stroke="#1e8cf0"/>
<path d="M807.1 525.0V529.0M808.7 522.2V525.0M811.8 521.5V524.2M813.4 519.8V521.8" stroke="#ff1a1a"/>
<path d="M815.0 520.0V522.0" stroke="#1e8cf0"/>
<path d="M816.6 521.0V523.0M818.1 522.4V524.4M819.7 523.3V525.3" stroke="#f4ec84"/>
<path d="M821.3 516.2V525.9" stroke="#1e8cf0"/>
<path d="M822.9 523.6V525.6" stroke="#f4ec84"/>
<path d="M826.0 524.8V526.8" stroke="#1e8cf0"/>
<path d="M827.6 516.4V526.5" stroke="#ff1a1a"/>
<path d="M829.2 522.7V524.7" stroke="#f4ec84"/>
<path d="M830.8 522.7V524.7" stroke="#ff1a1a"/>
<path d="M832.4 520.8V525.3M833.9 522.5V525.3M835.5 520.7V522.7" stroke="#f4ec84"/>
<path d="M837.1 513.3V523.5" stroke="#1e8cf0"/>
<path d="M838.7 521.7V523.7" stroke="#ff1a1a"/>
<path d="M841.8 521.2V524.3" stroke="#f4ec84"/>
<path d="M843.4 521.9V524.3" stroke="#ff1a1a"/>
<path d="M845.0 521.9V523.9" stroke="#1e8cf0"/>
<path d="M846.6 522.9V524.9M848.2 523.1V525.1M849.7 523.6V527.6M851.3 526.9V528.9" stroke="#f4ec84"/>
<path d="M854.5 522.3V527.5" stroke="#ff1a1a"/>
<path d="M856.1 524.7V526.7" stroke="#f4ec84"/>
<path d="M857.6 524.7V526.7" stroke="#ff1a1a"/>
<path d="M859.2 523.1V525.1M860.8 521.8V523.8M862.4 522.3V529.6M864.0 524.4V528.1M867.1 531.6V535.2" stroke="#f4ec84"/>
<path d="M868.7 535.2V539.5" stroke="#1e8cf0"/>
<path d="M871.9 543.9V545.9M873.4 543.4V545.4" stroke="#f4ec84"/>
<path d="M875.0 541.0V547.0" stroke="#ff1a1a"/>
<path d="M876.6 540.0V542.0M878.2 536.6V541.3" stroke="#f4ec84"/>
<path d="M879.8 532.1V536.6M881.3 528.4V532.1M882.9 526.5V528.5" stroke="#ff1a1a"/>
<path d="M884.5 526.6V532.2" stroke="#1e8cf0"/>
<path d="M886.1 524.0V532.2M887.7 521.9V524.0" stroke="#ff1a1a"/>
<path d="M889.2 520.9V522.9" stroke="#f4ec84"/>
<path d="M890.8 519.0V521.7" stroke="#ff1a1a"/>
<path d="M892.4 518.3V520.3M895.6 519.5V525.1" stroke="#1e8cf0"/>
<path d="M897.1 518.3V521.4" stroke="#ff1a1a"/>
<path d="M898.7 517.3V519.3" stroke="#f4ec84"/>
<path d="M900.3 518.1V523.7" stroke="#1e8cf0"/>
<path d="M901.9 514.8V523.7" stroke="#f4ec84"/>
<path d="M903.5 520.0V522.0M905.0 516.4V523.0" stroke="#ff1a1a"/>
<path d="M906.6 516.3V518.3" stroke="#1e8cf0"/>
<path d="M908.2 516.5V518.5" stroke="#ff1a1a"/>
<path d="M909.8 516.9V518.9" stroke="#1e8cf0"/>
<path d="M912.9 517.1V519.1" stroke="#f4ec84"/>
<path d="M914.5 516.5V518.5" stroke="#1e8cf0"/>
<path d="M916.1 517.0V519.0" stroke="#f4ec84"/>
<path d="M917.7 518.1V520.1M919.3 514.1V522.9" stroke="#1e8cf0"/>
<path d="M920.8 519.9V526.8M922.4 517.1V519.9" stroke="#ff1a1a"/>
<path d="M924.0 516.1V518.1M925.6 516.7V518.7M927.2 517.7V522.1M928.7 518.3V520.3" stroke="#f4ec84"/>
<path d="M930.3 519.6V523.8M933.5 525.7V528.5M935.1 528.5V532.8" stroke="#1e8cf0"/>
<path d="M936.6 532.3V534.3" stroke="#f4ec84"/>
<path d="M938.2 530.4V533.8" stroke="#ff1a1a"/>
<path d="M939.8 528.9V530.9" stroke="#f4ec84"/>
<path d="M941.4 526.2V533.5M944.5 524.6V526.6" stroke="#ff1a1a"/>
<path d="M946.1 525.1V534.4" stroke="#f4ec84"/>
<path d="M947.7 527.0V529.1" stroke="#1e8cf0"/>
<path d="M949.3 523.6V529.1" stroke="#ff1a1a"/>
<path d="M950.9 523.6V526.4" stroke="#1e8cf0"/>
<path d="M952.4 524.5V526.5" stroke="#ff1a1a"/>
<path d="M954.0 523.6V525.6" stroke="#f4ec84"/>
<path d="M955.6 519.1V524.2M957.2 517.2V522.2" stroke="#ff1a1a"/>
<path d="M960.3 516.7V518.7" stroke="#f4ec84"/>
<path d="M961.9 516.8V518.8" stroke="#ff1a1a"/>
<path d="M963.5 516.5V518.5" stroke="#1e8cf0"/>
<path d="M965.1 517.4V519.4" stroke="#f4ec84"/>
<path d="M966.7 518.8V521.2M968.2 521.2V523.4M969.8 523.2V525.2M971.4 524.5V526.5" stroke="#1e8cf0"/>
<path d="M973.0 525.1V527.1" stroke="#f4ec84"/>
<path d="M974.6 526.3V529.3" stroke="#1e8cf0"/>
<path d="M976.1 528.3V530.3M977.7 528.6V530.6" stroke="#f4ec84"/>
<path d="M979.3 526.5V529.5" stroke="#ff1a1a"/>
<path d="M980.9 523.3V526.5" stroke="#f4ec84"/>
<path d="M982.5 518.2V523.3M984.0 514.5V518.2" stroke="#ff1a1a"/>
<path d="M985.6 513.9V515.9" stroke="#f4ec84"/>
<path d="M987.2 515.3V517.4M988.8 516.9V518.9" stroke="#1e8cf0"/>
<path d="M990.4 517.3V519.3" stroke="#f4ec84"/>
<path d="M991.9 515.8V517.8" stroke="#ff1a1a"/>
<path d="M993.5 515.5V517.5" stroke="#1e8cf0"/>
<path d="M1006.2 525.4V530.3" stroke="#ff1a1a"/>
<path d="M1007.7 516.8V526.8M1009.3 526.2V536.8" stroke="#1e8cf0"/>
<path d="M1010.9 528.2V535.9M1012.5 527.6V529.6M1014.1 529.1V531.7" stroke="#f4ec84"/>
<path d="M1015.6 531.1V533.1" stroke="#1e8cf0"/>
<path d="M1018.8 534.1V536.1M1020.4 534.0V536.0" stroke="#f4ec84"/>
<path d="M1022.0 534.1V536.1M1023.5 530.6V534.7" stroke="#ff1a1a"/>
<path d="M1025.1 529.6V531.6" stroke="#f4ec84"/>
<path d="M1026.7 529.0V531.0" stroke="#ff1a1a"/>
<path d="M1028.3 528.6V530.6" stroke="#f4ec84"/>
<path d="M1031.4 526.3V528.3M1034.6 529.3V532.4" stroke="#1e8cf0"/>
<path d="M1036.2 530.6V532.6" stroke="#f4ec84"/>
<path d="M1037.8 527.1V530.9M1039.3 524.3V527.1" stroke="#ff1a1a"/>
<path d="M1040.9 519.8V526.3M1042.5 525.3V532.4M1045.7 523.1V525.1M1047.2 523.0V525.0" stroke="#f4ec84"/>
<path d="M1048.8 519.5V531.0" stroke="#ff1a1a"/>
<path d="M1050.4 518.5V520.5" stroke="#f4ec84"/>
<path d="M1052.0 519.9V523.0M1055.1 521.7V524.0M1056.7 523.4V525.4M1058.3 524.7V529.4M1059.9 529.4V533.4" stroke="#1e8cf0"/>
<path d="M1061.5 530.4V533.4" stroke="#f4ec84"/>
<path d="M1063.0 530.4V534.9M1064.6 534.8V536.8" stroke="#1e8cf0"/>
<path d="M1066.2 536.7V538.9" stroke="#f4ec84"/>
<path d="M1067.8 538.6V540.6" stroke="#1e8cf0"/>
<path d="M1072.5 535.5V540.3M1074.1 531.8V535.5M1075.7 528.4V531.8" stroke="#ff1a1a"/>
<path d="M1077.3 526.7V528.7" stroke="#f4ec84"/>
<path d="M1078.8 525.1V527.1" stroke="#ff1a1a"/>
<path d="M1080.4 524.6V526.6" stroke="#1e8cf0"/>
<path d="M1082.0 525.1V527.1" stroke="#f4ec84"/>
<path d="M1083.6 524.9V526.9" stroke="#ff1a1a"/>
<path d="M1086.7 527.3V529.3" stroke="#f4ec84"/>
<path d="M1088.3 527.5V529.5" stroke="#1e8cf0"/>
<path d="M1089.9 528.2V532.7M1091.5 520.6V528.9" stroke="#f4ec84"/>
<path d="M1093.1 510.8V520.6M1094.6 496.6V510.8" stroke="#ff1a1a"/>
<path d="M1096.2 497.1V501.5" stroke="#f4ec84"/>
<path d="M1097.8 492.6V497.1M1099.4 491.0V493.0M1101.0 489.8V491.8M1102.5 484.5V490.2M1104.1 481.3V484.5M1105.7 475.8V481.3M1107.3 472.1V475.8" stroke="#ff1a1a"/>
<path d="M1108.9 471.1V473.1" stroke="#f4ec84"/>
<path d="M1110.4 469.8V471.8" stroke="#ff1a1a"/>
<path d="M1112.0 468.3V470.3" stroke="#f4ec84"/>
<path d="M1113.6 464.3V468.8M1115.2 459.9V464.3" stroke="#ff1a1a"/>
<path d="M1116.8 459.7V461.7" stroke="#f4ec84"/>
<path d="M1118.3 458.2V461.6" stroke="#ff1a1a"/>
<path d="M1119.9 457.2V459.2M1121.5 457.4V459.4" stroke="#f4ec84"/>
<path d="M1123.1 458.0V460.3" stroke="#1e8cf0"/>
<path d="M1124.7 459.3V461.3M1126.2 459.9V461.9" stroke="#f4ec84"/>
<path d="M1127.8 460.7V463.3" stroke="#1e8cf0"/>
<path d="M1129.4 459.9V463.3M1131.0 458.1V460.1" stroke="#ff1a1a"/>
<path d="M1134.1 461.1V463.1M1135.7 455.9V461.6" stroke="#f4ec84"/>
<path d="M1137.3 455.9V465.2" stroke="#1e8cf0"/>
<path d="M1138.9 458.5V460.5" stroke="#ff1a1a"/>
<path d="M1142.0 457.9V462.0" stroke="#f4ec84"/>
<path d="M1143.6 458.0V462.0" stroke="#ff1a1a"/>
<path d="M1145.2 458.0V462.9" stroke="#1e8cf0"/>
<path d="M1146.8 458.4V460.4M1148.4 455.4V458.5" stroke="#ff1a1a"/>
<path d="M1149.9 455.2V457.2" stroke="#1e8cf0"/>
<path d="M1151.5 450.9V457.1M1153.1 445.8V450.9" stroke="#ff1a1a"/>
<path d="M1154.7 445.8V456.4" stroke="#1e8cf0"/>
<path d="M1156.3 447.0V449.0M1157.8 445.5V447.5M1159.4 441.2V445.5" stroke="#ff1a1a"/>
<path d="M1161.0 440.9V442.9M1162.6 441.7V443.7" stroke="#f4ec84"/>
<path d="M1164.2 440.1V442.1M1165.7 437.2V440.2M1167.3 432.8V437.2" stroke="#ff1a1a"/>
<path d="M1168.9 431.8V433.8" stroke="#f4ec84"/>
<path d="M1170.5 433.4V435.4" stroke="#1e8cf0"/>
<path d="M1172.1 434.4V436.4" stroke="#f4ec84"/>
<path d="M1173.6 432.0V435.0" stroke="#ff1a1a"/>
<path d="M1175.2 432.0V434.0" stroke="#1e8cf0"/>
<path d="M1176.8 420.6V434.0M1178.4 423.8V428.6M1180.0 416.7V423.8" stroke="#ff1a1a"/>
<path d="M1181.5 414.0V416.7" stroke="#f4ec84"/>
<path d="M1183.1 411.5V418.9" stroke="#1e8cf0"/>
<path d="M1184.7 418.9V424.9" stroke="#f4ec84"/>
<path d="M1186.3 424.9V428.8" stroke="#1e8cf0"/>
<path d="M1187.9 427.0V429.0" stroke="#ff1a1a"/>
<path d="M1189.4 426.2V428.2" stroke="#f4ec84"/>
<path d="M1191.0 421.5V427.5" stroke="#ff1a1a"/>
<path d="M1192.6 419.3V421.5" stroke="#f4ec84"/>
<path d="M1194.2 419.3V422.2" stroke="#1e8cf0"/>
<path d="M1195.8 421.2V423.2M1197.3 421.0V423.0" stroke="#f4ec84"/>
<path d="M1198.9 422.3V424.5M1200.5 424.5V432.2" stroke="#1e8cf0"/>
<path d="M1202.1 431.2V433.2" stroke="#f4ec84"/>
<path d="M1203.7 430.5V432.5" stroke="#ff1a1a"/>
<path d="M1205.2 431.0V434.4M1206.8 434.3V436.3" stroke="#1e8cf0"/>
<path d="M1208.4 436.1V439.2" stroke="#f4ec84"/>
<path d="M1210.0 439.2V442.8" stroke="#1e8cf0"/>
<path d="M1211.6 441.8V443.8" stroke="#f4ec84"/>
<path d="M1213.1 443.1V445.1M1214.7 444.8V451.0" stroke="#1e8cf0"/>
<path d="M1216.3 449.5V451.5" stroke="#ff1a1a"/>
<path d="M1217.9 449.9V454.2" stroke="#1e8cf0"/>
<path d="M1219.5 453.9V455.9" stroke="#f4ec84"/>
<path d="M1221.0 455.6V461.1M1222.6 461.1V463.8" stroke="#1e8cf0"/>
<path d="M1224.2 461.5V463.8M1225.8 456.4V461.5M1227.4 454.0V456.4" stroke="#ff1a1a"/>
<path d="M1228.9 446.1V454.6" stroke="#f4ec84"/>
<path d="M1230.5 453.1V455.1M1232.1 450.1V457.0M1233.7 456.5V458.5M1235.3 457.4V459.4M1238.4 459.5V461.5" stroke="#1e8cf0"/>
<path d="M1240.0 459.7V461.7" stroke="#ff1a1a"/>
<path d="M1241.6 459.9V464.4" stroke="#1e8cf0"/>
<path d="M1243.2 460.8V462.8M1244.7 460.7V462.7M1246.3 461.4V463.4" stroke="#f4ec84"/>
<path d="M1247.9 456.7V462.5" stroke="#ff1a1a"/>
<path d="M1249.5 456.7V463.9M1251.1 463.9V470.8M1252.6 470.8V480.0" stroke="#1e8cf0"/>
<path d="M1254.2 477.8V480.0" stroke="#ff1a1a"/>
<path d="M1255.8 477.7V479.7M1259.0 491.4V499.8M1260.5 499.8V504.5M1262.1 504.5V507.3" stroke="#1e8cf0"/>
<path d="M1265.3 487.3V499.7M1266.9 478.7V487.3" stroke="#ff1a1a"/>
<path d="M1268.4 478.7V480.7M1270.0 480.6V483.7" stroke="#1e8cf0"/>
<path d="M1271.6 483.7V485.9M1273.2 484.9V486.9" stroke="#f4ec84"/>
<path d="M1274.8 485.0V487.0M1276.3 486.7V488.7M1279.5 487.0V491.6M1281.1 491.3V493.3M1282.7 492.9V497.3M1284.2 497.3V502.5M1285.8 502.5V509.2" stroke="#1e8cf0"/>
<path d="M1287.4 509.2V514.6" stroke="#f4ec84"/>
<path d="M1289.0 514.2V516.2M1290.6 515.7V520.4M1292.1 520.4V523.0" stroke="#1e8cf0"/>
<path d="M1293.7 522.0V524.0" stroke="#f4ec84"/>
<path d="M1295.3 519.7V523.6" stroke="#ff1a1a"/>
<path d="M1296.9 517.4V522.1" stroke="#1e8cf0"/>
<path d="M1298.5 519.4V524.5M1300.0 517.7V519.7" stroke="#ff1a1a"/>
<path d="M1303.2 515.8V517.9" stroke="#1e8cf0"/>
<path d="M1304.8 516.9V518.9M1306.4 517.8V520.2" stroke="#f4ec84"/>
<path d="M1307.9 520.2V523.1" stroke="#1e8cf0"/>
<path d="M1309.5 521.7V523.7" stroke="#ff1a1a"/>
<path d="M1311.1 522.2V527.7" stroke="#1e8cf0"/>
<path d="M1312.7 525.5V527.7" stroke="#f4ec84"/>
<path d="M1314.3 525.5V528.7" stroke="#1e8cf0"/>
<path d="M1315.8 528.7V530.8" stroke="#f4ec84"/>
<path d="M1317.4 530.8V535.9" stroke="#1e8cf0"/>
<path d="M1319.0 533.5V540.7" stroke="#ff1a1a"/>
<path d="M1320.6 530.9V533.5M1322.2 525.4V530.9" stroke="#f4ec84"/>
<path d="M1325.3 518.0V522.3M1326.9 514.6V518.4" stroke="#ff1a1a"/>
<path d="M1328.5 505.2V514.6M1331.6 500.5V506.5" stroke="#f4ec84"/>
<path d="M1333.2 503.6V505.6" stroke="#ff1a1a"/>
<path d="M1334.8 503.2V505.2M1336.4 503.6V505.6" stroke="#f4ec84"/>
<path d="M1339.5 501.8V503.8M1341.1 503.7V505.7" stroke="#1e8cf0"/>
<path d="M1344.3 501.5V504.1" stroke="#ff1a1a"/>
<path d="M1345.9 501.5V504.0" stroke="#1e8cf0"/>
<path d="M1347.4 502.0V504.0" stroke="#ff1a1a"/>
<path d="M1349.0 502.1V505.2" stroke="#f4ec84"/>
<path d="M1350.6 505.2V507.4M1352.2 507.2V509.2" stroke="#1e8cf0"/>
<path d="M1355.3 509.0V511.0" stroke="#f4ec84"/>
<path d="M1356.9 508.8V510.8" stroke="#ff1a1a"/>
<path d="M1358.5 509.3V511.8" stroke="#1e8cf0"/>
<path d="M1360.1 510.2V512.2" stroke="#f4ec84"/>
<path d="M1361.7 510.7V513.5M1363.2 513.5V518.7" stroke="#1e8cf0"/>
<path d="M1364.8 517.7V519.7M1366.4 516.4V523.1" stroke="#f4ec84"/>
<path d="M1368.0 516.6V519.3M1371.1 512.6V520.1" stroke="#1e8cf0"/>
<path d="M1372.7 519.1V521.1" stroke="#f4ec84"/>
<path d="M1374.3 517.5V519.5" stroke="#ff1a1a"/>
<path d="M1375.9 517.5V520.1" stroke="#1e8cf0"/>
<path d="M1377.5 519.1V521.1" stroke="#f4ec84"/>
<path d="M1379.0 520.3V527.4M1382.2 529.7V534.9" stroke="#1e8cf0"/>
<path d="M1385.4 540.3V542.3" stroke="#ff1a1a"/>
<path d="M1388.5 538.6V540.6M1396.4 540.3V543.4M1398.0 540.3V543.0" stroke="#f4ec84"/>
<path d="M1399.6 543.0V545.3" stroke="#1e8cf0"/>
<path d="M1401.2 542.0V546.3M1402.7 543.7V545.7" stroke="#f4ec84"/>
<path d="M1404.3 541.1V546.1" stroke="#1e8cf0"/>
<path d="M1407.5 537.0V541.4M1412.2 527.6V534.2" stroke="#ff1a1a"/>
<path d="M1413.8 531.3V533.3M1417.0 531.7V533.7" stroke="#f4ec84"/>
<path d="M1418.5 530.1V532.5" stroke="#ff1a1a"/>
<path d="M1420.1 529.1V531.1" stroke="#f4ec84"/>
<path d="M1421.7 530.5V532.6" stroke="#1e8cf0"/>
<path d="M1424.9 537.4V539.4M1426.4 538.9V545.2" stroke="#f4ec84"/>
<path d="M1428.0 545.2V552.8M1431.2 554.2V562.7M1432.8 562.1V564.1" stroke="#1e8cf0"/>
<path d="M1435.9 557.4V559.4M1437.5 558.9V561.1" stroke="#f4ec84"/>
<path d="M1440.7 552.3V555.6" stroke="#ff1a1a"/>
<path d="M1442.2 550.9V552.9" stroke="#f4ec84"/>
<path d="M1443.8 549.9V551.9" stroke="#ff1a1a"/>
<path d="M1445.4 550.4V559.0" stroke="#1e8cf0"/>
<path d="M1448.6 551.2V553.2" stroke="#f4ec84"/>
<path d="M1450.1 550.7V552.7" stroke="#ff1a1a"/>
<path d="M1451.7 550.6V552.6M1453.3 552.4V554.5" stroke="#1e8cf0"/>
<path d="M1456.5 548.5V555.3" stroke="#ff1a1a"/>
<path d="M1458.0 547.5V549.5" stroke="#f4ec84"/>
<path d="M1459.6 548.2V550.6" stroke="#1e8cf0"/>
<path d="M1461.2 549.6V551.6" stroke="#f4ec84"/>
<path d="M1462.8 546.6V551.1" stroke="#ff1a1a"/>
<path d="M1465.9 547.1V549.1" stroke="#f4ec84"/>
<path d="M1467.5 548.5V550.5" stroke="#1e8cf0"/>
<path d="M1469.1 548.4V550.4M1470.7 546.0V548.5" stroke="#ff1a1a"/>
<path d="M1472.3 540.6V549.5" stroke="#1e8cf0"/>
<path d="M1473.8 547.7V549.7" stroke="#ff1a1a"/>
<path d="M1475.4 547.0V549.0" stroke="#f4ec84"/>
<path d="M1477.0 547.8V549.8" stroke="#1e8cf0"/>
<path d="M1478.6 548.8V550.8M1480.2 548.7V550.7M1483.3 547.1V549.1" stroke="#f4ec84"/>
<path d="M1488.1 551.1V553.1" stroke="#1e8cf0"/>
<path d="M1491.2 553.4V555.4" stroke="#ff1a1a"/>
<path d="M1492.8 552.8V554.8M1494.4 553.1V555.1M1497.5 550.1V553.1M1499.1 550.1V552.6" stroke="#f4ec84"/>
<path d="M1503.9 545.1V550.5" stroke="#ff1a1a"/>
<path d="M1505.4 545.1V549.7" stroke="#1e8cf0"/>
<path d="M1507.0 544.5V549.7M1508.6 543.0V545.0" stroke="#ff1a1a"/>
<path d="M1510.2 543.1V545.1" stroke="#f4ec84"/>
<path d="M1513.3 546.3V548.3M1514.9 547.2V549.2" stroke="#1e8cf0"/>
<path d="M1516.5 547.2V551.6M1521.2 549.8V551.8" stroke="#ff1a1a"/>
<path d="M1527.6 549.6V551.6M1529.1 543.0V552.9" stroke="#1e8cf0"/>
<path d="M1530.7 545.1V552.6" stroke="#ff1a1a"/>
<path d="M1533.9 552.4V554.4" stroke="#f4ec84"/>
<path d="M1535.5 550.0V553.1" stroke="#ff1a1a"/>
<path d="M1537.0 549.4V551.4M1538.6 550.7V553.3" stroke="#1e8cf0"/>
<path d="M1540.2 551.5V553.5M1541.8 551.7V557.0" stroke="#f4ec84"/>
<path d="M1543.4 557.0V562.7" stroke="#1e8cf0"/>
<path d="M1544.9 560.8V562.8" stroke="#f4ec84"/>
<path d="M1548.1 560.8V566.8M1551.3 568.8V572.4" stroke="#1e8cf0"/>
<path d="M1552.8 571.4V573.4" stroke="#f4ec84"/>
<path d="M1554.4 571.1V573.1" stroke="#ff1a1a"/>
<path d="M1559.2 573.6V575.6" stroke="#1e8cf0"/>
<path d="M1560.7 574.4V576.4" stroke="#f4ec84"/>
<path d="M1563.9 577.0V581.8M1565.5 581.4V583.4M1567.1 583.0V585.0" stroke="#1e8cf0"/>
<path d="M1570.2 585.6V588.1" stroke="#f4ec84"/>
<path d="M1573.4 589.0V596.3" stroke="#1e8cf0"/>
<path d="M1576.5 599.0V601.0" stroke="#f4ec84"/>
<path d="M1579.7 600.0V602.9M1582.9 602.0V604.1" stroke="#1e8cf0"/>
<path d="M1597.1 614.1V616.1" stroke="#f4ec84"/>
<path d="M1598.7 613.7V615.7" stroke="#ff1a1a"/>
<path d="M1600.2 613.7V617.6" stroke="#1e8cf0"/>
<path d="M1606.6 614.0V616.0" stroke="#ff1a1a"/>
<path d="M1608.1 614.3V616.3M1612.9 612.6V618.0" stroke="#1e8cf0"/>
<path d="M1614.5 617.0V619.0M1619.2 609.9V611.9M1622.4 605.0V613.9" stroke="#f4ec84"/>
<path d="M1623.9 612.7V614.7M1630.3 610.1V612.1" stroke="#1e8cf0"/>
<path d="M1631.8 610.0V612.0" stroke="#f4ec84"/>
<path d="M1639.7 617.3V622.0M1646.1 619.3V621.5" stroke="#1e8cf0"/>
<path d="M1652.4 623.6V625.6M1654.0 622.4V624.5" stroke="#f4ec84"/>
<path d="M1657.1 621.1V623.3" stroke="#ff1a1a"/>
<path d="M1661.9 614.4V616.4" stroke="#f4ec84"/>
<path d="M1665.0 612.8V614.8" stroke="#1e8cf0"/>
<path d="M1669.8 610.4V613.9M1674.5 614.0V616.6" stroke="#ff1a1a"/>
<path d="M1687.1 608.8V610.8" stroke="#1e8cf0"/>
<path d="M1688.7 607.9V610.2" stroke="#ff1a1a"/>
<path d="M1690.3 606.9V608.9" stroke="#f4ec84"/>
<path d="M1698.2 609.5V617.4" stroke="#1e8cf0"/>
<path d="M1701.4 620.9V622.9M1707.7 618.4V620.4" stroke="#ff1a1a"/>
<path d="M1709.3 618.6V624.8" stroke="#1e8cf0"/>
<path d="M1717.2 620.7V622.7M1718.7 620.4V622.4" stroke="#f4ec84"/>
<path d="M1721.9 614.1V618.2" stroke="#ff1a1a"/>
<path d="M1723.5 613.5V615.5" stroke="#1e8cf0"/>
<path d="M1729.8 606.6V611.8" stroke="#f4ec84"/>
<path d="M1733.0 604.7V606.7" stroke="#1e8cf0"/>
<path d="M1739.3 597.6V601.5" stroke="#ff1a1a"/>
<path d="M1740.9 596.6V598.6" stroke="#f4ec84"/>
<path d="M1755.1 588.0V590.0" stroke="#1e8cf0"/>
<path d="M1756.7 589.6V591.6" stroke="#f4ec84"/>
<path d="M1767.7 595.1V600.0M1780.4 592.8V595.7" stroke="#1e8cf0"/>
<path d="M1785.1 598.8V600.8" stroke="#f4ec84"/>
<path d="M1789.8 598.1V600.1" stroke="#1e8cf0"/>
<path d="M1793.0 599.6V601.6" stroke="#ff1a1a"/>
<path d="M1796.2 602.0V604.0" stroke="#f4ec84"/>
<path d="M1810.4 588.3V593.8" stroke="#ff1a1a"/>
<path d="M1812.0 583.5V588.3" stroke="#f4ec84"/>
<path d="M1819.9 594.7V604.6" stroke="#1e8cf0"/>
<path d="M1830.9 594.0V596.0" stroke="#ff1a1a"/>
<path d="M1834.1 592.1V594.1M1835.7 593.6V595.6" stroke="#1e8cf0"/>
<path d="M1837.2 594.3V596.3" stroke="#f4ec84"/>
<path d="M1838.8 595.3V597.9" stroke="#1e8cf0"/>
<path d="M1842.0 591.7V595.8M1851.5 586.0V592.8" stroke="#ff1a1a"/>
<path d="M1854.6 586.6V588.6" stroke="#f4ec84"/>
<path d="M1857.8 584.2V588.0M1860.9 585.9V587.9" stroke="#ff1a1a"/>
<path d="M1862.5 585.2V587.2" stroke="#f4ec84"/>
<path d="M1881.5 592.0V594.7" stroke="#ff1a1a"/>
<path d="M1883.1 592.0V595.2" stroke="#1e8cf0"/>
<path d="M1884.6 593.8V595.8" stroke="#f4ec84"/>
<path d="M1887.8 596.3V598.3" stroke="#1e8cf0"/>
</g>
<g clip-path="url(#c3)"><path d="M13.9 705.6V708.0H15.5V705.6H17.1V712.8H18.6V712.8H20.2V716.4H21.8V716.4H23.4V717.6H25.0V721.2H26.5V723.6H28.1V720.0H29.7V717.6H31.3V717.6H32.9V714.0H34.4V705.6H36.0V703.2H37.6V705.6H39.2V710.4H40.8V715.2H42.3V716.4H43.9V720.0H45.5V712.8H47.1V712.8H48.7V716.4H50.2V720.0H51.8V722.4H53.4V718.8H55.0V721.2H56.6V723.6H58.1V723.6H59.7V723.6H61.3V730.8H62.9V733.2H64.5V733.2H66.0V732.0H67.6V736.8H69.2V738.0H70.8V736.8H72.4V738.0H73.9V712.8H75.5V708.0H77.1V738.0H78.7V739.2H80.3V739.2H81.8V739.2H83.4V735.6H85.0V728.4H86.6V729.6H88.2V734.4H89.7V740.4H91.3V750.0H92.9V750.0H94.5V745.2H96.1V746.4H97.6V745.2H99.2V746.4H100.8V744.0H102.4V738.0H104.0V727.2H105.5V722.4H107.1V718.8H108.7V716.4H110.3V710.4H111.9V710.4H113.4V712.8H115.0V717.6H116.6V721.2H118.2V723.6H119.8V727.2H121.3V726.0H122.9V728.4H124.5V727.2H126.1V726.0H127.7V726.0H129.2V730.8H130.8V726.0H132.4V727.2H134.0V726.0H135.6V724.8H137.1V722.4H138.7V720.0H140.3V718.8H141.9V724.8H143.5V728.4H145.0V722.4H146.6V722.4H148.2V718.8H149.8V714.0H151.4V711.6H152.9V712.8H154.5V709.2H156.1V714.0H157.7V720.0H159.3V721.2H160.8V721.2H162.4V720.0H164.0V720.0H165.6V721.2H167.2V723.6H168.7V718.8H170.3V721.2H171.9V722.4H173.5V721.2H175.1V720.0H176.6V721.2H178.2V717.6H179.8V714.0H181.4V715.2H183.0V710.4H184.5V709.2H186.1V708.0H187.7V706.8H189.3V709.2H190.9V712.8H192.4V710.4H194.0V714.0H195.6V712.8H197.2V714.0H198.8V717.6H200.3V714.0H201.9V712.8H203.5V715.2H205.1V714.0H206.7V714.0H208.2V715.2H209.8V714.0H211.4V717.6H213.0V715.2H214.6V717.6H216.1V716.4H217.7V715.2H219.3V714.0H220.9V714.0H222.5V717.6H224.0V722.4H225.6V726.0H227.2V727.2H228.8V727.2H230.4V724.8H231.9V730.8H233.5V730.8H235.1V732.0H236.7V744.0H238.3V742.8H239.8V738.0H241.4V736.8H243.0V735.6H244.6V745.2H246.2V752.4H247.7V758.4H249.3V760.8H250.9V768.0H252.5V771.6H254.1V775.2H255.6V774.0H257.2V775.2H258.8V786.0H260.4V793.2H262.0V798.0H263.5V810.0H265.1V812.4H266.7V808.8H268.3V808.8H269.9V807.6H271.4V801.6H273.0V793.2H274.6V787.2H276.2V783.6H277.8V780.0H279.3V775.2H280.9V775.2H282.5V777.6H284.1V778.8H285.7V782.4H287.2V778.8H288.8V780.0H290.4V782.4H292.0V783.6H293.6V782.4H295.1V781.2H296.7V782.4H298.3V780.0H299.9V775.2H301.5V776.4H303.0V774.0H304.6V774.0H306.2V774.0H307.8V775.2H309.4V778.8H310.9V780.0H312.5V782.4H314.1V782.4H315.7V789.6H317.3V793.2H318.8V793.2H320.4V794.4H322.0V792.0H323.6V795.6H325.2V789.6H326.7V790.8H328.3V789.6H329.9V790.8H331.5V787.2H333.1V784.8H334.6V784.8H336.2V784.8H337.8V787.2H339.4V787.2H341.0V790.8H342.5V794.4H344.1V790.8H345.7V795.6H347.3V802.8H348.9V805.2H350.4V801.6H352.0V805.2H353.6V804.0H355.2V804.0H356.8V802.8H358.3V807.6H359.9V800.4H361.5V796.8H363.1V798.0H364.7V801.6H366.2V805.2H367.8V812.4H369.4V818.4H371.0V824.4H372.6V825.6H374.1V828.0H375.7V830.4H377.3V829.2H378.9V828.0H380.5V824.4H382.0V822.0H383.6V828.0H385.2V832.8H386.8V832.8H388.4V826.8H389.9V822.0H391.5V823.2H393.1V819.6H394.7V818.4H396.3V813.6H397.8V810.0H399.4V810.0H401.0V810.0H402.6V812.4H404.2V816.0H405.7V819.6H407.3V823.2H408.9V820.8H410.5V819.6H412.1V818.4H413.6V820.8H415.2V818.4H416.8V822.0H418.4V823.2H420.0V824.4H421.5V825.6H423.1V825.6H424.7V828.0H426.3V828.0H427.9V828.0H429.4V828.0H431.0V828.0H432.6V834.0H434.2V830.4H435.8V828.0H437.3V819.6H438.9V826.8H440.5V830.4H442.1V831.6H443.7V831.6H445.2V832.8H446.8V834.0H448.4V828.0H450.0V823.2H451.6V816.0H453.1V814.8H454.7V818.4H456.3V820.8H457.9V824.4H459.5V828.0H461.0V830.4H462.6V829.2H464.2V823.2H465.8V820.8H467.4V820.8H468.9V820.8H470.5V820.8H472.1V824.4H473.7V828.0H475.3V829.2H476.8V828.0H478.4V823.2H480.0V823.2H481.6V822.0H483.2V825.6H484.7V825.6H486.3V829.2H487.9V830.4H489.5V835.2H491.1V834.0H492.6V836.4H494.2V836.4H495.8V836.4H497.4V835.2H499.0V838.8H500.5V838.8H502.1V831.6H503.7V830.4H505.3V826.8H506.9V825.6H508.4V824.4H510.0V832.8H511.6V831.6H513.2V834.0H514.8V830.4H516.3V828.0H517.9V832.8H519.5V829.2H521.1V830.4H522.7V831.6H524.2V831.6H525.8V830.4H527.4V832.8H529.0V832.8H530.6V835.2H532.1V838.8H533.7V841.2H535.3V842.4H536.9V841.2H538.5V836.4H540.0V834.0H541.6V828.0H543.2V822.0H544.8V822.0H546.4V824.4H547.9V828.0H549.5V830.4H551.1V831.6H552.7V834.0H554.3V835.2H555.8V831.6H557.4V837.6H559.0V844.8H560.6V848.4H562.2V841.2H563.7V832.8H565.3V835.2H566.9V837.6H568.5V837.6H570.1V840.0H571.6V840.0H573.2V838.8H574.8V842.4H576.4V838.8H578.0V840.0H579.5V835.2H581.1V836.4H582.7V836.4H584.3V834.0H585.9V837.6H587.4V837.6H589.0V842.4H590.6V842.4H592.2V840.0H593.8V835.2H595.3V834.0H596.9V832.8H598.5V831.6H600.1V831.6H601.7V835.2H603.2V834.0H604.8V832.8H606.4V834.0H608.0V840.0H609.6V844.8H611.1V844.8H612.7V844.8H614.3V838.8H615.9V834.0H617.5V829.2H619.0V829.2H620.6V829.2H622.2V826.8H623.8V826.8H625.4V822.0H626.9V813.6H628.5V814.8H630.1V816.0H631.7V817.2H633.3V820.8H634.8V823.2H636.4V819.6H638.0V817.2H639.6V818.4H641.2V817.2H642.7V819.6H644.3V824.4H645.9V828.0H647.5V834.0H649.1V824.4H650.6V823.2H652.2V818.4H653.8V820.8H655.4V818.4H657.0V822.0H658.5V822.0H660.1V822.0H661.7V823.2H663.3V830.4H664.9V832.8H666.4V834.0H668.0V830.4H669.6V825.6H671.2V829.2H672.8V828.0H674.3V834.0H675.9V842.4H677.5V846.0H679.1V854.4H680.7V846.0H682.2V842.4H683.8V834.0H685.4V829.2H687.0V826.8H688.6V819.6H690.1V820.8H691.7V817.2H693.3V811.2H694.9V804.0H696.5V801.6H698.0V802.8H699.6V800.4H701.2V801.6H702.8V805.2H704.4V811.2H705.9V814.8H707.5V810.0H709.1V806.4H710.7V805.2H712.3V804.0H713.8V810.0H715.4V813.6H717.0V807.6H718.6V801.6H720.2V798.0H721.7V795.6H723.3V792.0H724.9V790.8H726.5V789.6H728.1V790.8H729.6V793.2H731.2V795.6H732.8V792.0H734.4V793.2H736.0V792.0H737.5V793.2H739.1V789.6H740.7V787.2H742.3V783.6H743.9V781.2H745.4V778.8H747.0V775.2H748.6V775.2H750.2V770.4H751.8V768.0H753.3V772.8H754.9V777.6H756.5V783.6H758.1V786.0H759.7V784.8H761.2V776.4H762.8V786.0H764.4V787.2H766.0V796.8H767.6V799.2H769.1V796.8H770.7V798.0H772.3V801.6H773.9V796.8H775.5V798.0H777.0V804.0H778.6V805.2H780.2V806.4H781.8V802.8H783.4V808.8H784.9V816.0H786.5V813.6H788.1V820.8H789.7V818.4H791.3V814.8H792.8V810.0H794.4V808.8H796.0V808.8H797.6V814.8H799.2V816.0H800.7V812.4H802.3V808.8H803.9V805.2H805.5V801.6H807.1V802.8H808.6V795.6H810.2V790.8H811.8V792.0H813.4V786.0H815.0V789.6H816.5V794.4H818.1V799.2H819.7V804.0H821.3V807.6H822.9V807.6H824.4V805.2H826.0V805.2H827.6V800.4H829.2V796.8H830.8V799.2H832.3V800.4H833.9V802.8H835.5V805.2H837.1V800.4H838.7V800.4H840.2V804.0H841.8V799.2H843.4V796.8H845.0V796.8H846.6V794.4H848.1V790.8H849.7V790.8H851.3V794.4H852.9V795.6H854.5V799.2H856.0V805.2H857.6V808.8H859.2V806.4H860.8V798.0H862.4V798.0H863.9V790.8H865.5V783.6H867.1V769.2H868.7V753.6H870.3V754.8H871.8V753.6H873.4V756.0H875.0V754.8H876.6V760.8H878.2V758.4H879.7V759.6H881.3V762.0H882.9V760.8H884.5V764.4H886.1V763.2H887.6V762.0H889.2V762.0H890.8V757.2H892.4V757.2H894.0V762.0H895.5V771.6H897.1V774.0H898.7V776.4H900.3V776.4H901.9V778.8H903.4V782.4H905.0V784.8H906.6V783.6H908.2V771.6H909.8V768.0H911.3V770.4H912.9V772.8H914.5V772.8H916.1V770.4H917.7V771.6H919.2V772.8H920.8V774.0H922.4V775.2H924.0V776.4H925.6V777.6H927.1V771.6H928.7V766.8H930.3V765.6H931.9V762.0H933.5V764.4H935.0V763.2H936.6V760.8H938.2V758.4H939.8V758.4H941.4V752.4H942.9V753.6H944.5V758.4H946.1V760.8H947.7V766.8H949.3V769.2H950.8V770.4H952.4V772.8H954.0V769.2H955.6V768.0H957.2V770.4H958.7V769.2H960.3V770.4H961.9V768.0H963.5V763.2H965.1V763.2H966.6V760.8H968.2V763.2H969.8V765.6H971.4V766.8H973.0V765.6H974.5V759.6H976.1V768.0H977.7V776.4H979.3V780.0H980.9V780.0H982.4V778.8H984.0V783.6H985.6V781.2H987.2V786.0H988.8V786.0H990.3V787.2H991.9V789.6H993.5V788.4H995.1V787.2H996.7V786.0H998.2V784.8H999.8V786.0H1001.4V780.0H1003.0V780.0H1004.6V781.2H1006.1V787.2H1007.7V792.0H1009.3V796.8H1010.9V806.4H1012.5V804.0H1014.0V804.0H1015.6V802.8H1017.2V800.4H1018.8V802.8H1020.4V811.2H1021.9V822.0H1023.5V818.4H1025.1V816.0H1026.7V813.6H1028.3V813.6H1029.8V817.2H1031.4V822.0H1033.0V826.8H1034.6V826.8H1036.2V831.6H1037.7V830.4H1039.3V832.8H1040.9V830.4H1042.5V824.4H1044.1V822.0H1045.6V826.8H1047.2V826.8H1048.8V825.6H1050.4V823.2H1052.0V817.2H1053.5V810.0H1055.1V806.4H1056.7V807.6H1058.3V805.2H1059.9V810.0H1061.4V810.0H1063.0V807.6H1064.6V806.4H1066.2V800.4H1067.8V798.0H1069.3V799.2H1070.9V800.4H1072.5V805.2H1074.1V810.0H1075.7V805.2H1077.2V804.0H1078.8V799.2H1080.4V800.4H1082.0V805.2H1083.6V805.2H1085.1V800.4H1086.7V794.4H1088.3V792.0H1089.9V798.0H1091.5V801.6H1093.0V818.4H1094.6V834.0H1096.2V842.4H1097.8V847.2H1099.4V850.8H1100.9V855.6H1102.5V856.8H1104.1V859.2H1105.7V862.8H1107.3V864.0H1108.8V868.8H1110.4V871.2H1112.0V871.2H1113.6V872.4H1115.2V880.8H1116.7V890.4H1118.3V892.8H1119.9V892.8H1121.5V886.8H1123.1V885.6H1124.6V882.0H1126.2V879.6H1127.8V882.0H1129.4V888.0H1131.0V891.6H1132.5V890.4H1134.1V890.4H1135.7V894.0H1137.3V896.4H1138.9V898.8H1140.4V898.8H1142.0V891.6H1143.6V886.8H1145.2V884.4H1146.8V882.0H1148.3V884.4H1149.9V879.6H1151.5V878.4H1153.1V874.8H1154.7V871.2H1156.2V865.2H1157.8V860.4H1159.4V852.0H1161.0V858.0H1162.6V860.4H1164.1V861.6H1165.7V864.0H1167.3V865.2H1168.9V866.4H1170.5V868.8H1172.0V871.2H1173.6V876.0H1175.2V882.0H1176.8V889.2H1178.4V888.0H1179.9V882.0H1181.5V874.8H1183.1V870.0H1184.7V859.2H1186.3V847.2H1187.8V841.2H1189.4V849.6H1191.0V858.0H1192.6V862.8H1194.2V861.6H1195.7V862.8H1197.3V855.6H1198.9V846.0H1200.5V837.6H1202.1V828.0H1203.6V822.0H1205.2V816.0H1206.8V811.2H1208.4V777.6H1210.0V777.6H1211.5V775.2H1213.1V776.4H1214.7V783.6H1216.3V793.2H1217.9V781.2H1219.4V768.0H1221.0V756.0H1222.6V756.0H1224.2V764.4H1225.8V771.6H1227.3V775.2H1228.9V782.4H1230.5V792.0H1232.1V795.6H1233.7V801.6H1235.2V806.4H1236.8V808.8H1238.4V811.2H1240.0V814.8H1241.6V818.4H1243.1V819.6H1244.7V814.8H1246.3V813.6H1247.9V810.0H1249.5V807.6H1251.0V806.4H1252.6V805.2H1254.2V802.8H1255.8V793.2H1257.4V790.8H1258.9V789.6H1260.5V786.0H1262.1V801.6H1263.7V812.4H1265.3V813.6H1266.8V822.0H1268.4V822.0H1270.0V814.8H1271.6V811.2H1273.2V810.0H1274.7V811.2H1276.3V814.8H1277.9V820.8H1279.5V824.4H1281.1V831.6H1282.6V840.0H1284.2V846.0H1285.8V854.4H1287.4V862.8H1289.0V861.6H1290.5V871.2H1292.1V880.8H1293.7V883.2H1295.3V895.2H1296.9V901.2H1298.4V907.2H1300.0V900.0H1301.6V896.4H1303.2V889.2H1304.8V895.2H1306.3V901.2H1307.9V906.0H1309.5V908.4H1311.1V914.4H1312.7V919.2H1314.2V921.6H1315.8V927.6H1317.4V919.2H1319.0V909.6H1320.6V908.4H1322.1V910.8H1323.7V910.8H1325.3V916.8H1326.9V921.6H1328.5V925.2H1330.0V932.4H1331.6V944.4H1333.2V960.0H1334.8V963.6H1336.4V962.4H1337.9V951.6H1339.5V946.8H1341.1V943.2H1342.7V940.8H1344.3V940.8H1345.8V940.8H1347.4V940.8H1349.0V936.0H1350.6V940.8H1352.2V946.8H1353.7V949.2H1355.3V955.2H1356.9V958.8H1358.5V958.8H1360.1V957.6H1361.6V954.0H1363.2V960.0H1364.8V957.6H1366.4V957.6H1368.0V956.4H1369.5V956.4H1371.1V957.6H1372.7V955.2H1374.3V949.2H1375.9V946.8H1377.4V949.2H1379.0V949.2H1380.6V945.6H1382.2V946.8H1383.8V946.8H1385.3V948.0H1386.9V964.8H1388.5V973.2H1390.1V980.4H1391.7V988.8H1393.2V980.4H1394.8V972.0H1396.4V963.6H1398.0V966.0H1399.6V974.4H1401.1V970.8H1402.7V968.4H1404.3V968.4H1405.9V968.4H1407.5V970.8H1409.0V974.4H1410.6V978.0H1412.2V981.6H1413.8V981.6H1415.4V985.2H1416.9V991.2H1418.5V996.0H1420.1V998.4H1421.7V988.8H1423.3V986.4H1424.8V980.4H1426.4V974.4H1428.0V968.4H1429.6V972.0H1431.2V979.2H1432.7V981.6H1434.3V981.6H1435.9V979.2H1437.5V976.8H1439.1V984.0H1440.6V985.2H1442.2V985.2H1443.8V982.8H1445.4V980.4H1447.0V979.2H1448.5V973.2H1450.1V967.2H1451.7V962.4H1453.3V955.2H1454.9V951.6H1456.4V949.2H1458.0V949.2H1459.6V950.4H1461.2V954.0H1462.8V952.8H1464.3V956.4H1465.9V962.4H1467.5V960.0H1469.1V958.8H1470.7V957.6H1472.2V955.2H1473.8V952.8H1475.4V956.4H1477.0V956.4H1478.6V958.8H1480.1V961.2H1481.7V960.0H1483.3V966.0H1484.9V969.6H1486.5V968.4H1488.0V975.6H1489.6V973.2H1491.2V975.6H1492.8V978.0H1494.4V976.8H1495.9V979.2H1497.5V972.0H1499.1V967.2H1500.7V964.8H1502.3V967.2H1503.8V964.8H1505.4V962.4H1507.0V962.4H1508.6V958.8H1510.2V951.6H1511.7V949.2H1513.3V944.4H1514.9V943.2H1516.5V949.2H1518.1V951.6H1519.6V956.4H1521.2V963.6H1522.8V964.8H1524.4V960.0H1526.0V956.4H1527.5V954.0H1529.1V952.8H1530.7V949.2H1532.3V951.6H1533.9V954.0H1535.4V956.4H1537.0V963.6H1538.6V961.2H1540.2V963.6H1541.8V964.8H1543.3V964.8H1544.9V962.4H1546.5V958.8H1548.1V950.4H1549.7V948.0H1551.2V945.6H1552.8V945.6H1554.4V946.8H1556.0V948.0H1557.6V949.2H1559.1V951.6H1560.7V945.6H1562.3V944.4H1563.9V942.0H1565.5V945.6H1567.0V945.6H1568.6V949.2H1570.2V945.6H1571.8V944.4H1573.4V942.0H1574.9V938.4H1576.5V934.8H1578.1V931.2H1579.7V927.6H1581.3V930.0H1582.8V932.4H1584.4V937.2H1586.0V937.2H1587.6V937.2H1589.2V931.2H1590.7V933.6H1592.3V933.6H1593.9V928.8H1595.5V926.4H1597.1V922.8H1598.6V921.6H1600.2V922.8H1601.8V921.6H1603.4V922.8H1605.0V922.8H1606.5V926.4H1608.1V931.2H1609.7V934.8H1611.3V928.8H1612.9V920.4H1614.4V916.8H1616.0V916.8H1617.6V920.4H1619.2V925.2H1620.8V919.2H1622.3V920.4H1623.9V918.0H1625.5V914.4H1627.1V918.0H1628.7V924.0H1630.2V928.8H1631.8V922.8H1633.4V927.6H1635.0V927.6H1636.6V926.4H1638.1V922.8H1639.7V920.4H1641.3V920.4H1642.9V919.2H1644.5V922.8H1646.0V928.8H1647.6V936.0H1649.2V936.0H1650.8V934.8H1652.4V936.0H1653.9V934.8H1655.5V932.4H1657.1V933.6H1658.7V933.6H1660.3V933.6H1661.8V937.2H1663.4V942.0H1665.0V945.6H1666.6V951.6H1668.2V950.4H1669.7V954.0H1671.3V950.4H1672.9V951.6H1674.5V950.4H1676.1V961.2H1677.6V968.4H1679.2V974.4H1680.8V975.6H1682.4V978.0H1684.0V973.2H1685.5V976.8H1687.1V979.2H1688.7V976.8H1690.3V976.8H1691.9V978.0H1693.4V974.4H1695.0V973.2H1696.6V978.0H1698.2V979.2H1699.8V982.8H1701.3V982.8H1702.9V980.4H1704.5V978.0H1706.1V975.6H1707.7V982.8H1709.2V987.6H1710.8V996.0H1712.4V994.8H1714.0V994.8H1715.6V993.6H1717.1V991.2H1718.7V990.0H1720.3V994.8H1721.9V1000.8H1723.5V1000.8H1725.0V996.0H1726.6V988.8H1728.2V990.0H1729.8V990.0H1731.4V991.2H1732.9V993.6H1734.5V997.2H1736.1V997.2H1737.7V998.4H1739.3V1006.8H1740.8V1003.2H1742.4V1005.6H1744.0V1005.6H1745.6V1000.8H1747.2V1002.0H1748.7V1008.0H1750.3V1015.2H1751.9V1021.2H1753.5V1028.4H1755.1V1022.4H1756.6V1022.4H1758.2V1016.4H1759.8V1017.6H1761.4V1014.0H1763.0V1011.6H1764.5V1005.6H1766.1V999.6H1767.7V994.8H1769.3V987.6H1770.9V982.8H1772.4V979.2H1774.0V979.2H1775.6V980.4H1777.2V978.0H1778.8V974.4H1780.3V978.0H1781.9V984.0H1783.5V990.0H1785.1V988.8H1786.7V987.6H1788.2V986.4H1789.8V986.4H1791.4V988.8H1793.0V985.2H1794.6V979.2H1796.1V976.8H1797.7V974.4H1799.3V968.4H1800.9V963.6H1802.5V967.2H1804.0V968.4H1805.6V964.8H1807.2V963.6H1808.8V967.2H1810.4V968.4H1811.9V972.0H1813.5V987.6H1815.1V999.6H1816.7V999.6H1818.3V998.4H1819.8V992.4H1821.4V987.6H1823.0V986.4H1824.6V986.4H1826.2V988.8H1827.7V986.4H1829.3V987.6H1830.9V991.2H1832.5V990.0H1834.1V993.6H1835.6V994.8H1837.2V998.4H1838.8V1005.6H1840.4V1011.6H1842.0V1010.4H1843.5V1008.0H1845.1V1005.6H1846.7V1004.4H1848.3V1000.8H1849.9V998.4H1851.4V1000.8H1853.0V996.0H1854.6V994.8H1856.2V996.0H1857.8V998.4H1859.3V997.2H1860.9V998.4H1862.5V1000.8H1864.1V1005.6H1865.7V1009.2H1867.2V1020.0H1868.8V1022.4H1870.4V1017.6H1872.0V1010.4H1873.6V1012.8H1875.1V1010.4H1876.7V1014.0H1878.3V1016.4H1879.9V1009.2H1881.5V1003.2H1883.0V999.6H1884.6V1005.6H1886.2V1012.8H1887.8V1010.4H1889.4V1005.6H1890.9V1008.0H1892.5V1003.2H1894.1V1000.8H1895.7V993.6H1897.3V997.2H1898.8M76.8 739V686.6M1899.8 997V961.8" fill="none" stroke="#ff0000" stroke-width="3.2" stroke-linejoin="miter"/></g>
<path d="M1896 320L1901 323L1896 326Z" fill="#f2ea80"/>
</svg></body></html>
